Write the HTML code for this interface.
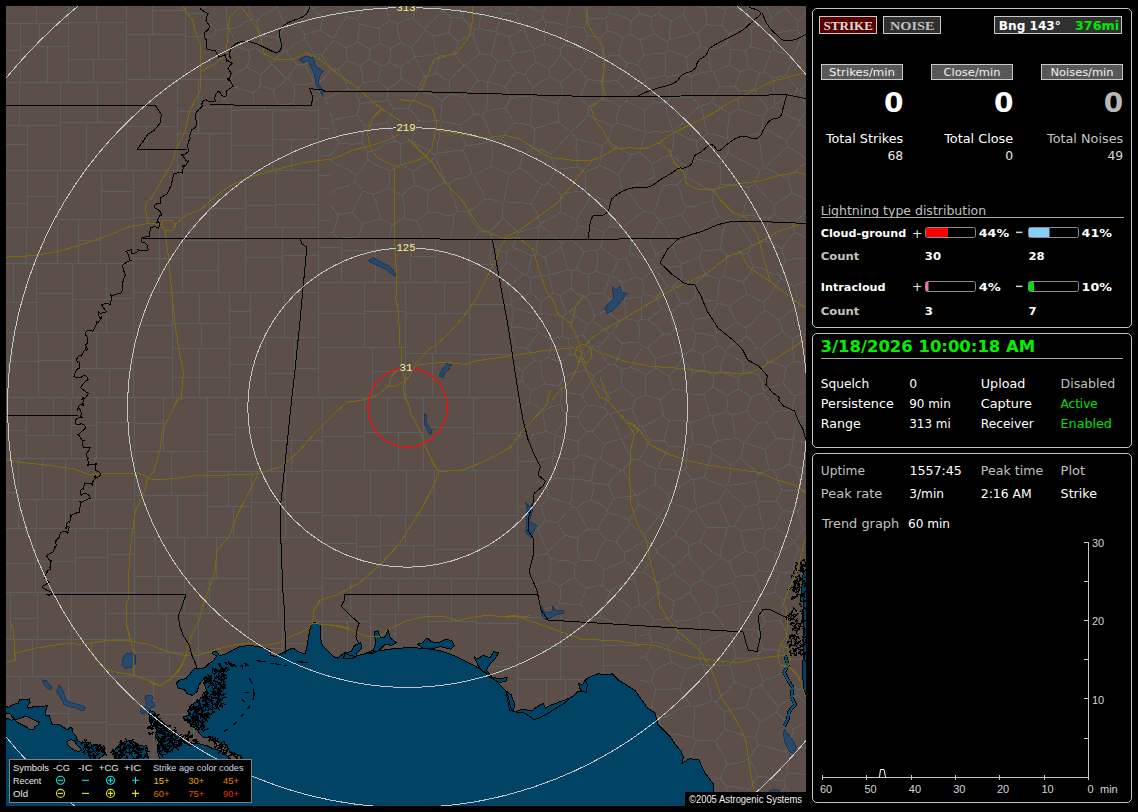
<!DOCTYPE html>
<html lang="en"><head><meta charset="utf-8"><title>Lightning Map</title>
<style>
html,body{margin:0;padding:0;background:#000;overflow:hidden}
svg{display:block;font-family:"DejaVu Sans","Liberation Sans",sans-serif}
</style></head><body>
<svg width="1138" height="812" viewBox="0 0 1138 812">
<rect width="1138" height="812" fill="#000"/>
<defs><clipPath id="mc"><rect x="6" y="6" width="800" height="800"/></clipPath></defs>
<g clip-path="url(#mc)" shape-rendering="crispEdges">
<rect x="6" y="6" width="800" height="800" fill="#5c4f4a"/>
<path d="M794.5 232.4 L805.2 237.0 L807.0 237.5 M794.5 232.4 L792.7 224.0 M792.7 224.0 L801.1 216.5 L807.0 208.9 M807.0 197.5 L805.8 199.2 M805.8 199.2 L807.0 203.8 M794.5 232.4 L787.6 240.4 L781.6 249.1 M807.0 257.8 L804.9 258.1 L795.0 258.4 L785.3 260.7 M785.3 260.7 L781.6 249.1 M706.7 527.3 L716.9 527.4 L727.0 527.8 M706.7 527.3 L703.7 535.1 L698.9 542.0 M698.9 542.0 L706.5 545.9 L712.7 552.0 L720.2 556.0 M727.0 527.8 L724.6 537.2 L721.5 546.4 L720.2 556.0 M626.0 318.5 L638.5 321.3 M626.0 318.5 L625.4 308.6 L623.9 298.7 M638.5 321.3 L641.1 319.7 M641.1 319.7 L641.6 308.2 L641.5 296.7 M641.5 296.7 L632.7 297.8 L623.9 298.7 M585.3 370.3 L581.9 359.5 M585.3 370.3 L593.2 375.5 M593.2 375.5 L601.4 370.4 L609.0 364.6 M581.9 359.5 L587.0 352.9 L591.7 345.9 M609.0 364.6 L602.6 356.2 L598.0 346.7 M598.0 346.7 L591.7 345.9 M607.2 393.9 L599.4 387.4 L593.3 379.1 M607.2 393.9 L604.8 408.3 M604.8 408.3 L595.8 405.7 L586.5 405.0 M593.3 379.1 L588.1 387.0 L582.1 394.3 M582.1 394.3 L586.5 405.0 M608.0 413.4 L604.8 408.3 M608.0 413.4 L610.4 414.3 M610.4 414.3 L620.9 410.8 L631.7 408.5 M631.7 408.5 L636.5 398.4 M622.3 386.6 L629.5 392.4 L636.5 398.4 M622.3 386.6 L615.2 391.2 L607.2 393.9 M562.3 391.4 L559.3 386.0 M562.3 391.4 L572.1 393.5 L582.1 394.3 M559.3 386.0 L563.8 377.0 M563.8 377.0 L574.2 372.7 L585.3 370.3 M593.2 375.5 L593.3 379.1 M562.3 391.4 L559.9 404.5 M577.8 417.0 L586.5 405.0 M577.8 417.0 L567.0 415.9 M559.9 404.5 L567.0 415.9 M523.5 406.4 L521.0 405.8 M523.5 406.4 L522.4 410.9 M804.9 803.3 L803.1 807.0 M804.9 803.3 L807.0 803.2 M706.7 527.3 L701.1 519.0 L696.0 510.3 M729.3 526.3 L727.0 527.8 M729.3 526.3 L725.7 518.1 L722.0 509.9 L718.7 501.5 M696.0 510.3 L697.1 508.5 M718.7 501.5 L707.7 504.4 L697.1 508.5 M729.3 526.3 L734.4 526.1 M734.4 526.1 L739.9 516.4 L745.5 506.7 M745.5 506.7 L739.2 500.5 L732.0 495.2 L726.4 488.3 M718.7 501.5 L726.4 488.3 M608.0 413.4 L602.2 419.2 L597.2 425.7 L591.8 431.9 M610.4 414.3 L614.8 422.2 L617.8 430.7 L621.1 439.1 M621.1 439.1 L612.6 440.9 L604.5 444.2 M604.5 444.2 L598.0 438.2 L591.8 431.9 M577.8 417.0 L581.3 425.0 L586.7 431.9 M591.8 431.9 L586.7 431.9 M689.6 422.7 L692.2 433.2 L693.1 443.9 M689.6 422.7 L700.0 420.0 L709.8 415.4 M709.8 415.4 L712.6 416.3 M712.6 416.3 L713.1 424.5 L716.8 432.0 L717.5 440.1 M693.1 443.9 L701.8 444.7 L710.2 447.6 M717.5 440.1 L710.2 447.6 M687.1 393.2 L687.8 402.5 L687.9 411.9 L687.4 421.2 M687.1 393.2 L695.3 394.5 L703.7 394.7 M687.4 421.2 L689.6 422.7 M703.7 394.7 L707.1 404.9 L709.8 415.4 M528.7 402.7 L531.5 390.8 M528.7 402.7 L536.3 405.9 L542.8 410.9 M559.3 386.0 L544.9 383.9 M559.9 404.5 L551.1 407.0 L542.8 410.9 M531.5 390.8 L544.9 383.9 M563.8 377.0 L560.3 362.8 M581.9 359.5 L570.7 354.0 M570.7 354.0 L560.3 362.8 M591.7 345.9 L582.8 335.0 M582.8 335.0 L568.2 339.0 M570.7 354.0 L568.2 339.0 M609.0 364.6 L614.6 364.7 M622.3 386.6 L621.0 378.2 L621.4 369.6 M614.6 364.7 L621.4 369.6 M612.7 333.5 L610.0 333.9 M612.7 333.5 L622.2 344.0 M610.0 333.9 L604.7 341.0 L598.0 346.7 M614.6 364.7 L619.3 354.7 L622.2 344.0 M619.2 321.4 L612.7 333.5 M619.2 321.4 L626.0 318.5 M638.5 321.3 L639.6 331.9 L638.3 342.5 M622.2 344.0 L630.2 342.0 L638.3 342.5 M528.7 402.7 L523.5 406.4 M542.8 410.9 L544.1 421.0 L546.0 431.1 M527.4 429.6 L532.7 434.9 M532.7 434.9 L546.0 431.1 M567.0 415.9 L561.0 425.2 L554.9 434.5 M546.0 431.1 L554.9 434.5 M573.7 459.5 L574.2 469.4 L573.3 479.4 M573.7 459.5 L563.5 458.6 L553.7 455.9 M573.3 479.4 L563.8 478.6 L554.3 478.6 M554.3 478.6 L553.3 468.0 L552.2 457.3 M553.7 455.9 L552.2 457.3 M573.7 459.5 L579.1 454.6 M579.1 454.6 L578.4 440.9 M578.4 440.9 L566.5 439.0 L555.2 435.0 M553.7 455.9 L554.7 445.5 L555.2 435.0 M578.4 440.9 L586.7 431.9 M532.7 434.9 L530.1 439.5 M552.2 457.3 L541.2 459.3 L535.9 459.0 M554.3 478.6 L547.1 484.9 M547.1 484.9 L539.5 482.4 L537.6 481.3 M807.0 774.4 L805.7 774.5 L796.8 773.6 L787.8 772.9 M785.5 751.8 L787.8 762.2 L787.8 772.9 M785.5 751.8 L789.7 747.8 M789.7 747.8 L800.1 747.4 L807.0 748.3 M734.4 526.1 L740.8 530.6 M745.5 506.7 L757.4 504.1 M757.4 504.1 L759.8 512.2 L761.1 520.6 L764.0 528.6 M740.8 530.6 L752.4 529.3 L764.0 528.6 M727.2 485.6 L730.1 475.5 L730.9 465.0 M726.4 486.5 L718.7 484.0 L711.0 481.5 L704.0 477.2 M730.9 465.0 L721.7 459.1 L712.2 453.5 M712.2 453.5 L709.1 461.3 L706.4 469.1 L704.0 477.2 M697.1 508.5 L694.7 499.1 L694.6 489.4 L693.3 479.9 M693.3 479.9 L704.0 477.2 M633.7 577.7 L625.8 582.7 L617.1 586.5 L609.4 591.9 M633.7 577.7 L636.7 586.8 L638.7 596.1 L639.4 605.6 M639.4 605.6 L631.6 608.5 M631.6 608.5 L624.7 602.5 L616.5 598.2 L609.5 592.3 M631.6 608.5 L626.5 617.6 L622.2 624.0 M609.5 592.3 L607.0 600.9 L602.1 608.6 L600.0 617.3 M615.6 623.7 L610.7 621.1 L600.0 617.3 M587.5 529.2 L577.7 537.8 M587.5 529.2 L597.8 529.6 M597.8 529.6 L606.0 539.4 M594.8 560.8 L597.9 553.4 L601.3 546.0 L606.0 539.4 M594.8 560.8 L579.1 559.9 M577.7 537.8 L577.6 548.9 L579.1 559.9 M691.5 511.6 L684.6 507.1 L676.5 505.3 L669.4 501.2 M691.5 511.6 L686.5 518.6 L682.2 526.1 L676.0 532.1 M669.4 501.2 L664.1 508.7 L659.0 516.3 M676.0 532.1 L667.0 524.7 L659.0 516.3 M698.9 542.0 L689.1 545.6 M696.0 510.3 L691.5 511.6 M689.1 545.6 L683.4 539.7 L676.3 535.4 M676.0 532.1 L676.3 535.4 M804.9 803.3 L798.6 797.5 L791.2 793.0 L784.6 787.6 M774.3 807.0 L772.8 802.5 M784.6 787.6 L779.3 795.5 L772.8 802.5 M787.8 772.9 L783.9 780.4 M784.6 787.6 L783.9 780.4 M694.0 706.9 L690.5 705.5 M694.0 706.9 L694.6 717.1 L693.1 727.4 L693.8 737.6 M690.5 705.5 L682.3 707.9 L674.7 711.8 L667.3 716.2 L659.0 718.6 M659.0 718.6 L661.0 727.6 M666.3 732.9 L669.9 733.6 L677.9 734.6 L685.8 736.4 L693.8 737.6 M805.8 199.2 L792.0 192.9 M806.9 162.5 L800.1 166.9 L793.9 172.1 L788.3 177.9 M792.0 192.9 L788.3 177.9 M806.9 162.5 L805.5 158.0 M805.5 158.0 L796.8 151.9 L787.6 146.8 M787.6 146.8 L780.1 153.7 L772.1 160.0 L765.5 167.8 M788.3 177.9 L780.3 175.4 L773.1 171.2 L765.5 167.8 M531.5 390.8 L522.3 380.9 M522.3 380.9 L516.6 381.4 M201.9 8.3 L205.9 5.0 M622.9 469.8 L628.4 477.9 L631.0 487.7 L636.6 495.7 M636.6 495.7 L625.3 496.6 L614.0 498.6 M614.0 498.6 L608.4 484.8 M608.4 484.8 L614.1 476.6 L621.6 470.0 M604.5 444.2 L600.0 458.9 M579.1 454.6 L588.3 456.5 L596.9 460.5 M600.0 458.9 L596.9 460.5 M573.5 479.6 L572.2 487.7 L571.7 495.9 L570.7 504.1 M573.5 479.6 L582.5 480.0 L591.5 480.9 M591.5 480.9 L593.2 482.9 M593.2 482.9 L593.0 491.6 L591.2 500.1 M591.2 500.1 L583.3 503.1 L576.6 508.2 M576.6 508.2 L572.3 506.5 M570.7 504.1 L572.3 506.5 M547.1 484.9 L548.1 496.7 M548.1 496.7 L559.3 500.7 L570.7 504.1 M596.9 460.5 L593.1 470.5 L591.5 480.9 M608.4 484.8 L593.2 482.9 M621.6 470.0 L614.1 466.9 L607.0 463.1 L600.0 458.9 M614.0 498.6 L607.6 509.2 M607.6 509.2 L599.8 504.0 L591.2 500.1 M587.5 529.2 L582.1 518.7 L576.6 508.2 M597.8 529.6 L602.2 520.7 L608.1 512.7 M608.1 512.7 L607.6 509.2 M622.9 469.8 L632.8 459.4 M632.8 459.4 L626.3 449.8 L621.6 439.3 M631.7 408.5 L635.5 417.2 L639.3 426.0 M621.6 439.3 L631.2 433.6 L639.3 426.0 M636.5 398.4 L645.0 395.1 M663.3 415.4 L662.1 407.4 L659.9 399.6 M663.3 415.4 L656.5 419.9 L649.3 423.7 L641.8 426.8 M645.0 395.1 L659.9 399.6 M641.8 426.8 L639.3 426.0 M712.8 387.0 L703.7 394.7 M712.8 387.0 L720.0 390.9 L726.8 395.6 M712.6 416.3 L726.2 411.6 M726.8 395.6 L727.7 403.7 L726.2 411.6 M713.4 375.2 L704.9 370.3 M713.4 375.2 L720.0 371.2 M703.0 354.5 L704.9 370.3 M703.0 354.5 L710.6 350.3 L717.7 345.4 M717.7 345.4 L725.3 350.8 M725.3 350.8 L725.9 353.1 M720.0 371.2 L722.0 361.8 L725.9 353.1 M681.5 359.1 L688.0 365.2 L692.8 372.7 M681.5 359.1 L676.0 368.3 L668.9 376.3 M692.8 372.7 L688.8 381.8 L684.0 390.5 M668.9 376.3 L673.1 389.1 M684.0 390.5 L673.1 389.1 M703.0 354.5 L692.2 350.1 M704.9 370.3 L692.8 372.7 M681.3 355.6 L692.2 350.1 M681.3 355.6 L681.5 359.1 M687.1 393.2 L684.0 390.5 M712.8 387.0 L713.4 375.2 M687.4 421.2 L678.3 420.6 L669.2 420.8 M663.3 415.4 L669.2 420.8 M659.9 399.6 L666.6 394.5 L673.1 389.1 M717.7 345.4 L715.0 336.4 M692.2 350.1 L694.9 341.9 L695.2 333.3 M715.0 336.4 L705.2 334.2 L695.2 333.3 M671.4 311.8 L671.5 320.9 L673.6 329.9 M671.4 311.8 L681.0 303.7 M673.6 329.9 L682.8 330.2 L691.9 328.9 M681.0 303.7 L687.6 304.0 M687.6 304.0 L691.5 311.6 L695.2 319.3 M695.2 319.3 L691.9 328.9 M681.3 355.6 L676.3 351.9 M673.6 329.9 L670.4 333.6 M695.2 333.3 L691.9 328.9 M676.3 351.9 L674.5 342.4 L670.4 333.6 M661.4 308.8 L655.0 314.5 L648.2 319.7 M661.4 308.8 L671.4 311.8 M648.2 319.7 L656.4 326.3 L663.4 334.1 M663.4 334.1 L670.4 333.6 M631.3 367.6 L636.3 356.7 L642.8 346.7 M631.3 367.6 L638.9 370.6 L645.8 375.0 M645.8 375.0 L655.7 367.9 M655.7 367.9 L655.9 358.8 M655.9 358.8 L647.5 347.7 M642.8 346.7 L647.5 347.7 M621.4 369.6 L631.3 367.6 M638.3 342.5 L642.8 346.7 M645.0 395.1 L645.8 385.1 L645.8 375.0 M668.9 376.3 L655.7 367.9 M676.3 351.9 L666.1 355.3 L655.9 358.8 M663.4 334.1 L655.6 341.1 L647.5 347.7 M641.1 319.7 L648.2 319.7 M748.0 252.9 L751.9 245.4 M748.0 252.9 L737.5 254.1 L727.0 255.6 M751.9 245.4 L747.2 236.9 L742.3 228.6 L736.7 220.7 M727.0 255.6 L720.3 249.4 M720.3 249.4 L721.5 239.7 L723.5 230.2 L726.7 221.0 M726.7 221.0 L736.7 220.7 M785.3 260.7 L780.3 275.5 M781.6 249.1 L774.4 244.0 L766.2 240.9 M753.2 267.1 L762.6 268.7 L771.0 273.3 L780.3 275.5 M753.2 267.1 L748.0 252.9 M766.2 240.9 L751.9 245.4 M753.2 267.1 L749.1 275.1 L743.0 281.6 M743.0 281.6 L733.3 279.3 L723.7 276.3 M723.7 276.3 L725.9 266.0 L727.0 255.6 M801.0 304.9 L796.6 295.9 L794.3 286.3 M801.0 304.9 L793.3 309.4 L786.0 314.4 L779.4 320.3 M779.4 320.3 L772.4 315.3 L765.3 310.3 M781.0 278.5 L775.6 286.6 L770.3 294.8 L763.7 302.1 M781.0 278.5 L794.3 286.3 M765.3 310.3 L763.7 302.1 M780.3 275.5 L781.0 278.5 M743.0 281.6 L747.1 293.9 M747.1 293.9 L755.1 298.6 L763.7 302.1 M807.0 280.7 L803.0 282.0 L794.3 286.3 M803.3 607.9 L800.6 614.2 M800.6 614.2 L802.6 617.4 M782.5 651.5 L787.5 658.6 M782.5 651.5 L785.9 644.0 L788.4 636.1 M787.5 658.6 L797.3 659.3 L803.1 659.0 M803.5 634.0 L797.5 635.6 L788.4 636.1 M651.5 710.7 L653.2 700.3 L656.0 689.7 M640.0 680.7 L641.1 680.7 L651.7 681.6 M656.0 689.7 L651.7 681.6 M659.0 718.6 L655.7 715.3 M679.7 687.9 L684.6 697.0 L690.5 705.5 M679.7 687.9 L668.0 689.8 L656.0 689.7 M580.3 604.4 L583.0 596.3 L586.1 588.4 M580.3 604.4 L570.0 604.3 L559.7 603.1 M559.8 586.2 L560.6 594.7 L559.7 603.1 M559.8 586.2 L566.8 581.6 L574.2 577.4 M574.2 577.4 L579.6 583.5 L586.1 588.4 M602.7 585.7 L594.3 586.2 L586.1 588.4 M602.7 585.7 L609.4 591.9 M590.1 620.5 L600.0 617.3 M590.1 620.5 L586.1 611.9 L580.3 604.4 M575.1 563.7 L567.2 560.4 L558.5 560.3 L550.5 557.3 M575.1 563.7 L574.2 577.4 M549.4 580.2 L551.2 568.8 L550.5 557.3 M549.4 580.2 L559.8 586.2 M603.6 569.9 L594.8 560.8 M603.6 569.9 L602.7 585.7 M575.1 563.7 L579.1 559.9 M639.4 605.6 L642.7 606.4 M642.7 606.4 L649.1 612.7 L653.8 620.4 M653.8 620.4 L648.7 634.7 M640.0 635.3 L640.1 635.3 L648.7 634.7 M556.4 606.6 L560.4 616.8 L562.3 620.8 M556.4 606.6 L559.7 603.1 M543.9 608.8 L556.4 606.6 M565.0 535.4 L556.6 543.6 L547.8 551.3 M565.0 535.4 L557.7 522.6 M547.8 551.3 L542.4 540.8 L538.1 529.7 M557.7 522.6 L545.6 520.6 M538.1 529.7 L545.6 520.6 M577.7 537.8 L565.0 535.4 M550.5 557.3 L547.4 553.8 M547.4 553.8 L547.8 551.3 M572.3 506.5 L564.9 514.4 L557.7 522.6 M541.2 505.8 L548.1 496.7 M541.2 505.8 L545.6 520.6 M693.8 737.6 L696.3 740.9 M696.3 740.9 L692.7 750.2 L689.8 758.8 M772.8 802.5 L764.3 802.3 L755.8 803.8 M753.8 807.0 L755.8 803.8 M725.1 729.7 L735.3 732.4 L745.3 736.2 L755.9 737.6 M725.1 729.7 L724.7 720.6 L723.9 711.6 M760.0 722.5 L755.9 737.6 M760.0 722.5 L754.0 714.3 L746.3 707.6 M746.3 707.6 L735.0 708.7 L723.9 711.6 M786.5 5.0 L786.3 8.6 M807.0 13.2 L804.2 14.8 L798.4 20.9 M786.3 8.6 L792.0 15.1 L798.4 20.9 M792.7 224.0 L783.3 219.0 L773.8 214.2 M792.0 192.9 L783.7 199.2 L774.9 204.7 M774.9 204.7 L773.8 214.2 M766.2 240.9 L766.6 229.2 L769.5 217.7 M773.8 214.2 L769.5 217.7 M736.7 220.7 L743.1 215.2 M769.5 217.7 L760.6 217.4 L752.0 215.4 L743.1 215.2 M763.6 168.0 L760.4 170.2 M774.9 204.7 L767.4 198.4 L761.0 191.2 L754.7 183.7 M760.4 170.2 L754.7 183.7 M743.1 215.2 L744.6 206.0 L747.5 197.1 L748.4 187.8 M748.4 187.8 L754.7 183.7 M787.6 146.8 L786.3 140.1 M786.3 140.1 L778.1 136.4 L770.5 131.4 L762.2 127.9 M763.6 168.0 L762.0 159.3 L760.7 150.6 L759.8 141.9 L758.2 133.2 M758.2 133.2 L762.2 127.9 M429.9 5.0 L432.7 5.9 L442.2 6.6 M442.2 6.6 L442.9 5.0 M607.3 201.6 L598.9 198.0 L589.9 196.8 M607.3 201.6 L609.1 209.6 L610.7 217.7 L610.6 226.0 M610.6 226.0 L603.6 232.1 M578.1 226.0 L586.8 227.2 L595.4 229.0 L603.6 232.1 M578.1 226.0 L576.3 220.4 M576.3 220.4 L580.6 212.4 L585.9 204.9 L589.9 196.8 M609.5 275.8 L595.8 271.3 M610.8 275.3 L615.1 267.9 L618.2 259.8 M618.2 259.8 L609.5 253.8 L601.2 247.1 M601.2 247.1 L597.8 250.0 M595.8 271.3 L598.0 260.8 L597.8 250.0 M576.3 220.4 L568.8 215.7 L560.5 212.4 M585.3 190.9 L589.9 196.8 M585.3 190.9 L577.0 191.5 L568.8 192.6 L560.7 194.2 M560.5 212.4 L560.8 203.3 L560.7 194.2 M232.9 86.5 L224.9 98.3 M232.9 86.5 L243.0 89.6 L253.0 92.6 M224.9 98.3 L228.7 105.0 M253.0 92.6 L254.2 105.0 M435.1 155.1 L427.5 149.6 L419.1 145.5 L411.5 139.9 M435.1 155.1 L434.7 157.3 M434.7 157.3 L428.1 162.8 L420.2 166.4 L413.1 171.2 M411.5 139.9 L401.0 143.7 M413.1 171.2 L400.8 164.4 M401.0 143.7 L400.5 154.0 L400.8 164.4 M436.1 73.3 L424.8 77.1 M436.1 73.3 L437.7 64.4 L439.9 55.7 M424.8 77.1 L420.0 67.1 L415.2 57.0 M415.2 57.0 L426.2 55.9 L436.9 53.3 M439.9 55.7 L436.9 53.3 M435.1 155.1 L437.1 153.3 M411.5 139.9 L415.5 130.5 L418.7 120.9 M418.7 120.9 L429.5 121.3 L440.4 120.1 M437.1 153.3 L437.3 145.2 L439.4 137.4 L440.2 129.4 L441.6 121.6 M387.5 88.9 L395.1 84.6 L401.2 78.4 M387.5 88.9 L387.9 100.5 M387.9 100.5 L394.2 108.6 M394.2 108.6 L408.4 108.2 M408.4 108.2 L413.7 99.3 L419.2 90.5 M401.2 78.4 L409.6 83.6 L418.7 87.6 M419.2 90.5 L418.7 87.6 M418.7 120.9 L414.4 113.9 L408.4 108.2 M442.5 100.7 L441.4 110.4 L440.4 120.1 M442.5 100.7 L435.2 96.1 L427.2 93.4 L419.2 90.5 M541.2 505.8 L532.7 504.6 M529.8 530.0 L528.3 528.6 M529.8 530.0 L538.1 529.7 M619.2 321.4 L612.8 316.3 L606.9 310.6 M622.1 297.4 L623.9 298.7 M622.1 297.4 L609.7 299.3 M606.9 310.6 L609.7 299.3 M609.5 275.8 L607.4 284.9 L603.5 293.4 M595.8 271.3 L588.9 274.4 M588.9 274.4 L588.1 284.2 L589.6 294.0 M589.6 294.0 L603.5 293.4 M622.1 297.4 L622.5 282.7 M610.8 275.3 L622.5 282.7 M609.7 299.3 L603.5 293.4 M717.5 440.1 L726.7 439.9 L735.7 437.9 M726.2 411.6 L732.5 415.0 M735.7 437.9 L733.8 426.5 L732.5 415.0 M710.2 447.6 L712.2 453.5 M730.9 465.0 L740.9 457.9 M735.7 437.9 L744.1 442.6 M740.9 457.9 L744.1 442.6 M693.3 479.9 L691.3 479.0 M693.1 443.9 L687.3 448.8 M687.3 448.8 L686.8 459.7 L685.7 470.6 M691.3 479.0 L685.7 470.6 M669.4 501.2 L668.3 494.6 M691.3 479.0 L683.5 483.9 L676.1 489.6 L668.3 494.6 M639.1 459.2 L645.5 450.2 L649.7 439.9 M639.1 459.2 L647.3 464.9 L656.2 469.3 M657.6 468.5 L661.1 461.1 L665.2 454.1 L668.7 446.7 M649.7 439.9 L664.4 440.5 M664.4 440.5 L668.7 446.7 M632.8 459.4 L639.1 459.2 M641.8 426.8 L649.7 439.9 M636.8 495.9 L646.0 489.7 L655.3 483.8 M655.3 483.8 L656.2 469.3 M685.7 470.6 L676.3 470.4 L666.9 469.6 L657.6 468.5 M668.3 494.6 L661.8 489.2 L655.3 483.8 M687.3 448.8 L678.1 446.7 L668.7 446.7 M669.2 420.8 L666.4 430.5 L664.4 440.5 M736.6 322.5 L727.0 328.6 L716.5 332.7 M736.6 322.5 L732.9 314.3 L728.8 306.3 M716.5 332.7 L714.4 323.8 L711.3 315.2 M711.3 315.2 L718.0 302.9 M728.8 306.3 L718.0 302.9 M725.3 350.8 L731.8 344.8 L739.9 341.3 L746.8 336.0 M745.8 327.8 L736.6 322.5 M745.8 327.8 L746.8 336.0 M715.0 336.4 L716.5 332.7 M747.1 293.9 L737.7 299.8 L728.8 306.3 M745.8 327.8 L752.9 322.6 L758.2 315.5 L765.3 310.3 M695.2 319.3 L703.6 318.5 L711.3 315.2 M717.0 301.3 L706.2 300.0 L695.8 297.1 M687.6 304.0 L695.8 297.1 M719.4 279.2 L723.7 276.3 M719.4 279.2 L718.6 290.3 L717.0 301.3 M585.3 172.4 L599.7 165.5 M585.3 172.4 L585.8 181.7 L585.3 190.9 M607.3 201.6 L615.3 196.5 L622.0 189.8 M622.0 189.8 L618.6 175.0 M618.6 175.0 L609.4 169.7 L599.7 165.5 M622.0 189.8 L625.9 190.8 M610.6 226.0 L622.1 228.9 M622.1 228.9 L629.0 222.3 L636.5 216.6 L644.6 211.6 M625.9 190.8 L632.9 197.1 L637.7 205.3 L644.6 211.6 M792.8 572.2 L802.6 579.9 M792.8 572.2 L794.7 560.3 L799.0 549.0 M799.0 549.0 L807.0 551.7 M799.9 593.1 L801.2 595.1 M799.9 593.1 L802.6 579.9 M803.3 529.2 L794.5 541.2 M803.3 529.2 L807.0 529.0 M794.5 541.8 L799.0 549.0 M654.3 671.4 L650.4 663.7 L645.0 657.0 M654.3 671.4 L662.4 665.8 L671.8 662.3 M645.0 657.0 L649.3 649.8 L652.4 642.2 M652.4 642.2 L660.5 643.2 L668.1 645.7 M668.1 645.7 L669.4 654.1 L671.8 662.3 M679.7 687.9 L683.3 678.6 L686.4 669.2 M654.3 671.4 L651.7 681.6 M671.8 662.3 L679.0 666.0 L686.4 669.2 M782.5 651.5 L772.9 649.5 L763.0 648.9 M787.5 658.6 L783.3 673.1 M783.3 673.1 L773.3 677.0 L763.3 681.3 M763.3 681.3 L760.6 673.6 L758.6 665.7 L755.1 658.3 M763.0 648.9 L755.1 658.3 M642.7 606.4 L651.1 599.1 L659.6 591.9 M653.8 620.4 L662.6 619.0 L671.5 617.6 M671.5 617.6 L673.0 609.5 L673.1 601.2 M673.1 601.2 L666.5 596.4 L659.6 591.9 M656.6 549.1 L646.3 540.5 M656.6 549.1 L656.8 552.5 M656.8 552.5 L650.3 562.4 L643.4 571.9 M646.3 540.5 L638.7 544.2 L631.8 549.0 L624.2 552.5 M635.9 573.1 L631.2 566.0 L624.6 560.6 M635.9 573.1 L643.4 571.9 M624.6 560.6 L624.2 552.5 M689.1 545.6 L688.2 553.0 M688.2 553.0 L681.7 560.3 L673.9 566.1 M676.3 535.4 L666.8 542.7 L656.6 549.1 M673.9 566.1 L665.7 558.9 L656.8 552.5 M673.9 566.1 L674.1 573.1 M674.1 573.1 L666.8 578.5 L658.8 583.1 M658.8 583.1 L651.2 577.3 L643.4 571.9 M603.6 569.9 L614.1 565.3 L624.6 560.6 M633.7 577.7 L635.9 573.1 M659.6 591.9 L658.8 583.1 M606.0 539.4 L615.9 542.0 M615.9 542.0 L624.2 552.5 M740.8 530.6 L742.7 541.0 L745.5 551.2 M745.5 551.2 L737.2 555.7 L729.5 561.4 M720.7 557.5 L729.5 561.4 M688.2 553.0 L692.3 560.4 L698.5 566.2 L703.2 573.1 M720.7 557.5 L712.3 565.7 L703.2 573.1 M799.9 593.1 L791.4 596.8 L782.3 598.5 M800.6 614.2 L791.7 615.7 L782.6 616.1 M782.3 598.5 L781.9 607.3 L782.6 616.1 M788.4 636.1 L784.6 627.8 L779.4 620.3 M763.0 648.9 L759.8 639.9 L758.1 630.4 M758.1 630.4 L765.7 621.8 M765.7 621.8 L779.4 620.3 M779.4 620.3 L782.6 616.1 M792.8 572.2 L779.7 572.9 M782.3 598.5 L774.7 592.2 M779.7 572.9 L776.4 582.3 L774.7 592.2 M740.7 601.4 L748.8 601.7 L756.8 600.0 M740.7 601.4 L737.8 591.7 L733.3 582.6 M733.3 582.6 L735.7 576.6 M735.7 576.6 L744.9 575.0 L754.3 575.3 M756.8 600.0 L760.5 595.3 M754.3 575.3 L758.3 585.0 L760.5 595.3 M765.7 621.8 L760.3 611.3 L756.8 600.0 M774.7 592.2 L760.5 595.3 M754.3 553.7 L757.3 561.8 L758.4 570.4 M754.3 553.7 L764.1 547.3 M764.1 547.3 L775.8 553.4 M775.8 553.4 L775.9 562.1 L777.1 570.7 M777.1 570.7 L767.7 571.8 L758.4 570.4 M745.5 551.2 L754.3 553.7 M729.5 561.4 L731.6 569.4 L735.7 576.6 M754.3 575.3 L758.4 570.4 M765.7 529.6 L763.9 538.4 L764.1 547.3 M794.5 541.8 L785.6 548.3 L775.8 553.4 M794.5 541.2 L784.6 534.6 L775.1 527.6 M775.1 527.6 L765.7 529.6 M779.7 572.9 L777.1 570.7 M645.0 657.0 L640.0 657.1 M652.4 642.2 L648.7 634.7 M658.5 516.4 L652.0 525.2 L644.8 533.6 M658.5 516.4 L648.7 510.0 L638.5 504.0 M644.8 533.6 L636.8 529.5 L629.9 523.9 M638.5 504.0 L633.9 512.3 L629.0 520.5 M629.0 520.5 L629.9 523.9 M646.3 540.5 L644.8 533.6 M636.8 495.9 L638.5 504.0 M615.9 542.0 L622.7 532.8 L629.9 523.9 M608.1 512.7 L619.0 515.6 L629.0 520.5 M757.6 776.5 L749.7 790.0 M757.6 776.5 L754.3 767.3 L749.4 758.9 M749.7 790.0 L738.2 787.2 L726.4 786.4 M749.4 758.9 L738.4 762.9 L726.8 764.5 M726.8 764.5 L720.0 778.3 M720.0 778.3 L726.4 786.4 M783.9 780.4 L775.0 780.2 L766.5 777.1 L757.6 776.5 M755.8 803.8 L749.7 790.0 M785.5 751.8 L776.4 749.6 L767.5 746.8 L758.4 744.7 M758.4 744.7 L753.7 751.6 L749.4 758.9 M727.0 807.0 L727.1 803.1 L727.5 794.7 L726.4 786.4 M725.1 729.7 L715.6 741.4 M755.9 737.6 L758.4 744.7 M715.6 741.4 L719.2 749.1 L724.0 756.3 L726.8 764.5 M715.6 741.4 L706.0 740.0 L696.3 740.9 M710.3 779.8 L720.0 778.3 M730.1 664.9 L721.0 665.5 L711.9 665.8 L702.8 664.8 M730.1 664.9 L732.8 673.3 L734.4 682.0 M734.4 682.0 L728.7 689.2 L722.0 695.6 L715.5 702.0 M702.8 664.8 L705.7 673.7 L707.9 682.7 L710.4 691.7 L711.6 700.9 M711.6 700.9 L715.5 702.0 M752.3 689.0 L743.3 685.6 L734.4 682.0 M752.3 689.0 L761.7 685.0 M761.7 685.0 L763.3 681.3 M735.7 658.5 L745.4 658.8 L755.1 658.3 M735.7 658.5 L730.1 664.9 M746.3 707.6 L749.1 698.3 L752.3 689.0 M723.9 711.6 L715.5 702.0 M694.0 706.9 L703.0 704.3 L711.6 700.9 M686.4 669.2 L700.9 663.5 M700.9 663.5 L702.8 664.8 M671.4 20.9 L683.4 14.7 M671.4 20.9 L669.8 30.0 L669.7 39.2 M683.4 14.7 L688.6 23.8 L694.4 32.4 M669.7 39.2 L678.2 37.7 L686.3 35.2 L694.4 32.4 M658.4 13.8 L662.0 5.0 M658.4 13.8 L671.4 20.9 M683.4 14.7 L685.8 5.2 M651.3 16.9 L639.6 13.1 M651.3 16.9 L658.4 13.8 M639.6 13.1 L637.1 5.0 M685.8 5.2 L695.8 5.7 L705.4 8.4 M709.5 5.0 L705.4 8.4 M760.4 170.2 L752.4 166.0 L744.6 161.4 L736.3 157.7 L728.7 152.8 M720.8 184.0 L721.0 174.1 L719.6 164.3 M720.8 184.0 L730.1 185.0 L739.3 185.9 L748.4 187.8 M719.6 164.3 L728.7 152.8 M758.2 133.2 L748.4 135.7 L738.6 138.1 L728.7 140.4 M728.7 152.8 L728.7 140.4 M711.3 102.5 L715.1 94.4 L719.5 86.5 M711.3 102.5 L720.6 108.0 L729.9 113.5 M719.5 86.5 L734.8 86.5 M729.9 113.5 L738.3 109.2 M738.3 109.2 L738.8 100.3 L739.7 91.4 M734.8 86.5 L739.7 91.4 M762.2 127.9 L762.9 116.1 M727.5 138.8 L727.4 130.3 L728.6 121.9 L729.9 113.5 M762.9 116.1 L754.4 114.8 L746.4 111.9 L738.3 109.2 M786.3 8.6 L778.2 12.5 L771.4 18.4 M798.4 20.9 L797.0 29.8 M797.0 29.8 L785.9 31.4 L774.8 33.0 M774.8 33.0 L769.4 26.3 M771.4 18.4 L769.4 26.3 M771.4 18.4 L766.9 7.6 L765.3 5.0 M694.4 32.4 L697.6 33.9 M705.4 8.4 L706.4 16.7 L706.3 24.9 M706.3 24.9 L697.6 33.9 M661.4 308.8 L656.0 297.2 M681.0 303.7 L677.0 295.3 L672.5 287.2 M672.5 287.2 L667.5 286.8 M667.5 286.8 L656.0 297.2 M641.5 296.7 L644.2 293.9 M656.0 297.2 L644.2 293.9 M695.8 297.1 L694.5 283.6 M672.5 287.2 L682.1 277.4 M682.1 277.4 L694.5 283.6 M719.4 279.2 L706.2 274.9 M706.2 274.9 L694.5 283.6 M454.7 54.6 L464.3 65.7 M454.7 54.6 L439.9 55.7 M436.1 73.3 L449.1 81.5 M464.3 65.7 L456.1 73.1 L449.1 81.5 M424.8 77.1 L418.7 87.6 M442.5 100.7 L450.1 94.0 M449.1 81.5 L450.1 94.0 M461.9 17.2 L451.6 17.9 M461.9 17.2 L468.3 23.8 L475.2 29.8 M451.6 17.9 L448.7 32.6 M448.7 32.6 L458.1 41.7 M458.1 41.7 L465.2 37.4 L472.9 34.0 M475.2 29.8 L472.9 34.0 M442.2 6.6 L443.3 10.9 M443.3 10.9 L451.6 17.9 M467.2 5.0 L461.9 17.2 M454.7 54.6 L458.1 41.7 M433.9 36.1 L434.3 44.9 L436.9 53.3 M433.9 36.1 L448.7 32.6 M631.7 155.1 L624.9 164.9 L618.6 175.0 M631.7 155.1 L623.5 151.1 L615.7 146.5 L608.3 141.2 M599.7 165.5 L600.8 155.3 L602.6 145.2 M608.3 141.2 L602.6 145.2 M639.6 13.1 L631.8 20.8 M631.8 20.8 L621.0 15.7 L609.4 13.0 M609.4 13.0 L609.2 5.0 M566.8 5.0 L570.5 5.6 M330.0 232.6 L333.1 232.9 M333.1 232.9 L336.5 223.9 L337.7 214.4 M337.7 214.4 L330.0 205.0 M570.3 239.3 L577.9 244.6 L583.8 251.7 M570.3 239.3 L562.1 242.8 M562.1 242.8 L560.8 247.0 M560.8 247.0 L564.7 258.1 L567.8 269.5 M583.8 251.7 L580.2 260.8 L575.8 269.6 M575.8 269.6 L570.9 270.7 M567.8 269.5 L570.9 270.7 M578.1 226.0 L570.3 239.3 M601.2 247.1 L603.6 232.1 M597.8 250.0 L583.8 251.7 M544.7 257.0 L547.7 265.8 L550.2 274.6 M544.7 257.0 L553.0 252.4 L560.8 247.0 M550.2 274.6 L559.1 272.3 L567.8 269.5 M588.9 274.4 L575.8 269.6 M536.4 253.7 L531.4 256.1 M536.4 253.7 L536.5 244.6 L538.7 235.6 L538.9 226.5 M531.4 256.1 L522.4 251.2 L512.8 247.6 M512.8 247.6 L518.2 232.6 M518.2 232.6 L528.5 229.5 L538.9 226.5 M560.5 212.4 L550.5 218.4 L540.2 223.7 M562.1 242.8 L554.5 237.3 L547.8 230.6 L539.7 225.8 M540.2 223.7 L539.7 225.8 M536.4 253.7 L544.7 257.0 M330.0 159.6 L334.2 163.1 L341.9 166.5 L349.2 170.4 L355.9 175.3 M355.9 175.3 L355.7 181.4 M355.7 181.4 L347.2 186.2 L337.6 188.7 L330.0 193.0 M249.3 5.0 L248.4 7.4 M243.8 5.0 L248.4 7.4 M224.9 98.3 L222.2 98.5 M338.8 143.1 L334.2 151.1 L330.0 155.4 M338.8 143.1 L335.2 132.1 L332.6 120.7 M332.6 120.7 L330.0 122.2 M378.3 80.6 L387.5 88.9 M378.3 80.6 L363.1 82.5 M360.2 103.5 L369.4 102.3 L378.7 101.6 L387.9 100.5 M360.2 103.5 L355.5 91.5 M363.1 82.5 L355.5 91.5 M295.8 105.0 L293.1 103.4 M293.1 103.4 L281.0 105.0 M387.5 121.9 L376.2 124.8 L364.6 125.5 M387.5 121.9 L390.3 131.8 L395.2 140.9 M395.2 140.9 L385.7 143.6 L377.4 149.5 L367.8 152.2 M364.6 125.5 L362.3 134.5 L362.5 143.8 M362.5 143.8 L367.8 152.2 M357.3 115.3 L360.2 103.5 M357.3 115.3 L364.6 125.5 M394.2 108.6 L387.5 121.9 M401.0 143.7 L395.2 140.9 M400.8 164.4 L389.9 170.5 M389.9 170.5 L382.0 167.8 L374.6 164.1 L367.7 159.5 M367.7 159.5 L367.8 152.2 M338.8 143.1 L350.7 144.1 L362.5 143.8 M357.3 115.3 L349.1 116.7 L340.9 118.1 L332.8 120.3 M355.9 175.3 L362.6 168.0 L367.7 159.5 M460.4 125.1 L467.5 119.4 L474.9 114.0 M460.4 125.1 L462.4 135.7 L465.6 146.1 M465.6 146.1 L474.3 144.5 L483.1 143.5 L491.6 140.9 M481.7 114.5 L474.9 114.0 M481.7 114.5 L485.5 122.8 L488.9 131.3 L492.5 139.7 M441.6 121.6 L451.1 123.0 L460.4 125.1 M463.6 97.2 L450.1 94.0 M463.6 97.2 L470.1 105.0 L474.9 114.0 M437.1 153.3 L445.8 152.1 L454.5 150.9 L463.3 150.0 M463.3 150.0 L465.6 146.1 M421.5 5.0 L413.9 12.4 M413.9 12.4 L408.9 5.0 M385.1 5.8 L375.6 5.7 L366.1 6.9 M366.1 6.9 L365.6 5.0 M549.4 580.2 L540.0 583.5 L534.8 585.1 M547.4 553.8 L538.0 555.1 L532.9 557.3 M529.8 530.0 L528.5 532.0 M594.4 315.6 L591.1 306.0 L586.2 297.2 M594.4 315.6 L592.0 321.4 M592.0 321.4 L587.2 324.3 M587.2 324.3 L578.5 317.7 L568.9 312.5 M568.9 312.5 L576.7 304.5 L585.2 297.3 M606.9 310.6 L594.4 315.6 M589.6 294.0 L586.2 297.2 M610.0 333.9 L601.7 326.8 L592.0 321.4 M582.8 335.0 L587.2 324.3 M571.0 288.7 L577.4 294.0 L585.2 297.3 M571.0 288.7 L571.3 279.7 L570.9 270.7 M732.5 415.0 L746.8 411.1 M744.4 442.5 L751.5 433.2 L757.7 423.3 M746.8 411.1 L751.7 417.7 L757.7 423.3 M757.4 504.1 L760.1 500.9 M727.2 485.6 L736.7 484.5 L746.3 483.5 L755.6 480.7 M755.6 480.7 L757.7 490.9 L760.1 500.9 M740.9 457.9 L746.5 463.8 L753.2 468.6 L759.2 474.1 M755.6 480.7 L759.2 474.1 M746.8 336.0 L757.3 347.2 M725.9 353.1 L734.8 356.9 L742.6 362.6 M757.3 347.2 L750.2 355.1 L742.6 362.6 M779.4 320.3 L782.7 332.0 M757.3 347.2 L760.5 348.3 M782.7 332.0 L774.8 336.8 L767.5 342.3 L760.5 348.3 M522.3 380.9 L522.1 370.9 M522.1 370.9 L514.1 364.3 L514.0 364.2 M551.3 339.5 L538.2 332.4 M551.3 339.5 L551.1 348.5 L548.3 357.0 M538.2 332.4 L532.9 340.5 L526.9 348.1 M526.9 348.1 L535.3 360.5 M548.3 357.0 L540.3 361.5 M540.3 361.5 L535.3 360.5 M560.3 362.8 L548.3 357.0 M568.2 339.0 L562.1 335.9 M562.1 335.9 L551.3 339.5 M522.1 370.9 L528.5 365.5 L535.3 360.5 M514.6 347.5 L511.9 350.7 M514.6 347.5 L526.9 348.1 M544.9 383.9 L541.6 372.9 L540.3 361.5 M571.0 288.7 L560.1 295.4 M567.0 312.7 L562.9 304.3 L560.1 295.4 M562.1 335.9 L562.8 326.4 L562.7 316.8 M567.0 312.7 L562.7 316.8 M514.6 347.5 L513.1 338.1 L509.9 329.2 M538.2 332.4 L536.5 328.5 M536.5 328.5 L528.0 329.2 L519.6 326.9 L511.1 327.9 M616.2 123.2 L617.0 114.7 L619.7 106.7 M616.2 123.2 L626.1 125.4 L635.6 128.9 L645.2 132.2 M619.7 106.7 L626.5 101.2 M626.5 101.2 L635.3 105.7 L644.3 109.9 M644.3 109.9 L644.7 121.0 L645.2 132.2 M616.2 123.2 L611.7 126.7 M639.6 152.6 L642.6 142.6 L645.5 132.6 M639.6 152.6 L631.7 155.1 M611.7 126.7 L608.3 141.2 M622.1 228.9 L631.4 241.5 M631.4 241.5 L640.4 239.2 L649.6 238.0 M659.4 220.3 L653.4 213.3 M644.6 211.6 L653.4 213.3 M649.6 238.0 L655.0 229.5 L659.4 220.4 M681.8 215.2 L687.6 224.8 L694.8 233.5 M681.8 215.2 L686.4 206.8 M686.4 206.8 L695.1 206.2 L703.4 203.0 L711.9 201.4 M694.8 233.5 L703.5 228.6 L710.4 221.3 L719.2 216.5 M719.2 216.5 L715.3 209.1 L711.9 201.4 M726.7 221.0 L719.2 216.5 M720.8 184.0 L713.8 191.5 M713.8 191.5 L711.9 201.4 M625.9 190.8 L634.8 185.0 L645.2 182.1 L654.3 176.7 M653.4 213.3 L657.2 204.1 L659.7 194.4 L663.5 185.2 M663.5 185.2 L654.3 176.7 M659.4 220.3 L670.6 217.6 L681.8 215.2 M686.4 206.8 L682.3 199.8 L680.7 191.8 L676.6 184.7 M663.5 185.2 L676.6 184.7 M713.8 191.5 L704.1 187.2 L695.1 181.7 L686.0 176.2 M676.6 184.7 L686.0 176.2 M639.6 152.6 L646.7 157.8 L652.4 164.5 M652.4 164.5 L654.3 176.7 M760.0 722.5 L768.4 717.4 L776.7 712.0 M789.7 747.8 L791.4 738.5 L793.0 729.1 M776.7 712.0 L784.9 720.4 L793.0 729.1 M761.7 685.0 L766.4 692.6 L772.1 699.5 L778.2 706.1 M776.7 712.0 L778.2 706.1 M793.0 729.1 L803.4 723.9 L807.0 721.8 M703.2 573.1 L701.7 579.2 M733.3 582.6 L724.2 584.7 L715.3 587.6 M715.3 587.6 L707.9 584.4 L701.7 579.2 M674.1 573.1 L682.3 580.2 L691.4 586.0 M701.7 579.2 L691.4 586.0 M673.1 601.2 L682.0 597.4 L689.8 591.6 M689.8 591.6 L691.4 586.0 M675.9 621.5 L677.7 629.5 L677.1 637.6 M675.9 621.5 L687.4 619.9 L698.7 617.2 M677.1 637.6 L684.4 641.7 L692.4 643.8 L700.2 646.4 M698.7 617.2 L699.7 626.3 L700.7 635.4 L701.4 644.5 M701.4 644.5 L700.2 646.4 M671.5 617.6 L675.9 621.5 M668.1 645.7 L677.1 637.6 M701.6 613.4 L698.6 605.6 L694.3 598.6 L689.8 591.6 M701.6 613.4 L698.7 617.2 M700.9 663.5 L699.3 655.0 L700.2 646.4 M739.3 627.8 L729.9 633.6 M739.3 627.8 L739.4 619.5 L739.2 611.2 L739.5 602.9 M739.5 602.9 L728.2 605.5 L716.7 606.7 M728.6 633.2 L723.8 625.8 L718.8 618.4 L712.6 612.0 M716.7 606.7 L712.6 612.0 M735.7 658.5 L734.8 649.9 L732.7 641.7 L729.9 633.6 M758.1 630.4 L748.7 629.4 L739.3 627.8 M715.3 587.6 L717.3 597.1 L716.7 606.7 M701.6 613.4 L712.6 612.0 M701.4 644.5 L710.1 639.8 L719.1 635.9 L728.6 633.2 M714.0 72.7 L719.5 86.5 M714.0 72.7 L721.7 68.6 L729.7 65.0 M734.8 86.5 L740.1 71.7 M740.1 71.7 L729.7 65.0 M713.9 5.0 L718.4 7.5 L726.3 9.3 M706.3 24.9 L722.1 25.3 M722.1 25.3 L723.7 17.2 L726.3 9.3 M754.2 5.0 L753.5 5.9 L744.8 12.3 M744.8 12.3 L732.9 6.4 M726.3 9.3 L732.9 6.4 M739.7 91.4 L754.1 89.3 M740.1 71.7 L749.1 68.5 M749.1 68.5 L760.0 72.9 M760.0 72.9 L756.9 81.0 L754.1 89.3 M762.9 116.1 L768.0 109.5 M754.1 89.3 L758.3 96.3 L763.8 102.5 L768.0 109.5 M797.0 29.8 L802.0 36.6 M802.0 36.6 L807.0 37.8 M807.0 110.4 L799.0 120.7 M807.0 128.5 L799.3 123.6 M799.3 123.6 L799.0 120.7 M805.5 158.0 L807.0 155.5 M786.3 140.1 L793.3 132.2 L799.3 123.6 M773.4 107.0 L768.0 109.5 M773.4 107.0 L782.3 111.0 L790.0 117.0 L799.0 120.7 M807.0 109.8 L803.3 100.2 L799.8 90.0 M799.8 90.0 L807.0 85.0 M472.9 34.0 L475.5 44.2 L479.8 53.8 M479.8 53.8 L472.4 59.5 L465.7 66.0 M463.6 97.2 L471.1 88.8 L478.1 80.0 M465.7 66.0 L472.5 72.5 L478.1 80.0 M413.9 12.4 L413.0 17.6 M385.1 5.8 L389.6 20.8 M389.6 20.8 L397.5 23.6 M397.5 23.6 L405.1 20.1 L413.0 17.6 M443.3 10.9 L437.1 16.7 L430.7 22.2 L425.2 28.7 M413.0 17.6 L418.4 23.9 L425.2 28.7 M433.9 36.1 L425.5 29.8 M547.4 5.0 L542.7 12.8 M570.5 5.6 L568.3 15.5 L565.9 25.4 M543.3 18.9 L542.7 12.8 M543.3 18.9 L545.9 21.7 M545.9 21.7 L556.0 23.2 L565.9 25.4 M475.2 29.8 L479.3 28.1 M479.3 28.1 L480.1 19.3 L481.8 10.6 L483.6 5.0 M582.6 5.0 L586.3 11.1 L588.9 19.3 M609.4 13.0 L605.8 18.5 M588.9 19.3 L597.3 18.0 L605.8 18.5 M603.8 56.2 L601.1 47.1 L600.8 37.6 M623.5 37.9 L620.3 46.4 L618.7 55.3 M623.5 37.9 L615.9 33.3 L607.4 30.7 M604.1 56.4 L618.7 55.3 M600.8 37.6 L607.4 30.7 M631.8 20.8 L629.9 34.1 M623.5 37.9 L629.9 34.1 M607.4 30.7 L605.8 18.5 M531.4 256.1 L529.8 265.7 L526.6 274.9 M512.8 247.6 L505.9 252.4 M523.3 274.8 L515.3 267.8 L507.0 261.2 M523.3 274.8 L526.6 274.9 M505.9 252.4 L507.0 261.2 M523.3 274.8 L515.8 280.7 L508.3 286.5 M508.3 286.5 L500.0 282.0 M507.0 261.2 L500.6 270.0 L498.5 273.8 M355.7 181.4 L362.5 190.9 M337.7 214.4 L352.5 212.3 M362.5 190.9 L357.7 201.7 L352.5 212.3 M503.0 218.2 L502.3 202.5 M503.0 218.2 L510.9 225.1 L518.2 232.6 M531.3 203.2 L536.9 213.0 L540.2 223.7 M531.3 203.2 L522.1 203.0 L512.8 202.6 L503.6 201.5 M585.3 172.4 L577.9 166.9 M602.6 145.2 L594.0 142.9 L585.2 141.4 L576.7 138.7 M576.7 138.7 L575.9 148.2 L577.6 157.5 L577.9 166.9 M333.1 232.9 L337.5 238.5 M332.8 120.3 L330.0 111.3 M327.6 105.0 L325.1 98.9 M355.5 91.5 L348.3 89.3 M348.3 89.3 L340.4 92.0 L332.6 95.1 L325.1 98.9 M305.6 105.0 L310.7 102.0 L320.8 96.2 M320.8 96.2 L325.1 98.9 M212.3 37.6 L216.4 30.5 M238.0 46.8 L231.0 52.3 L226.3 57.6 M238.0 46.8 L233.5 38.1 L229.8 29.0 M216.4 30.5 L227.4 28.0 M227.4 28.0 L229.8 29.0 M204.7 20.1 L208.0 22.4 L216.4 30.5 M231.2 77.1 L226.9 73.9 M231.2 77.1 L239.0 71.7 L247.4 67.4 M248.6 50.5 L249.2 59.0 L247.4 67.4 M248.6 50.5 L238.0 46.8 M232.9 86.5 L231.2 77.1 M226.4 5.0 L226.5 11.3 L226.9 19.7 L227.4 28.0 M252.9 19.6 L244.8 21.7 L237.9 27.0 L229.8 29.0 M252.9 19.6 L248.4 7.4 M751.5 397.1 L762.5 392.8 M751.5 397.1 L738.2 389.0 M758.2 374.4 L744.0 371.7 M758.2 374.4 L761.9 382.5 L763.4 391.2 M738.2 389.0 L738.0 377.9 M738.0 377.9 L744.0 371.7 M746.8 411.1 L751.5 397.1 M766.4 422.5 L757.7 423.3 M766.4 422.5 L773.9 411.6 M773.9 411.6 L768.7 401.9 L762.5 392.8 M726.8 395.6 L738.2 389.0 M742.6 362.6 L744.0 371.7 M760.5 348.3 L767.7 361.7 M767.7 361.7 L758.2 374.4 M720.0 371.2 L728.9 374.8 L738.0 377.9 M803.3 529.2 L800.6 520.4 L797.0 511.8 M775.1 527.6 L778.8 519.0 L783.3 510.8 M783.3 510.8 L797.0 511.8 M760.1 500.9 L768.2 501.9 L776.2 500.8 M783.3 510.8 L776.2 500.8 M797.0 511.8 L802.2 504.9 L807.0 499.7 M744.4 442.5 L754.9 446.0 L765.5 449.3 M759.2 474.1 L769.6 469.3 M765.5 449.3 L766.6 459.5 L769.6 469.3 M766.4 422.5 L771.5 430.5 L777.0 438.2 M765.5 449.3 L771.3 443.8 L777.0 438.2 M776.2 500.8 L781.9 490.4 M781.9 490.4 L777.4 480.6 L774.2 470.4 M769.6 469.3 L774.2 470.4 M801.0 304.9 L807.0 307.4 M782.7 332.0 L792.1 338.9 M792.1 338.9 L800.8 335.2 L807.0 333.2 M794.4 395.8 L788.6 390.0 L783.5 383.6 M794.4 395.8 L802.5 393.2 L807.0 390.4 M783.5 383.6 L784.8 375.3 L785.7 366.9 M807.0 364.8 L803.8 363.9 L794.4 360.7 M794.4 360.7 L785.7 366.9 M792.4 409.6 L794.4 395.8 M792.4 409.6 L783.2 410.7 L773.9 411.6 M763.4 391.2 L773.1 386.6 L783.5 383.6 M767.7 361.7 L777.0 363.3 L785.7 366.9 M792.1 338.9 L792.9 349.8 L794.4 360.7 M560.1 295.4 L552.7 293.0 M552.7 293.0 L551.2 284.4 L549.1 276.0 M526.6 274.9 L530.4 278.0 M549.1 276.0 L539.6 275.8 L530.4 278.0 M727.5 138.8 L718.0 135.2 L707.9 133.9 M711.3 102.5 L700.8 105.9 M700.8 105.9 L703.6 115.2 L704.9 124.7 L707.9 133.9 M654.5 269.6 L642.2 279.5 M654.5 269.6 L655.1 267.5 M655.1 267.5 L653.7 260.9 M653.7 260.9 L645.8 258.4 L637.5 257.1 L629.8 253.8 M629.8 253.8 L626.2 257.9 M626.2 257.9 L630.4 267.9 L635.8 277.3 M635.8 277.3 L642.2 279.5 M667.5 286.8 L661.7 277.7 L654.5 269.6 M644.2 293.9 L642.2 279.5 M682.1 277.4 L680.6 266.1 M680.6 266.1 L672.2 267.1 L663.6 266.7 L655.1 267.5 M631.4 241.5 L629.8 253.8 M649.6 238.0 L652.2 246.2 L656.2 253.9 M656.2 253.9 L653.7 260.9 M618.2 259.8 L626.2 257.9 M622.5 282.7 L635.8 277.3 M681.7 264.1 L676.5 256.0 L673.2 246.9 M681.7 264.1 L690.2 260.3 L699.0 257.4 M694.4 236.0 L684.7 240.5 L674.4 243.5 M694.4 236.0 L699.4 242.7 L702.3 250.6 M674.4 243.5 L673.2 246.9 M702.3 250.6 L699.0 257.4 M680.6 266.1 L681.7 264.1 M656.2 253.9 L664.5 249.8 L673.2 246.9 M706.2 274.9 L701.8 266.5 L699.0 257.4 M659.4 220.4 L665.3 227.5 L668.8 236.2 L674.4 243.5 M694.8 233.5 L694.4 236.0 M720.3 249.4 L711.4 250.3 L702.3 250.6 M807.0 704.9 L803.0 701.1 L797.4 694.9 M803.5 685.4 L798.4 690.2 M798.4 690.2 L797.4 694.9 M778.2 706.1 L787.8 700.6 L797.4 694.9 M783.3 673.1 L790.6 681.8 L798.4 690.2 M640.4 40.1 L643.8 55.4 M640.4 40.1 L653.9 33.5 M643.8 55.4 L654.3 53.4 L665.0 53.3 M653.9 33.5 L660.5 37.9 L667.6 41.7 M667.6 41.7 L667.7 50.0 M667.7 50.0 L665.0 53.3 M651.3 16.9 L651.5 25.3 L653.9 33.5 M629.9 34.1 L640.4 40.1 M669.7 39.2 L667.6 41.7 M697.6 33.9 L701.3 45.5 M701.3 45.5 L694.4 51.7 L686.7 56.9 M686.7 56.9 L677.3 53.1 L667.7 50.0 M711.5 71.1 L701.2 72.7 L691.5 76.5 M711.5 71.1 L709.2 60.4 L708.2 49.5 M708.2 49.5 L701.3 45.5 M686.7 56.9 L687.3 65.6 L688.6 74.2 M691.5 76.5 L688.6 74.2 M750.9 46.6 L745.9 50.9 M750.9 46.6 L751.9 36.9 L750.7 27.3 M745.9 50.9 L731.0 49.2 M750.7 27.3 L748.1 25.5 M748.1 25.5 L738.1 29.2 L728.6 33.9 M728.6 33.9 L726.4 44.4 M726.4 44.4 L731.0 49.2 M749.1 68.5 L746.3 59.9 L745.9 50.9 M729.7 65.0 L731.0 49.2 M769.4 26.3 L760.0 25.9 L750.7 27.3 M744.8 12.3 L748.1 25.5 M722.1 25.3 L728.6 33.9 M708.2 49.5 L717.6 48.0 L726.4 44.4 M711.5 71.1 L714.0 72.7 M773.4 107.0 L774.6 105.0 M774.6 105.0 L782.6 100.1 L790.6 95.4 L798.1 89.7 M479.3 28.1 L487.5 30.7 L495.9 31.5 M479.8 53.8 L491.5 54.9 M491.5 54.9 L494.4 43.8 L496.7 32.6 M397.5 23.6 L398.1 33.3 L400.7 42.7 M425.5 29.8 L418.5 38.7 L411.6 47.7 M400.7 42.7 L411.6 47.7 M401.2 78.4 L400.0 68.0 M400.0 68.0 L407.2 62.2 L414.8 56.8 M414.8 56.8 L411.6 47.7 M389.6 20.8 L379.0 28.3 M379.0 28.3 L379.4 43.1 M400.7 42.7 L390.3 48.7 M379.4 43.1 L390.3 48.7 M400.0 68.0 L389.9 62.4 M390.3 48.7 L389.9 62.4 M378.3 80.6 L381.3 66.1 M381.3 66.1 L389.9 62.4 M618.7 55.3 L627.2 63.5 M643.8 55.4 L637.0 64.2 M637.0 64.2 L627.2 63.5 M603.8 81.2 L617.7 80.8 M603.3 80.8 L603.7 72.6 L603.0 64.5 L604.1 56.4 M627.2 63.5 L622.9 72.4 L617.7 80.8 M602.8 98.7 L611.6 102.1 L619.7 106.7 M602.8 98.7 L602.1 89.9 L603.8 81.2 M626.5 101.2 L627.5 93.2 M627.5 93.2 L617.7 80.8 M603.8 56.2 L595.7 58.0 L587.5 57.5 M603.3 80.8 L587.4 79.6 M587.4 79.6 L579.7 69.9 M587.5 57.5 L579.7 69.9 M535.9 62.0 L548.8 68.9 M535.9 62.0 L533.1 49.7 M533.5 49.0 L545.1 43.8 M545.1 43.8 L560.1 49.1 M548.8 68.9 L555.1 62.2 L560.4 54.8 M560.4 54.8 L560.1 49.1 M523.9 28.8 L528.1 39.2 L533.5 49.0 M522.8 28.6 L516.4 33.6 L508.8 36.7 M514.1 53.4 L511.7 45.0 L508.8 36.7 M514.1 53.4 L523.6 51.8 L533.1 49.7 M543.3 18.9 L533.5 23.6 L523.9 28.8 M545.9 21.7 L544.2 32.7 L545.1 43.8 M550.5 76.7 L548.8 68.9 M550.5 76.7 L560.6 83.0 M560.6 83.0 L568.0 76.7 L575.2 70.0 M575.2 70.0 L567.9 62.3 L560.4 54.8 M611.7 126.7 L604.2 122.1 L595.9 119.1 L588.3 114.9 M576.7 138.7 L571.5 132.7 M571.3 131.8 L580.0 123.5 L588.3 114.9 M560.6 83.0 L562.9 95.4 M587.4 79.6 L583.3 88.1 L580.5 97.2 M579.7 69.9 L575.2 70.0 M580.5 97.2 L571.7 96.8 L562.9 95.4 M602.8 98.7 L595.6 102.6 L588.8 107.2 M580.5 97.2 L588.8 107.2 M588.8 107.2 L588.3 114.9 M521.3 5.0 L515.0 13.2 M515.0 13.2 L503.2 13.7 M503.2 13.7 L496.5 5.0 M542.7 12.8 L532.4 8.5 L525.8 5.0 M522.8 28.6 L518.3 21.2 L515.0 13.2 M495.9 31.5 L499.2 22.5 L503.2 13.7 M496.7 32.6 L508.8 36.7 M497.9 249.9 L494.5 251.1 M497.9 249.9 L493.5 240.9 L489.3 231.8 M479.7 231.0 L489.3 231.8 M479.7 231.0 L474.8 237.9 L473.7 239.1 M503.0 218.2 L496.4 225.3 L489.3 231.8 M505.9 252.4 L497.9 249.9 M434.7 157.3 L438.8 165.3 L442.0 173.7 L445.8 181.9 M413.1 171.2 L414.6 185.3 M414.6 185.3 L429.2 191.0 M429.2 191.0 L437.3 186.1 L445.8 181.9 M449.8 239.0 L451.1 233.6 L453.3 224.5 L453.5 215.1 M424.1 238.9 L423.8 238.4 L420.9 229.3 L416.0 221.2 M453.5 215.1 L444.9 215.1 L436.8 212.1 L428.2 212.2 M416.0 221.2 L428.2 212.2 M414.6 185.3 L407.7 189.5 L402.2 195.5 M389.9 170.5 L389.6 179.2 L388.5 187.7 M388.5 187.7 L402.2 195.5 M362.5 190.9 L372.6 194.3 M388.5 187.7 L380.7 191.5 L372.6 194.3 M429.2 191.0 L427.5 201.5 L428.2 212.2 M416.0 221.2 L404.5 218.3 M402.2 195.5 L404.6 206.8 L404.5 218.3 M550.7 154.1 L552.2 162.2 L556.1 169.4 M550.7 154.1 L542.3 149.9 L533.3 147.6 M533.3 147.6 L522.3 156.2 M556.1 169.4 L552.2 176.5 L548.2 183.6 M519.4 168.0 L522.3 156.2 M519.4 168.0 L527.6 172.9 L534.4 179.6 L542.2 185.0 M548.2 183.6 L542.2 185.0 M571.5 132.7 L564.3 139.6 L558.0 147.3 L550.7 154.1 M577.9 166.9 L567.0 168.2 L556.1 169.4 M560.7 194.2 L555.2 188.0 L548.2 183.6 M492.5 139.7 L501.3 138.7 M491.6 140.9 L492.0 149.2 L492.2 157.6 L490.9 165.9 M509.8 173.5 L500.0 170.5 L490.9 165.9 M509.8 173.5 L519.4 168.0 M501.3 138.7 L507.9 145.1 L515.7 149.9 L522.3 156.2 M531.3 203.2 L536.5 193.9 L542.2 185.0 M503.6 201.5 L505.6 192.2 L507.5 182.8 L509.8 173.5 M491.5 54.9 L497.4 61.1 M514.1 53.4 L508.9 60.8 M508.9 60.8 L497.4 61.1 M478.1 80.0 L487.5 81.7 M497.4 61.1 L493.1 71.7 L487.5 81.7 M286.5 78.8 L280.4 85.0 L273.2 89.7 M286.5 78.8 L278.9 71.5 L271.7 63.8 M271.7 63.8 L260.7 75.0 M273.2 89.7 L261.0 85.7 M261.0 85.7 L260.7 75.0 M253.0 92.6 L261.0 85.7 M279.1 105.0 L275.3 97.8 L273.2 89.7 M247.4 67.4 L260.7 75.0 M276.2 37.4 L262.5 35.9 M276.2 37.4 L280.4 44.3 L284.8 51.1 M284.8 51.1 L277.7 56.6 L271.7 63.2 M271.7 63.2 L264.3 54.9 L255.7 47.8 M255.7 47.8 L262.5 35.9 M248.6 50.5 L255.7 47.8 M252.9 19.6 L256.3 20.9 M256.3 20.9 L258.4 28.8 L262.5 35.9 M363.1 82.5 L362.6 73.9 L360.2 65.7 M381.3 66.1 L369.5 59.0 M360.2 65.7 L369.5 59.0 M379.4 43.1 L369.8 49.5 M369.5 59.0 L369.8 49.5 M278.1 5.0 L277.4 7.3 M277.4 7.3 L280.8 16.6 L286.2 24.8 M303.7 5.0 L306.8 6.8 M306.8 6.8 L303.2 17.1 L300.1 27.5 M286.2 24.8 L300.1 27.5 M256.3 20.9 L262.8 15.6 L270.0 11.3 L277.4 7.3 M276.2 37.4 L281.9 31.6 L286.2 24.8 M310.8 6.0 L306.8 6.8 M781.9 490.4 L791.6 490.7 L801.2 488.6 M801.2 488.6 L806.7 492.7 M792.4 409.6 L798.2 417.2 M798.2 417.2 L794.9 428.1 L793.3 439.4 M777.0 438.2 L792.5 439.9 M774.2 470.4 L782.3 468.3 L789.5 464.0 M792.5 439.9 L792.5 448.1 L790.6 456.0 L789.5 464.0 M801.2 488.6 L799.0 478.3 L796.2 468.1 M789.5 464.0 L796.2 468.1 M798.2 417.2 L807.0 416.2 M541.3 302.2 L530.3 292.3 M541.3 302.2 L540.4 312.9 M540.4 312.9 L538.9 314.5 M538.9 314.5 L530.4 312.9 L522.2 309.8 L513.5 308.7 M530.3 292.3 L521.7 297.8 L512.2 301.6 M513.5 308.7 L511.3 304.4 M512.2 301.6 L511.3 304.4 M552.7 293.0 L541.3 302.2 M530.4 278.0 L530.3 292.3 M562.7 316.8 L551.6 314.5 L540.4 312.9 M536.5 328.5 L538.9 314.5 M511.1 327.9 L512.6 318.3 L513.5 308.7 M508.3 286.5 L512.2 301.6 M671.3 154.4 L678.9 161.4 L687.5 167.0 M671.3 154.4 L673.3 142.9 L673.3 131.2 M673.3 131.2 L680.9 134.7 L688.2 138.6 L696.2 141.1 M696.2 141.1 L697.5 150.2 L696.6 159.3 M696.6 159.3 L687.5 167.0 M652.4 164.5 L661.3 158.4 L671.3 154.4 M686.0 176.2 L687.5 167.0 M719.6 164.3 L708.3 160.9 L696.6 159.3 M707.9 133.9 L696.2 141.1 M645.5 132.6 L654.5 131.8 L663.7 132.1 L672.7 130.5 M673.0 130.7 L680.4 125.2 L686.6 118.3 L693.1 111.9 L699.9 105.7 M691.5 76.5 L691.2 87.3 L692.4 98.0 M699.9 105.7 L692.4 98.0 M653.7 102.2 L665.8 102.8 M653.7 102.2 L649.8 91.6 L645.4 81.3 M665.8 102.8 L670.4 97.9 M670.4 97.9 L669.0 87.4 L667.0 76.9 M645.4 81.3 L646.2 79.1 M646.2 79.1 L655.6 77.7 L664.8 75.3 M664.8 75.3 L667.0 76.9 M644.3 109.9 L653.7 102.2 M672.7 130.5 L669.8 121.4 L666.8 112.3 L665.8 102.8 M627.5 93.2 L636.2 86.8 L645.4 81.3 M692.4 98.0 L681.4 97.3 L670.4 97.9 M688.6 74.2 L677.7 75.0 L667.0 76.9 M637.0 64.2 L642.3 71.2 L646.2 79.1 M665.0 53.3 L666.1 64.3 L664.8 75.3 M785.9 75.7 L773.9 77.8 M785.9 75.7 L788.9 67.7 L793.2 60.3 M763.9 71.7 L773.9 77.8 M763.9 71.7 L767.4 61.7 L770.9 51.8 M773.0 50.3 L770.9 51.8 M773.0 50.3 L782.5 52.8 L791.4 56.9 M791.4 56.9 L793.2 60.3 M774.6 105.0 L774.3 95.9 L773.7 86.8 L773.9 77.8 M798.1 89.7 L792.3 82.5 L785.9 75.7 M807.0 64.4 L803.9 63.2 L793.2 60.3 M760.0 72.9 L763.9 71.7 M750.9 46.6 L760.9 49.4 L770.9 51.8 M774.8 33.0 L773.6 41.6 L773.0 50.3 M802.0 36.6 L797.4 47.1 L791.4 56.9 M567.3 27.3 L565.6 35.9 L564.9 44.7 M567.3 27.3 L575.6 26.7 L583.8 27.7 M564.9 44.7 L573.4 47.1 L582.2 47.8 M582.2 47.8 L588.1 35.8 M588.1 35.8 L583.8 27.7 M565.9 25.4 L567.3 27.3 M560.1 49.1 L564.9 44.7 M588.9 19.3 L583.8 27.7 M587.5 57.5 L582.2 47.8 M600.8 37.6 L588.1 35.8 M556.7 103.5 L558.2 112.9 L559.1 122.3 M556.7 103.5 L548.8 101.5 L541.1 99.1 L532.9 98.2 M559.1 122.3 L550.5 123.3 L542.5 126.5 L534.1 128.5 M532.9 98.2 L530.9 106.8 L531.1 115.7 L529.9 124.4 M534.1 128.5 L529.9 124.4 M571.3 131.8 L559.1 122.3 M562.9 95.4 L556.7 103.5 M533.3 147.6 L534.6 138.0 L534.1 128.5 M501.3 138.7 L507.4 130.6 L514.4 123.3 M514.4 123.3 L529.9 124.4 M511.3 304.4 L504.0 304.2 M337.5 238.5 L347.6 237.4 L357.7 237.4 M358.6 238.6 L357.7 237.4 M352.5 212.3 L362.8 224.4 M357.7 237.4 L362.8 224.4 M372.6 194.3 L376.4 202.4 L378.1 211.2 L381.6 219.4 M362.8 224.4 L371.9 220.8 L381.6 219.4 M404.5 218.3 L392.4 224.6 M392.4 224.6 L381.6 219.4 M484.7 199.2 L482.2 190.5 L477.2 182.9 L473.8 174.5 M484.7 199.2 L476.7 206.0 L468.2 212.0 M468.2 212.0 L457.3 211.8 M457.3 211.8 L455.0 202.2 L451.0 193.1 L449.3 183.3 M449.3 183.3 L456.5 179.0 L464.7 177.5 L472.2 174.0 M502.3 202.5 L493.7 200.0 L484.7 199.2 M490.9 165.9 L482.8 171.0 L473.8 174.5 M479.7 231.0 L473.1 222.0 L468.2 212.0 M453.5 215.1 L457.3 211.8 M445.8 181.9 L449.3 183.3 M463.3 150.0 L466.4 158.0 L470.2 165.7 L472.2 174.0 M550.5 76.7 L541.2 81.6 L532.7 87.9 M535.9 62.0 L529.8 67.6 L525.2 74.6 M525.2 74.6 L532.7 87.9 M508.9 60.8 L515.7 72.0 M525.2 74.6 L515.7 72.0 M532.9 98.2 L531.4 96.1 M532.7 87.9 L531.4 96.1 M293.1 103.4 L294.6 94.1 L293.9 84.6 M320.8 96.2 L317.0 84.0 M317.0 84.0 L315.0 82.9 M315.0 82.9 L304.5 84.4 L293.9 84.6 M293.9 84.6 L287.9 78.8 M348.3 89.3 L344.2 78.8 L338.3 69.3 M317.0 84.0 L324.8 77.4 L330.8 69.0 M338.3 69.3 L330.8 69.0 M360.2 65.7 L347.2 61.1 M338.3 69.3 L347.2 61.1 M793.3 439.4 L804.7 443.0 L807.0 443.6 M796.2 468.1 L804.7 467.2 L807.0 466.4 M392.4 224.6 L390.1 235.0 L389.6 238.8 M487.5 81.8 L496.7 83.8 L505.4 87.4 M487.5 81.8 L487.5 91.4 L487.5 101.1 L486.2 110.7 M505.4 87.4 L511.0 98.0 M486.2 110.7 L495.8 109.3 L505.4 108.1 M505.4 108.1 L511.0 98.0 M515.7 72.0 L509.8 79.3 L505.4 87.4 M481.7 114.5 L486.2 110.7 M531.4 96.1 L521.1 96.2 L511.0 98.0 M514.4 123.3 L509.9 115.7 L505.4 108.1 M304.4 39.1 L310.0 46.0 L313.5 54.1 M304.4 39.1 L294.6 44.3 L286.1 51.3 M313.5 54.1 L305.3 64.3 M286.1 51.3 L291.4 58.1 L297.1 64.6 M297.1 64.6 L305.3 64.3 M300.1 27.5 L305.1 34.5 M305.1 34.5 L304.4 39.1 M315.0 82.9 L309.3 74.0 L305.3 64.3 M330.8 69.0 L326.2 62.0 L321.8 54.9 M321.8 54.9 L313.5 54.1 M287.9 78.8 L292.1 71.5 L297.1 64.6 M347.2 61.1 L346.4 48.1 M321.8 54.9 L327.0 46.9 L334.2 40.5 M334.2 40.5 L346.4 48.1 M369.8 49.5 L357.6 41.9 M357.6 41.9 L346.4 48.1 M379.0 28.3 L369.6 26.5 L360.3 24.0 M357.6 41.9 L358.6 32.9 L360.3 24.0 M366.1 6.9 L356.9 19.2 M356.9 19.2 L360.3 24.0 M320.2 30.0 L333.7 38.6 M320.2 30.0 L322.8 17.1 M333.7 38.6 L337.3 30.9 L341.9 23.8 L346.8 16.8 M322.8 17.1 L332.5 15.0 L341.7 11.2 M341.7 11.2 L346.8 16.8 M305.1 34.5 L320.2 30.0 M310.8 6.0 L316.2 12.2 L322.8 17.1 M356.9 19.2 L346.8 16.8 M340.6 5.0 L341.7 11.2 M5.0 397.8 L8.2 397.8 M8.2 397.8 L26.9 397.8 M26.9 397.8 L38.7 397.8 M38.7 397.8 L53.1 397.8 M53.1 397.8 L71.2 397.8 M72.2 397.8 L96.1 397.8 M96.1 397.8 L109.7 397.8 M109.7 397.8 L133.1 397.8 M134.5 397.8 L163.4 397.8 M163.4 397.8 L172.3 397.8 M172.3 397.8 L199.9 397.8 M199.9 397.8 L207.1 397.8 M207.1 397.8 L229.2 397.8 M229.2 397.8 L235.8 397.8 M235.8 397.8 L265.4 397.8 M265.4 397.8 L271.8 397.8 M271.8 397.8 L294.9 397.8 M294.9 397.8 L318.2 397.8 M318.2 397.8 L322.1 397.8 M322.1 397.8 L364.3 397.8 M364.3 397.8 L372.3 397.8 M372.3 397.8 L387.1 397.8 M387.1 397.8 L405.6 397.8 M405.6 397.8 L423.9 397.8 M423.9 397.8 L432.8 397.8 M432.8 397.8 L469.9 397.8 M469.9 397.8 L473.8 397.8 M473.8 397.8 L517.0 397.8 M517.0 397.8 L518.6 397.8 M318.2 105.0 L318.2 110.6 M318.2 110.6 L318.2 128.4 M318.2 128.4 L318.2 139.5 M318.2 139.5 L318.2 155.1 M318.2 155.1 L318.2 170.4 M318.2 170.4 L318.2 175.9 M318.2 175.9 L318.2 204.5 M318.2 204.5 L318.2 220.5 M318.2 220.5 L318.2 227.8 M318.2 227.8 L318.2 247.6 M318.2 247.6 L318.2 255.2 M318.2 255.2 L318.2 282.2 M318.2 282.2 L318.2 292.2 M318.2 292.2 L318.2 313.9 M318.2 313.9 L318.2 337.6 M318.2 337.6 L318.2 347.5 M318.2 347.5 L318.2 368.2 M318.2 368.2 L318.2 397.8 M5.0 170.4 L27.0 170.4 M27.3 170.4 L57.0 170.4 M57.0 170.4 L60.3 170.4 M60.3 170.4 L86.1 170.4 M86.1 170.4 L101.5 170.4 M101.5 170.4 L126.0 170.4 M126.0 170.4 L133.1 170.4 M133.1 170.4 L146.7 170.4 M146.7 170.4 L177.9 170.4 M177.9 170.4 L182.8 170.4 M182.8 170.4 L209.1 170.4 M209.4 170.4 L231.1 170.4 M231.1 170.4 L245.0 170.4 M245.0 170.4 L272.4 170.4 M272.4 170.4 L275.4 170.4 M275.4 170.4 L291.5 170.4 M291.5 170.4 L318.2 170.4 M126.0 5.0 L126.0 22.1 M126.0 22.1 L126.0 34.1 M126.0 34.1 L126.0 59.4 M126.0 59.4 L126.0 79.1 M126.0 79.1 L126.0 82.4 M126.0 82.4 L126.0 122.1 M126.0 122.1 L126.0 126.4 M126.0 126.4 L126.0 170.4 M5.0 82.4 L19.2 82.4 M20.7 82.4 L47.6 82.4 M47.6 82.4 L60.3 82.4 M60.3 82.4 L68.9 82.4 M68.9 82.4 L93.7 82.4 M93.7 82.4 L97.0 82.4 M97.0 82.4 L126.0 82.4 M68.9 5.0 L68.9 22.1 M68.9 23.3 L68.9 46.1 M68.9 46.1 L68.9 59.4 M68.9 59.4 L68.9 82.4 M5.0 23.3 L20.7 23.3 M20.7 23.3 L36.1 23.3 M36.1 23.3 L39.9 23.3 M39.9 23.3 L68.9 23.3 M36.1 5.0 L36.1 23.3 M20.7 23.3 L20.7 46.1 M20.7 46.1 L20.7 50.5 M20.7 50.5 L20.7 82.4 M5.0 50.5 L20.7 50.5 M20.7 46.1 L39.9 46.1 M39.9 46.1 L47.6 46.1 M47.6 46.1 L68.9 46.1 M39.9 23.3 L39.9 46.1 M47.6 46.1 L47.6 82.4 M68.9 22.1 L96.9 22.1 M98.3 22.1 L126.0 22.1 M96.9 5.0 L96.9 22.1 M68.9 59.4 L93.7 59.4 M93.7 59.4 L98.3 59.4 M98.3 59.4 L126.0 59.4 M98.3 22.1 L98.3 59.4 M93.7 59.4 L93.7 82.4 M60.3 82.4 L60.3 122.1 M60.3 122.1 L60.3 125.7 M60.3 125.7 L60.3 170.4 M5.0 125.7 L19.2 125.7 M19.2 125.7 L27.3 125.7 M27.3 125.7 L60.3 125.7 M19.2 82.4 L19.2 125.7 M27.3 125.7 L27.3 144.5 M27.3 144.5 L27.3 170.4 M5.0 144.5 L27.3 144.5 M60.3 122.1 L86.1 122.1 M86.1 122.1 L97.0 122.1 M97.0 122.1 L126.0 122.1 M97.0 82.4 L97.0 122.1 M86.1 122.1 L86.1 170.4 M231.1 105.0 L231.1 107.0 M231.1 107.0 L231.1 110.6 M231.1 110.6 L231.1 133.2 M231.1 133.2 L231.1 145.1 M231.1 145.1 L231.1 170.4 M126.0 79.1 L149.2 79.1 M149.2 79.1 L177.9 79.1 M177.9 79.1 L185.8 79.1 M185.8 79.1 L198.3 79.1 M198.3 79.1 L226.5 79.1 M185.8 5.0 L185.8 10.7 M185.8 10.7 L185.8 13.6 M185.8 13.6 L185.8 34.1 M185.8 34.1 L185.8 36.0 M185.8 36.0 L185.8 79.1 M126.0 34.1 L149.2 34.1 M149.2 34.1 L152.6 34.1 M152.6 34.1 L185.8 34.1 M152.6 5.0 L152.6 10.7 M152.6 10.7 L152.6 34.1 M152.6 10.7 L185.8 10.7 M149.2 34.1 L149.2 79.1 M185.8 36.0 L211.2 36.0 M185.8 13.6 L203.2 13.6 M177.9 79.1 L177.9 111.6 M177.9 111.6 L177.9 126.4 M177.9 126.4 L177.9 133.2 M177.9 133.2 L177.9 170.4 M126.0 126.4 L146.7 126.4 M146.7 126.4 L177.9 126.4 M146.7 126.4 L146.7 170.4 M177.9 133.2 L198.3 133.2 M198.3 133.2 L209.4 133.2 M209.4 133.2 L231.1 133.2 M198.3 79.1 L198.3 107.0 M198.3 107.0 L198.3 111.6 M198.3 111.6 L198.3 133.2 M177.9 111.6 L198.3 111.6 M198.3 107.0 L231.1 107.0 M209.4 133.2 L209.4 170.4 M231.1 110.6 L264.5 110.6 M264.5 110.6 L272.4 110.6 M272.4 110.6 L318.2 110.6 M264.5 105.0 L264.5 110.6 M272.4 110.6 L272.4 139.5 M272.4 139.5 L272.4 145.1 M272.4 145.1 L272.4 170.4 M231.1 145.1 L272.4 145.1 M272.4 139.5 L291.5 139.5 M291.5 139.5 L318.2 139.5 M291.5 139.5 L291.5 170.4 M133.1 170.4 L133.1 191.9 M133.1 191.9 L133.1 217.0 M133.1 217.0 L133.1 219.5 M133.1 219.5 L133.1 258.9 M133.1 258.9 L133.1 263.0 M133.1 263.0 L133.1 292.2 M133.1 292.2 L133.1 298.4 M133.1 298.4 L133.1 325.3 M133.1 325.3 L133.1 332.5 M133.1 332.5 L133.1 357.1 M133.1 357.1 L133.1 368.0 M133.1 368.0 L133.1 397.8 M5.0 263.0 L13.8 263.0 M13.8 263.0 L26.4 263.0 M26.4 263.0 L36.4 263.0 M36.4 263.0 L57.0 263.0 M57.0 263.0 L72.3 263.0 M72.3 263.0 L78.0 263.0 M78.0 263.0 L100.8 263.0 M100.8 263.0 L106.2 263.0 M106.2 263.0 L133.1 263.0 M57.0 170.4 L57.0 196.8 M57.0 196.8 L57.0 219.5 M57.0 219.5 L57.0 227.6 M57.0 227.6 L57.0 263.0 M5.0 227.6 L26.4 227.6 M27.0 227.6 L57.0 227.6 M27.0 170.4 L27.0 196.8 M27.0 196.8 L27.0 203.8 M27.0 203.8 L27.0 227.6 M5.0 203.8 L27.0 203.8 M27.0 196.8 L57.0 196.8 M26.4 227.6 L26.4 263.0 M57.0 219.5 L78.0 219.5 M78.0 219.5 L100.8 219.5 M101.5 219.5 L133.1 219.5 M101.5 170.4 L101.5 191.9 M101.5 191.9 L101.5 219.5 M101.5 191.9 L133.1 191.9 M100.8 219.5 L100.8 240.5 M100.8 240.5 L100.8 263.0 M78.0 219.5 L78.0 240.5 M78.0 240.5 L78.0 263.0 M78.0 240.5 L100.8 240.5 M5.0 332.5 L12.4 332.5 M12.4 332.5 L36.4 332.5 M36.4 332.5 L38.7 332.5 M38.7 332.5 L72.2 332.5 M72.3 332.5 L96.1 332.5 M96.1 332.5 L106.2 332.5 M106.2 332.5 L133.1 332.5 M72.3 263.0 L72.3 293.8 M72.3 293.8 L72.3 299.4 M72.3 299.4 L72.3 332.5 M36.4 263.0 L36.4 293.8 M36.4 293.8 L36.4 302.1 M36.4 302.1 L36.4 332.5 M5.0 302.1 L13.8 302.1 M13.8 302.1 L36.4 302.1 M13.8 263.0 L13.8 302.1 M36.4 293.8 L72.3 293.8 M106.2 263.0 L106.2 298.4 M106.2 299.4 L106.2 332.5 M72.3 299.4 L106.2 299.4 M106.2 298.4 L133.1 298.4 M72.2 332.5 L72.2 360.5 M72.2 360.5 L72.2 368.0 M72.2 368.0 L72.2 397.8 M38.7 332.5 L38.7 360.5 M38.7 361.4 L38.7 397.8 M5.0 361.4 L8.2 361.4 M8.2 361.4 L12.4 361.4 M12.4 361.4 L38.7 361.4 M12.4 332.5 L12.4 361.4 M8.2 361.4 L8.2 397.8 M38.7 360.5 L72.2 360.5 M72.2 368.0 L96.1 368.0 M96.1 368.0 L109.7 368.0 M109.7 368.0 L133.1 368.0 M96.1 332.5 L96.1 368.0 M109.7 368.0 L109.7 397.8 M133.1 292.2 L159.4 292.2 M159.4 292.2 L172.3 292.2 M172.3 292.2 L182.8 292.2 M182.8 292.2 L199.2 292.2 M199.2 292.2 L218.9 292.2 M218.9 292.2 L229.2 292.2 M229.2 292.2 L245.0 292.2 M245.0 292.2 L250.1 292.2 M250.1 292.2 L282.6 292.2 M284.0 292.2 L318.2 292.2 M245.0 170.4 L245.0 205.2 M245.0 205.2 L245.0 208.4 M245.0 208.4 L245.0 227.8 M245.0 227.8 L245.0 240.8 M245.0 240.8 L245.0 257.0 M245.0 257.0 L245.0 292.2 M182.8 170.4 L182.8 197.6 M182.8 197.6 L182.8 217.0 M182.8 217.0 L182.8 240.8 M182.8 240.8 L182.8 258.9 M182.8 258.9 L182.8 270.7 M182.8 270.7 L182.8 292.2 M133.1 217.0 L159.8 217.0 M159.8 217.0 L182.8 217.0 M133.1 258.9 L159.4 258.9 M159.8 258.9 L182.8 258.9 M159.8 217.0 L159.8 258.9 M159.4 258.9 L159.4 292.2 M182.8 240.8 L209.1 240.8 M209.1 240.8 L218.9 240.8 M218.9 240.8 L245.0 240.8 M209.1 170.4 L209.1 197.6 M209.1 197.6 L209.1 208.4 M209.1 208.4 L209.1 240.8 M182.8 197.6 L209.1 197.6 M209.1 208.4 L245.0 208.4 M218.9 240.8 L218.9 270.7 M218.9 270.7 L218.9 292.2 M182.8 270.7 L218.9 270.7 M245.0 227.8 L275.4 227.8 M275.4 227.8 L282.6 227.8 M282.6 227.8 L318.2 227.8 M275.4 170.4 L275.4 204.5 M275.4 205.2 L275.4 227.8 M245.0 205.2 L275.4 205.2 M275.4 204.5 L318.2 204.5 M282.6 227.8 L282.6 255.2 M282.6 255.2 L282.6 257.0 M282.6 257.0 L282.6 292.2 M245.0 257.0 L282.6 257.0 M282.6 255.2 L318.2 255.2 M229.2 292.2 L229.2 311.1 M229.2 311.1 L229.2 323.0 M229.2 323.0 L229.2 337.6 M229.2 337.6 L229.2 348.0 M229.2 348.0 L229.2 364.3 M229.2 364.3 L229.2 377.8 M229.2 377.8 L229.2 397.8 M172.3 292.2 L172.3 323.0 M172.3 323.0 L172.3 325.3 M172.3 325.3 L172.3 348.0 M172.3 348.0 L172.3 357.1 M172.3 357.1 L172.3 377.0 M172.3 377.0 L172.3 397.8 M133.1 357.1 L172.3 357.1 M133.1 325.3 L172.3 325.3 M172.3 348.0 L199.9 348.0 M201.3 348.0 L229.2 348.0 M172.3 323.0 L199.2 323.0 M199.2 323.0 L201.3 323.0 M201.3 323.0 L229.2 323.0 M199.2 292.2 L199.2 323.0 M201.3 323.0 L201.3 348.0 M199.9 348.0 L199.9 377.0 M199.9 377.8 L199.9 397.8 M172.3 377.0 L199.9 377.0 M199.9 377.8 L229.2 377.8 M229.2 337.6 L250.1 337.6 M250.1 337.6 L265.4 337.6 M265.4 337.6 L284.0 337.6 M284.0 337.6 L294.9 337.6 M294.9 337.6 L318.2 337.6 M284.0 292.2 L284.0 337.6 M250.1 292.2 L250.1 311.1 M250.1 311.1 L250.1 337.6 M229.2 311.1 L250.1 311.1 M265.4 337.6 L265.4 364.3 M265.4 364.3 L265.4 373.4 M265.4 373.4 L265.4 397.8 M229.2 364.3 L265.4 364.3 M294.9 337.6 L294.9 368.2 M294.9 368.2 L294.9 373.4 M294.9 373.4 L294.9 397.8 M265.4 373.4 L294.9 373.4 M294.9 368.2 L318.2 368.2 M318.2 175.9 L330.0 175.9 M318.2 128.4 L330.0 128.4 M318.2 155.1 L330.0 155.1 M469.9 239.1 L469.9 264.1 M469.9 264.1 L469.9 282.2 M469.9 282.2 L469.9 304.0 M469.9 304.0 L469.9 313.4 M469.9 313.4 L469.9 353.8 M469.9 354.0 L469.9 397.8 M318.2 282.2 L341.4 282.2 M341.4 282.2 L364.3 282.2 M364.3 282.2 L375.0 282.2 M375.0 282.2 L405.6 282.2 M405.6 282.2 L410.3 282.2 M410.3 282.2 L435.0 282.2 M435.0 282.2 L444.6 282.2 M444.6 282.2 L469.9 282.2 M410.3 238.8 L410.3 249.0 M410.3 249.0 L410.3 256.4 M410.3 256.4 L410.3 282.2 M318.2 220.5 L330.0 220.5 M375.0 238.7 L375.0 249.0 M375.0 250.4 L375.0 282.2 M341.4 238.5 L341.4 247.6 M341.4 247.6 L341.4 250.4 M341.4 250.4 L341.4 282.2 M318.2 247.6 L341.4 247.6 M341.4 250.4 L375.0 250.4 M375.0 249.0 L410.3 249.0 M435.0 239.0 L435.0 256.4 M435.0 256.4 L435.0 282.2 M410.3 256.4 L435.0 256.4 M405.6 282.2 L405.6 311.8 M405.6 311.8 L405.6 313.4 M405.6 313.4 L405.6 347.5 M405.6 347.5 L405.6 353.8 M405.6 353.8 L405.6 371.9 M405.6 371.9 L405.6 397.8 M318.2 347.5 L364.3 347.5 M364.3 347.5 L372.3 347.5 M372.3 347.5 L405.6 347.5 M364.3 282.2 L364.3 311.8 M364.3 311.8 L364.3 313.9 M364.3 313.9 L364.3 347.5 M318.2 313.9 L364.3 313.9 M364.3 311.8 L405.6 311.8 M372.3 347.5 L372.3 371.9 M372.3 371.9 L372.3 397.8 M372.3 371.9 L405.6 371.9 M405.6 353.8 L432.8 353.8 M432.8 353.8 L435.5 353.8 M435.5 353.8 L469.9 353.8 M405.6 313.4 L435.5 313.4 M435.5 313.4 L444.6 313.4 M444.6 313.4 L469.9 313.4 M444.6 282.2 L444.6 313.4 M435.5 313.4 L435.5 353.8 M432.8 353.8 L432.8 397.8 M469.9 304.0 L504.0 304.0 M469.9 264.1 L490.2 264.1 M490.2 264.1 L496.8 264.1 M490.2 239.2 L490.2 264.1 M518.6 394.3 L518.6 397.8 M469.9 354.0 L512.4 354.0 M322.1 397.8 L322.1 436.2 M322.1 436.2 L322.1 440.0 M322.1 440.0 L322.1 470.6 M322.1 471.6 L322.1 512.5 M322.1 512.5 L322.1 515.6 M322.1 515.6 L322.1 537.5 M322.1 537.5 L322.1 543.2 M322.1 543.2 L322.1 578.4 M322.1 578.4 L322.1 588.8 M322.1 588.8 L322.1 621.0 M322.1 621.5 L322.1 643.7 M5.0 676.9 L20.9 676.9 M20.9 676.9 L32.7 676.9 M32.7 676.9 L68.8 676.9 M68.8 676.9 L71.1 676.9 M71.1 676.9 L104.1 676.9 M104.1 676.9 L106.1 676.9 M106.1 676.9 L134.5 676.9 M134.5 676.9 L153.5 676.9 M153.5 676.9 L169.9 676.9 M169.9 676.9 L187.4 676.9 M134.5 397.8 L134.5 422.0 M134.5 422.0 L134.5 423.7 M134.5 423.7 L134.5 451.3 M134.5 451.3 L134.5 458.1 M134.5 458.1 L134.5 495.9 M134.5 495.9 L134.5 499.6 M134.5 499.6 L134.5 528.1 M134.5 528.1 L134.5 537.5 M134.5 537.5 L134.5 554.9 M134.5 554.9 L134.5 576.8 M134.5 576.8 L134.5 592.6 M134.5 592.6 L134.5 613.7 M134.5 613.8 L134.5 639.2 M134.5 639.2 L134.5 652.8 M134.5 652.8 L134.5 676.9 M5.0 528.1 L18.1 528.1 M18.1 528.1 L35.0 528.1 M36.1 528.1 L65.3 528.1 M65.3 528.1 L75.7 528.1 M75.7 528.1 L94.2 528.1 M94.2 528.1 L107.2 528.1 M107.2 528.1 L134.5 528.1 M5.0 458.1 L18.1 458.1 M18.1 458.1 L26.9 458.1 M26.9 458.1 L42.6 458.1 M42.6 458.1 L65.3 458.1 M65.3 458.1 L71.2 458.1 M71.2 458.1 L95.3 458.1 M96.1 458.1 L134.5 458.1 M71.2 397.8 L71.2 425.0 M71.2 425.0 L71.2 435.0 M71.2 435.0 L71.2 458.1 M26.9 397.8 L26.9 430.0 M26.9 430.0 L26.9 435.0 M26.9 435.0 L26.9 458.1 M5.0 430.0 L26.9 430.0 M26.9 435.0 L53.1 435.0 M53.1 435.0 L71.2 435.0 M53.1 397.8 L53.1 435.0 M96.1 397.8 L96.1 422.0 M96.1 422.0 L96.1 425.0 M96.1 425.0 L96.1 458.1 M71.2 425.0 L96.1 425.0 M96.1 422.0 L134.5 422.0 M65.3 458.1 L65.3 499.6 M65.3 499.8 L65.3 528.1 M18.1 458.1 L18.1 492.0 M18.1 492.0 L18.1 499.8 M18.1 499.8 L18.1 528.1 M5.0 492.0 L18.1 492.0 M18.1 499.8 L36.1 499.8 M36.1 499.8 L42.6 499.8 M42.6 499.8 L65.3 499.8 M42.6 458.1 L42.6 499.8 M36.1 499.8 L36.1 528.1 M65.3 499.6 L94.2 499.6 M95.3 499.6 L134.5 499.6 M95.3 458.1 L95.3 499.6 M94.2 499.6 L94.2 528.1 M5.0 592.6 L10.4 592.6 M10.4 592.6 L35.0 592.6 M35.0 592.6 L37.2 592.6 M37.2 592.6 L71.1 592.6 M71.1 592.6 L75.7 592.6 M75.7 592.6 L105.8 592.6 M107.2 592.6 L134.5 592.6 M75.7 528.1 L75.7 557.6 M75.7 557.6 L75.7 561.6 M75.7 561.6 L75.7 592.6 M35.0 528.1 L35.0 561.6 M35.0 561.6 L35.0 563.3 M35.0 563.3 L35.0 592.6 M5.0 563.3 L35.0 563.3 M35.0 561.6 L75.7 561.6 M107.2 528.1 L107.2 554.9 M107.2 554.9 L107.2 557.6 M107.2 557.6 L107.2 592.6 M75.7 557.6 L107.2 557.6 M107.2 554.9 L134.5 554.9 M71.1 592.6 L71.1 639.2 M71.1 639.7 L71.1 676.9 M5.0 639.7 L10.4 639.7 M10.4 639.7 L32.7 639.7 M32.7 639.7 L37.2 639.7 M37.2 639.7 L71.1 639.7 M37.2 592.6 L37.2 618.6 M37.2 618.6 L37.2 639.7 M10.4 592.6 L10.4 618.6 M10.4 618.6 L10.4 639.7 M10.4 618.6 L37.2 618.6 M32.7 639.7 L32.7 676.9 M71.1 639.2 L104.1 639.2 M104.1 639.2 L105.8 639.2 M105.8 639.2 L134.5 639.2 M105.8 592.6 L105.8 613.8 M105.8 613.8 L105.8 639.2 M105.8 613.8 L134.5 613.8 M104.1 639.2 L104.1 676.9 M134.5 537.5 L155.2 537.5 M155.2 537.5 L177.9 537.5 M177.9 537.5 L184.2 537.5 M184.2 537.5 L207.1 537.5 M207.1 537.5 L216.9 537.5 M216.9 537.5 L233.6 537.5 M233.6 537.5 L248.4 537.5 M248.4 537.5 L251.4 537.5 M251.4 537.5 L278.6 537.5 M278.6 537.5 L285.6 537.5 M285.6 537.5 L322.1 537.5 M207.1 397.8 L207.1 434.3 M207.1 434.3 L207.1 451.3 M207.1 451.3 L207.1 471.6 M207.1 471.6 L207.1 495.9 M207.1 495.9 L207.1 506.7 M207.1 506.7 L207.1 537.5 M134.5 451.3 L163.4 451.3 M163.4 451.3 L171.2 451.3 M171.2 451.3 L207.1 451.3 M163.4 397.8 L163.4 423.7 M163.4 423.7 L163.4 451.3 M134.5 423.7 L163.4 423.7 M134.5 495.9 L171.2 495.9 M171.2 495.9 L177.9 495.9 M177.9 495.9 L207.1 495.9 M171.2 451.3 L171.2 495.9 M177.9 495.9 L177.9 537.5 M207.1 471.6 L228.0 471.6 M228.0 471.6 L235.8 471.6 M235.8 471.6 L251.4 471.6 M251.4 471.6 L271.8 471.6 M271.8 471.6 L285.6 471.6 M285.6 471.6 L291.0 471.6 M291.0 471.6 L322.1 471.6 M271.8 397.8 L271.8 427.9 M271.8 427.9 L271.8 440.0 M271.8 440.0 L271.8 471.6 M235.8 397.8 L235.8 427.9 M235.8 427.9 L235.8 434.3 M235.8 434.3 L235.8 471.6 M207.1 434.3 L235.8 434.3 M235.8 427.9 L271.8 427.9 M271.8 440.0 L291.0 440.0 M291.0 440.0 L322.1 440.0 M291.0 440.0 L291.0 471.6 M251.4 471.6 L251.4 502.9 M251.4 502.9 L251.4 506.7 M251.4 506.7 L251.4 537.5 M207.1 506.7 L228.0 506.7 M228.0 506.7 L233.6 506.7 M233.6 506.7 L251.4 506.7 M228.0 471.6 L228.0 506.7 M233.6 506.7 L233.6 537.5 M285.6 471.6 L285.6 502.9 M285.6 502.9 L285.6 512.5 M285.6 512.5 L285.6 537.5 M251.4 502.9 L285.6 502.9 M285.6 512.5 L322.1 512.5 M248.4 537.5 L248.4 578.1 M248.4 578.1 L248.4 589.0 M248.4 589.0 L248.4 613.7 M248.4 613.7 L248.4 621.0 M248.4 621.0 L248.4 645.8 M134.5 613.7 L158.8 613.7 M158.8 613.7 L166.8 613.7 M166.8 613.7 L184.2 613.7 M184.2 613.7 L198.5 613.7 M198.5 613.7 L209.5 613.7 M209.5 613.7 L248.4 613.7 M184.2 537.5 L184.2 576.8 M184.2 578.1 L184.2 613.7 M134.5 576.8 L155.2 576.8 M155.2 576.8 L158.8 576.8 M158.8 576.8 L184.2 576.8 M155.2 537.5 L155.2 576.8 M158.8 576.8 L158.8 613.7 M184.2 578.1 L209.5 578.1 M209.5 578.1 L216.9 578.1 M216.9 578.1 L248.4 578.1 M216.9 537.5 L216.9 578.1 M209.5 578.1 L209.5 613.7 M198.5 613.7 L198.5 652.7 M198.5 652.8 L198.5 668.8 M134.5 652.8 L166.8 652.8 M166.8 652.8 L169.9 652.8 M169.9 652.8 L198.5 652.8 M166.8 613.7 L166.8 652.8 M169.9 652.8 L169.9 676.9 M198.5 652.7 L212.8 652.7 M217.7 652.7 L221.3 652.7 M221.3 652.7 L228.0 652.7 M221.3 652.7 L221.3 655.4 M248.4 621.0 L278.6 621.0 M278.6 621.0 L282.4 621.0 M282.4 621.0 L322.1 621.0 M278.6 537.5 L278.6 588.8 M278.6 589.0 L278.6 621.0 M248.4 589.0 L278.6 589.0 M278.6 588.8 L322.1 588.8 M282.4 621.0 L282.4 643.7 M282.4 643.7 L282.4 648.9 M282.4 648.9 L282.4 653.1 M267.3 648.9 L282.4 648.9 M282.4 643.7 L307.5 643.7 M153.5 676.9 L153.5 711.9 M153.5 724.0 L153.5 747.2 M153.5 747.2 L153.5 758.6 M153.5 758.6 L153.5 773.5 M153.5 773.5 L153.5 790.0 M98.6 758.6 L106.1 758.6 M106.1 758.6 L111.1 758.6 M111.1 758.6 L114.1 758.6 M148.3 758.6 L153.5 758.6 M68.8 676.9 L68.8 713.1 M68.8 713.1 L68.8 722.2 M68.8 722.2 L68.8 728.6 M20.9 676.9 L20.9 699.1 M45.4 713.1 L68.8 713.1 M106.1 676.9 L106.1 722.2 M106.1 722.2 L106.1 724.0 M106.1 724.0 L106.1 758.6 M68.8 722.2 L106.1 722.2 M106.1 724.0 L153.5 724.0 M111.1 758.6 L111.1 770.7 M153.5 773.5 L185.9 773.5 M185.9 773.5 L193.4 773.5 M193.4 773.5 L221.8 773.5 M221.8 773.5 L223.4 773.5 M223.4 773.5 L236.1 773.5 M193.4 694.5 L193.4 704.6 M193.4 726.5 L193.4 743.9 M193.4 761.7 L193.4 773.5 M155.0 714.0 L188.8 714.0 M153.5 747.2 L157.9 747.2 M223.4 744.1 L223.4 749.1 M223.4 749.1 L223.4 753.3 M223.4 761.7 L223.4 773.5 M214.2 749.1 L223.4 749.1 M221.8 773.5 L221.8 790.0 M185.9 773.5 L185.9 790.0 M322.1 578.4 L350.4 578.4 M350.4 578.4 L356.3 578.4 M356.3 578.4 L370.9 578.4 M370.9 578.4 L380.3 578.4 M380.3 578.4 L398.9 578.4 M398.9 578.4 L413.1 578.4 M413.1 578.4 L428.4 578.4 M428.4 578.4 L434.2 578.4 M434.2 578.4 L451.4 578.4 M451.4 578.4 L476.5 578.4 M476.5 578.4 L478.3 578.4 M478.3 578.4 L517.0 578.4 M517.4 578.4 L531.8 578.4 M517.0 397.8 L517.0 433.6 M517.0 433.6 L517.0 435.4 M517.0 435.4 L517.0 461.9 M517.0 461.9 L517.0 470.6 M517.0 470.6 L517.0 506.8 M517.0 506.8 L517.0 515.4 M517.0 515.4 L517.0 545.7 M517.0 545.8 L517.0 578.4 M322.1 470.6 L364.3 470.6 M364.3 470.6 L370.8 470.6 M370.8 470.6 L398.7 470.6 M398.7 470.6 L406.4 470.6 M406.4 470.6 L423.9 470.6 M423.9 470.6 L434.2 470.6 M434.2 470.6 L473.8 470.6 M473.8 470.6 L475.6 470.6 M475.6 470.6 L517.0 470.6 M423.9 397.8 L423.9 427.9 M423.9 427.9 L423.9 432.1 M423.9 432.1 L423.9 470.6 M364.3 397.8 L364.3 432.1 M364.3 432.1 L364.3 436.2 M364.3 436.2 L364.3 470.6 M322.1 436.2 L364.3 436.2 M364.3 432.1 L387.1 432.1 M387.1 432.1 L398.7 432.1 M398.7 432.1 L423.9 432.1 M387.1 397.8 L387.1 432.1 M398.7 432.1 L398.7 470.6 M473.8 397.8 L473.8 427.9 M473.8 427.9 L473.8 433.6 M473.8 433.6 L473.8 470.6 M423.9 427.9 L473.8 427.9 M473.8 433.6 L517.0 433.6 M434.2 470.6 L434.2 515.4 M434.2 515.6 L434.2 545.1 M434.2 545.1 L434.2 549.5 M434.2 549.5 L434.2 578.4 M322.1 515.6 L356.3 515.6 M356.3 515.6 L370.8 515.6 M370.8 515.6 L380.3 515.6 M380.3 515.6 L405.1 515.6 M406.4 515.6 L434.2 515.6 M370.8 470.6 L370.8 515.6 M406.4 470.6 L406.4 515.6 M380.3 515.6 L380.3 545.1 M380.3 546.2 L380.3 578.4 M356.3 515.6 L356.3 543.2 M356.3 543.2 L356.3 546.2 M356.3 546.2 L356.3 578.4 M322.1 543.2 L356.3 543.2 M356.3 546.2 L380.3 546.2 M380.3 545.1 L405.1 545.1 M405.1 545.1 L413.1 545.1 M413.1 545.1 L434.2 545.1 M405.1 515.6 L405.1 545.1 M413.1 545.1 L413.1 578.4 M434.2 515.4 L475.6 515.4 M475.6 515.4 L478.3 515.4 M478.3 515.4 L517.0 515.4 M475.6 470.6 L475.6 515.4 M478.3 515.4 L478.3 545.7 M478.3 545.7 L478.3 549.5 M478.3 549.5 L478.3 578.4 M434.2 549.5 L478.3 549.5 M478.3 545.7 L517.0 545.7 M517.0 506.8 L532.3 506.8 M517.0 461.9 L537.0 461.9 M517.0 435.4 L529.0 435.4 M517.0 545.8 L532.1 545.8 M517.4 578.4 L517.4 617.9 M517.4 617.9 L517.4 623.9 M517.4 623.9 L517.4 646.6 M517.4 646.6 L517.4 666.3 M517.4 666.3 L517.4 679.1 M517.4 679.1 L517.4 711.0 M428.4 578.4 L428.4 614.7 M428.4 614.7 L428.4 621.5 M428.4 621.5 L428.4 639.2 M335.5 657.4 L338.2 657.4 M370.9 578.4 L370.9 614.7 M370.9 614.7 L370.9 621.5 M370.9 621.5 L370.9 651.2 M322.1 621.5 L347.1 621.5 M347.1 621.5 L350.4 621.5 M350.4 621.5 L370.9 621.5 M350.4 578.4 L350.4 621.5 M347.1 621.5 L347.1 652.3 M370.9 614.7 L395.0 614.7 M395.0 614.7 L398.9 614.7 M398.9 614.7 L428.4 614.7 M398.9 578.4 L398.9 614.7 M395.0 614.7 L395.0 641.8 M395.0 643.7 L395.0 648.6 M476.5 666.3 L478.8 666.3 M488.6 666.3 L517.4 666.3 M476.5 578.4 L476.5 621.5 M476.5 621.5 L476.5 623.9 M476.5 623.9 L476.5 658.1 M476.5 662.1 L476.5 666.3 M428.4 621.5 L451.4 621.5 M451.4 621.5 L476.5 621.5 M451.4 578.4 L451.4 621.5 M476.5 623.9 L517.4 623.9 M603.2 623.0 L603.2 645.5 M603.2 646.6 L603.2 665.5 M603.2 665.5 L603.2 674.5 M517.4 646.6 L560.6 646.6 M560.8 646.6 L603.2 646.6 M560.6 620.7 L560.6 646.6 M517.4 617.9 L547.2 617.9 M517.4 679.1 L546.3 679.1 M546.3 679.1 L560.8 679.1 M560.8 679.1 L565.6 679.1 M565.6 679.1 L586.3 679.1 M560.8 646.6 L560.8 679.1 M565.6 679.1 L565.6 699.6 M546.3 679.1 L546.3 707.7 M603.2 645.5 L635.7 645.5 M635.7 645.5 L640.0 645.5 M635.7 624.8 L635.7 645.5 M603.2 665.5 L640.0 665.5" fill="none" stroke="#5b6061" stroke-width="1" shape-rendering="crispEdges"/>
<path d="M4.2 705.3 L8.4 707.4 L12.7 704.6 L18.3 703.2 L19.7 699.0 L25.3 699.7 L29.5 699.0 L30.2 702.5 L27.4 706.0 L28.1 708.1 L33.7 706.7 L40.8 706.7 L45.0 706.0 L47.8 705.3 L46.4 708.1 L45.0 715.1 L49.2 715.9 L51.3 722.2 L52.7 725.0 L59.1 724.3 L63.3 727.1 L67.5 729.9 L70.3 727.1 L72.4 728.5 L73.1 733.4 L75.9 735.5 L77.3 740.5 L82.2 743.3 L85.8 741.9 L90.0 742.6 L92.8 746.1 L97.0 744.0 L98.4 748.2 L104.0 749.6 L105.4 753.1 L102.6 755.9 L98.4 758.7 L98.4 764.4 L150.0 790.0 L230.0 790.0 L240.5 761.7 L240.5 755.3 L234.1 754.5 L229.3 750.5 L226.1 744.1 L221.3 744.1 L216.5 740.1 L210.1 736.9 L203.7 737.7 L198.9 732.9 L195.7 726.5 L190.9 726.5 L189.3 721.7 L184.5 720.1 L182.9 716.9 L189.3 715.3 L187.7 710.5 L192.5 707.3 L194.1 702.5 L198.9 702.5 L200.5 697.7 L205.3 696.1 L208.5 692.9 L205.3 688.1 L204.5 681.6 L205.3 676.8 L202.9 680.0 L198.9 684.9 L197.3 691.3 L192.5 695.3 L186.9 693.7 L184.5 689.7 L178.1 688.1 L176.5 683.2 L179.7 680.0 L186.1 678.4 L190.1 673.6 L194.1 668.8 L200.5 668.8 L205.3 667.2 L208.5 664.0 L213.3 660.8 L216.5 656.0 L212.5 653.6 L213.3 651.2 L217.3 652.0 L219.7 656.0 L226.1 653.6 L232.5 650.4 L240.5 646.4 L250.1 645.6 L258.1 646.4 L270.0 649.6 L270.7 655.3 L275.6 656.5 L283.0 652.8 L287.9 650.3 L292.9 647.9 L297.8 651.6 L305.2 654.0 L307.6 642.9 L310.1 628.2 L313.1 622.0 L320.0 624.5 L320.0 635.6 L322.4 645.4 L327.3 650.3 L333.5 656.5 L337.2 658.2 L344.6 652.8 L350.0 655.3 L354.6 656.5 L366.9 653.3 L379.3 650.8 L391.6 648.9 L403.9 647.9 L416.2 647.9 L428.5 648.9 L440.8 650.8 L453.2 655.3 L465.5 661.4 L477.8 667.6 L487.6 673.7 L497.5 682.4 L504.9 689.7 L508.6 697.1 L509.8 704.5 L512.3 711.9 L514.8 711.9 L524.6 713.1 L534.5 719.8 L544.3 715.6 L554.2 709.4 L564.0 703.3 L571.4 697.1 L578.8 691.0 L586.2 692.2 L587.4 684.8 L585.0 679.9 L591.1 676.2 L598.5 673.7 L605.9 675.0 L612.1 673.7 L618.2 679.9 L628.1 686.0 L635.5 691.0 L641.6 699.6 L647.8 708.2 L655.2 713.1 L657.6 724.2 L663.8 730.4 L670.0 736.5 L674.9 743.9 L681.0 751.3 L683.5 757.5 L681.9 763.6 L689.3 758.7 L699.1 759.9 L701.6 766.1 L705.3 773.5 L710.2 779.6 L713.9 784.6 L713.9 793.2 L714.0 810.0 L0.0 810.0 L0.0 704.5Z M149.2 710.5 L154.0 712.1 L156.4 716.9 L160.4 720.1 L165.2 724.9 L170.0 729.7 L174.9 731.3 L179.7 736.1 L184.5 742.5 L190.9 745.7 L194.1 743.3 L200.5 744.1 L206.9 745.7 L213.3 748.9 L219.7 750.5 L226.1 755.3 L234.1 761.7 L160.4 761.7 L157.2 750.5 L158.8 742.5 L155.6 736.1 L157.2 729.7 L154.0 723.3 L149.2 721.7Z M113.9 761.5 L114.6 750.3 L118.1 746.1 L120.9 743.3 L126.5 741.2 L132.2 740.5 L137.8 744.7 L143.4 746.1 L147.6 748.9 L146.9 753.1 L149.0 761.5Z M343.5 659.0 L344.8 652.8 L350.9 651.6 L354.6 645.4 L360.8 642.9 L362.0 647.9 L357.1 652.8 L355.9 657.7Z M366.9 652.8 L373.1 650.3 L375.6 642.9 L374.3 631.9 L378.0 630.6 L380.5 638.0 L385.4 636.8 L387.9 629.4 L390.3 638.0 L396.5 642.9 L391.6 645.4 L385.4 644.2 L379.3 650.3 L371.9 654.0Z M417.4 644.2 L422.4 642.9 L427.3 638.0 L431.0 641.7 L438.4 642.9 L445.8 639.3 L451.9 640.5 L454.4 645.4 L450.7 649.1 L440.8 646.6 L431.0 649.1 L422.4 647.9Z M474.1 656.5 L477.8 659.0 L482.7 655.3 L490.1 657.7 L493.8 651.6 L498.7 652.8 L495.0 659.0 L490.1 663.9 L486.4 670.0 L492.6 677.4 L500.0 678.7 L507.3 677.4 L506.1 681.1 L500.0 682.4 L490.1 677.4 L482.7 671.3 L477.8 665.1Z M506.2 691.0 L511.1 694.7 L514.8 704.5 L513.5 710.7 L509.9 710.7 L507.4 699.6Z M514.8 711.9 L522.2 709.4 L532.0 710.7 L536.9 707.0 L543.1 703.3 L545.6 708.2 L549.3 705.8 L559.1 702.1 L569.0 698.4 L571.4 697.1 L564.0 703.3 L554.2 709.4 L544.3 715.6 L534.5 719.8 L524.6 713.1Z M578.8 683.6 L582.5 684.8 L585.0 679.9 L587.4 684.8 L586.2 692.2 L581.3 691.0 L579.3 687.3Z M804.5 591.2 L810.0 591.2 L810.0 665.1 L805.0 661.4 L803.1 642.9 L804.5 630.6 L802.6 618.3Z M803.3 572.3 L806.8 569.9 L806.8 601.9 L800.6 601.9 L801.9 587.1Z M803.5 600.0 L808.0 600.0 L808.0 700.0 L804.0 690.0 L802.0 670.0 L803.5 655.0Z" fill="#014364" stroke="#000" stroke-width="1" stroke-linejoin="round"/>
<path d="M14.8 719.4 L19.7 718.7 L26.0 715.9 L30.2 718.0 L35.1 720.8 L39.4 721.5 L38.0 725.0 L34.4 727.1 L33.7 729.9 L30.2 729.9 L26.7 727.1 L21.1 724.3 L16.9 722.2Z M4.2 713.0 L9.8 713.7 L12.7 717.3 L14.8 719.4 L11.2 720.1 L8.4 718.7 L4.2 719.4Z M66.1 741.9 L70.3 739.8 L74.5 740.5 L76.6 744.7 L80.1 747.5 L81.5 750.3 L78.7 751.7 L73.1 749.6 L68.9 746.1Z" fill="#5c4f4a" stroke="#000" stroke-width="1" stroke-linejoin="round"/>
<path d="M189.0 722.4 L187.9 722.4 L187.7 723.1 M218.9 670.5 L220.6 670.0 L221.1 671.2 M214.6 682.4 L215.0 680.6 L214.2 678.4 M206.9 716.6 L207.2 715.9 L208.0 717.1 L210.0 719.0 M201.9 727.1 L200.1 727.7 L201.1 726.8 L202.2 728.6 L204.3 728.6 M224.4 677.1 L224.8 678.8 L226.4 678.8 L226.8 676.8 M193.9 718.9 L194.7 718.4 L196.4 719.6 L197.5 717.7 M190.3 721.9 L190.3 719.8 L188.2 720.7 L190.4 721.1 M218.0 701.2 L216.8 701.3 L218.9 701.6 L218.7 700.6 L218.9 702.6 M206.5 702.7 L208.6 702.6 L207.9 702.9 L209.9 702.5 M220.0 692.6 L220.2 693.1 L220.7 692.9 M194.5 722.0 L192.6 723.7 L192.4 724.8 L191.4 723.8 L192.7 722.3 M212.8 708.7 L212.6 707.9 L212.5 705.7 L212.0 705.4 M192.4 705.7 L191.2 705.3 L189.1 707.3 M203.2 698.9 L203.4 697.6 L205.5 699.0 L205.6 697.7 M212.5 691.2 L213.8 691.9 L213.5 693.0 L211.8 691.7 L209.8 689.8 M209.8 679.0 L209.6 680.5 L211.3 681.7 L211.9 679.7 L210.5 677.9 M209.9 697.9 L209.4 698.0 L207.2 698.5 L206.8 697.5 L205.2 699.1 M219.9 702.8 L219.2 701.5 L219.9 703.1 M225.4 687.7 L225.6 688.9 L225.7 687.0 L223.7 685.3 L222.2 685.5 M206.0 681.6 L205.2 680.7 L206.9 681.1 L208.9 682.9 M198.4 706.4 L196.5 706.6 L196.8 708.7 L196.2 707.7 M223.8 671.4 L225.3 669.3 L226.0 667.4 M193.9 715.3 L193.6 717.4 L195.0 717.5 M220.2 701.9 L220.1 700.1 L220.8 698.1 L218.6 700.2 L217.7 700.7 M207.6 711.4 L207.0 710.0 L205.7 708.7 L205.1 710.1 L203.2 711.2 M227.0 666.9 L226.2 668.4 L227.9 667.5 M198.1 701.5 L199.5 699.7 L198.2 701.1 L197.8 700.0 L199.5 701.1 M217.1 688.8 L218.8 687.2 L218.8 688.5 L216.9 690.6 M190.8 717.5 L192.2 716.7 L190.4 716.7 M224.8 684.2 L223.2 686.1 L221.1 685.3 M190.1 713.3 L188.9 714.5 L189.8 714.3 L189.4 713.1 L189.2 713.3 M227.4 665.3 L226.8 663.7 L225.1 662.6 L226.6 662.2 L226.1 662.7 M207.0 698.5 L208.9 700.5 L209.5 699.2 L208.7 700.1 L210.7 701.0 M198.2 706.1 L200.1 705.1 L200.8 703.1 L198.8 703.2 L200.5 701.6 M197.1 711.7 L196.5 712.6 L197.6 713.1 L199.2 714.8 L201.2 715.1 M198.7 699.5 L198.9 701.7 L199.1 699.9 M216.5 669.8 L218.6 670.3 L220.7 671.2 M193.9 722.6 L193.4 724.5 L193.1 725.0 L193.1 723.7 M202.5 700.8 L203.3 699.8 L202.7 700.1 M197.1 716.2 L196.8 717.8 L198.4 716.3 L197.8 716.0 L196.1 714.7 M223.0 678.1 L224.8 676.0 L225.1 673.8 M196.4 710.4 L198.5 708.8 L198.5 709.1 L197.7 709.2 L197.0 709.3 M201.1 718.0 L201.4 716.2 L203.3 715.7 L203.5 717.9 L204.1 718.9 M210.3 699.6 L211.2 701.8 L212.1 701.6 L212.9 700.2 L213.0 701.0 M198.2 706.8 L199.1 708.9 L197.2 711.1 L196.0 713.2 L195.1 711.1 M215.8 674.8 L217.1 676.3 L218.3 677.7 L218.7 677.1 M194.9 712.8 L195.1 711.2 L196.6 711.2 L196.5 709.1 L196.5 710.2 M214.4 691.7 L213.4 690.8 L213.5 689.7 L212.8 687.7 L213.6 689.6 M212.9 696.3 L214.0 694.8 L214.7 695.7 L216.1 694.7 L216.6 693.5 M208.5 675.9 L210.1 675.1 L208.9 677.2 L209.8 678.8 M211.3 685.8 L213.2 684.7 L212.2 682.8 L213.2 684.4 M209.3 704.1 L207.7 706.1 L207.5 704.6 L208.8 706.3 L208.5 705.5 M192.3 711.0 L190.5 710.5 L190.5 708.7 M198.5 721.7 L199.0 720.3 L197.8 719.1 M203.4 715.7 L202.2 714.8 L202.4 714.3 M221.6 683.8 L221.1 685.5 L222.3 684.0 M189.5 709.8 L189.8 708.7 L187.9 709.4 M207.4 700.2 L205.3 699.2 L203.6 697.3 M200.6 707.5 L201.3 706.3 L199.3 708.3 L199.7 707.6 M210.5 702.6 L212.6 704.4 L212.8 704.6 L213.8 704.8 L215.6 702.8 M195.1 706.1 L193.9 708.2 L192.4 710.1 M220.0 696.3 L218.2 695.5 L216.5 693.4 L217.2 695.2 M203.2 714.8 L201.4 716.1 L199.5 714.0 L199.0 715.1 M221.9 684.9 L223.5 685.0 L222.1 686.9 L222.2 686.4 M223.7 697.2 L224.4 696.9 L226.6 697.9 M220.8 684.1 L219.5 683.6 L218.7 683.2 M196.6 719.1 L195.7 718.2 L195.1 717.4 L196.2 717.4 L196.3 715.8 M224.6 686.5 L224.9 686.2 L223.9 686.0 L223.3 687.1 M200.2 725.3 L202.1 726.6 L200.5 726.8 M216.9 688.9 L216.4 688.1 L216.8 687.4 L216.8 685.2 L215.7 684.0 M215.5 678.1 L216.1 678.2 L214.2 676.3 M190.8 723.4 L191.2 725.2 L191.1 726.6 M199.6 726.9 L201.0 727.9 L202.4 730.1 M206.3 697.6 L206.9 697.6 L207.2 697.3 L206.5 699.5 M214.6 708.3 L212.9 707.4 L214.7 708.5 L216.8 708.7 L217.1 708.9 M206.9 701.4 L206.4 701.9 L205.6 701.1 L205.6 701.4 L205.8 703.6 M190.3 707.9 L191.4 708.2 L190.8 707.7 L192.7 709.5 M219.2 689.7 L220.8 690.9 L220.3 692.3 L220.2 690.7 L218.6 692.9 M220.0 689.4 L220.4 688.4 L222.7 687.3 M206.3 715.0 L205.3 714.2 L207.2 713.0 L208.6 715.0 L208.2 714.6 M189.7 714.3 L188.6 714.2 L190.6 713.8 M207.3 687.9 L209.4 686.1 L209.6 685.8 L210.4 684.1 L209.3 683.1 M204.8 718.7 L206.0 719.5 L204.2 719.0 M213.4 684.3 L213.4 683.8 L213.9 683.7 L212.3 684.2 L213.2 682.7 M194.6 715.2 L193.7 715.2 L195.4 715.4 L194.2 716.5 L193.4 716.5 M207.5 694.4 L206.3 693.3 L207.2 692.9 M208.5 705.2 L208.6 705.7 L207.0 705.4 M195.6 711.9 L195.6 711.9 L196.0 710.8 L194.6 711.9 M216.6 704.0 L216.8 702.0 L216.0 702.9 L216.6 704.3 M223.6 685.7 L223.5 684.0 L225.2 684.9 L224.0 685.5 M220.7 667.5 L221.5 666.2 L220.2 666.5 M223.2 693.1 L224.5 694.6 L225.9 693.3 M216.8 683.3 L219.0 682.6 L219.4 682.7 L217.3 681.9 L215.7 680.8 M216.0 671.1 L214.8 671.3 L214.2 669.4 L216.1 668.8 M226.6 671.8 L227.6 670.1 L229.6 669.1 L227.7 669.4 L228.7 669.3 M202.0 728.4 L203.8 728.9 L204.0 726.9 L204.0 725.5 M207.8 681.3 L209.8 680.2 L208.1 681.1 L209.2 679.2 M206.0 704.0 L205.2 704.8 L203.6 706.7 L202.0 708.4 L200.7 709.9 M221.6 687.1 L220.1 688.7 L219.5 688.4 L217.8 688.9 M195.2 710.0 L195.6 707.8 L197.7 709.6 L198.3 709.1 L198.6 710.8 M203.8 717.7 L204.6 716.7 L204.1 716.3 L203.9 714.5 L205.1 715.1 M220.8 704.5 L220.9 703.8 L219.8 706.0 L221.7 706.7 L223.0 708.1 M194.1 719.7 L192.3 721.7 L194.0 720.0 M202.1 714.1 L202.8 716.3 L204.1 714.4 L203.8 713.8 M196.3 720.2 L197.6 719.1 L198.1 717.5 L197.4 715.7 M206.3 701.4 L206.2 700.7 L207.2 702.8 L205.0 704.6 L204.5 706.1 M190.8 713.4 L189.7 715.5 L188.9 714.4 M199.7 708.9 L200.7 707.5 L200.5 707.7 L200.8 709.6 L202.3 708.1 M191.2 716.8 L191.2 718.2 L193.1 716.7 L193.2 714.9 L192.1 714.7 M219.1 679.8 L218.6 677.5 L219.9 679.7 L221.8 680.4 L221.0 679.3 M226.7 676.1 L224.6 674.9 L223.4 672.8 L223.4 671.4 L223.5 671.9 M220.1 667.1 L218.9 664.9 L220.9 664.1 L219.9 663.7 L220.4 665.9 M215.2 686.0 L215.8 688.2 L217.1 688.4 L218.0 689.3 L219.4 689.3 M195.6 728.0 L195.9 729.5 L197.1 730.0 L198.2 729.3 M191.8 719.2 L192.4 719.4 L193.3 718.3 L191.7 718.1 L192.7 716.2 M225.5 674.6 L223.5 675.7 L223.0 676.5 L223.4 674.8 L223.6 672.9 M195.9 709.6 L195.3 711.1 L194.0 712.1 L193.3 712.2 M186.9 721.0 L187.8 718.9 L189.2 719.4 M203.1 706.6 L204.6 705.8 L206.0 707.8 M220.3 690.5 L218.6 691.4 L217.5 689.2 L215.8 687.9 L217.0 687.3 M204.9 706.3 L202.8 704.8 L203.6 705.0 L202.4 704.6 M195.4 709.6 L194.3 707.8 L195.8 706.1 L196.1 705.9 M220.4 701.1 L222.3 699.3 L223.1 697.3 L222.7 697.0 M206.7 677.6 L207.4 678.0 L208.5 680.2 L207.8 678.1 M222.4 703.0 L224.6 704.3 L226.1 705.0 M200.9 726.4 L202.9 724.4 L204.9 726.1 L202.8 725.2 M210.1 702.3 L208.1 702.8 L209.4 702.2 L208.9 702.3 M198.1 727.3 L195.9 725.8 L195.1 724.5 L196.9 723.0 L195.1 722.1 M206.1 720.6 L207.7 721.1 L205.6 719.1 L206.2 720.6 M208.0 703.5 L206.1 704.5 L207.9 706.5 L207.5 704.8 L207.8 705.5 M206.2 718.3 L207.7 716.4 L206.9 718.3 M222.1 673.2 L223.5 674.5 L221.4 676.7 L221.1 675.2 M208.3 712.7 L209.0 714.4 L208.7 716.5 L207.3 714.8 L205.7 715.2 M217.8 669.9 L215.7 670.0 L214.4 669.0 M200.8 709.0 L201.2 707.6 L201.7 709.7 M209.4 706.3 L207.3 704.1 L205.5 704.7 L206.2 706.7 M202.6 712.8 L201.9 713.4 L200.5 713.5 L200.5 715.0 M210.6 709.5 L212.2 710.0 L213.3 711.8 L214.5 712.2 L213.0 711.2 M220.3 684.8 L220.7 683.7 L219.9 684.2 L217.9 684.0 M223.6 680.0 L222.3 679.9 L221.5 682.1 L219.9 683.7 M197.9 710.3 L195.9 711.5 L195.0 711.1 L194.3 709.0 L194.9 709.9 M217.1 708.2 L216.2 707.8 L216.3 707.6 L217.9 705.7 M210.6 706.6 L209.4 707.5 L208.8 708.1 L209.8 707.2 L210.8 706.5 M219.4 697.8 L217.7 698.4 L219.1 699.1 L218.8 700.7 L219.9 701.3 M210.5 708.3 L210.2 709.6 L208.2 710.0 L208.3 708.5 M223.2 679.1 L221.3 680.1 L222.8 678.2 L220.6 678.3 L219.9 676.2 M208.0 681.3 L206.6 680.9 L204.6 683.0 M208.5 698.9 L209.7 697.6 L208.3 699.4 M187.3 718.8 L185.7 720.3 L184.2 718.2 L183.2 717.5 L183.6 717.3 M216.9 672.0 L215.7 671.1 L214.6 670.7 L213.4 668.6 L212.3 667.2 M194.0 721.2 L195.9 721.7 L194.1 719.8 L195.5 721.5 M215.3 674.3 L216.0 672.8 L214.5 674.2 L213.4 673.5 M214.1 697.1 L216.3 698.1 L214.9 697.4 M218.5 707.2 L218.0 707.9 L216.6 707.3 L218.7 709.1 L219.7 710.4 M196.8 702.8 L196.1 700.8 L198.1 701.7 M223.5 673.7 L221.6 674.1 L221.6 675.8 M202.9 699.3 L203.0 698.6 L202.7 696.7 M192.2 716.6 L193.4 714.4 L193.4 713.0 M218.6 669.7 L219.4 671.4 L217.6 672.0 M216.7 703.1 L217.2 704.8 L217.5 704.8 L217.1 702.8 M197.2 721.5 L198.8 723.5 L198.4 721.3 L196.9 720.4 M210.8 683.2 L211.8 683.2 L210.8 682.1 L209.4 680.5 L207.6 679.8 M204.4 697.4 L206.3 698.7 L206.5 698.7 L204.4 698.9 M208.5 715.1 L208.9 714.6 L210.5 714.0 M212.3 701.7 L212.0 703.3 L210.7 701.7 M225.3 667.1 L225.6 669.2 L224.2 669.2 L222.0 668.0 M222.9 668.1 L221.4 666.8 L220.9 666.7 L220.1 665.0 L218.6 663.4 M207.1 680.2 L206.7 680.0 L207.0 678.5 L207.5 680.5 L207.9 681.8 M211.1 694.3 L210.8 695.8 L208.8 696.8 L207.0 696.3 L206.8 694.9 M203.4 722.8 L203.7 724.8 L204.1 724.7 M195.3 724.5 L195.6 725.8 L193.6 727.7 M193.4 722.6 L192.6 723.7 L192.1 724.8 L191.1 724.4 M201.2 723.7 L202.3 723.6 L200.7 722.0 L202.8 722.5 L201.6 723.9 M222.9 671.1 L222.6 670.9 L224.8 671.2 M200.6 713.4 L201.6 712.5 L202.0 711.7 L203.1 710.2 M205.2 694.7 L203.4 693.0 L202.6 695.3 L202.6 696.1 M225.5 687.5 L224.7 687.9 L224.6 687.9 L224.1 688.0 L222.8 686.9 M194.1 717.8 L195.2 717.0 L197.2 716.3 L196.6 716.8 L197.3 716.3 M201.0 712.1 L202.2 709.9 L202.9 712.0 L202.2 713.3 L202.8 715.1 M193.5 720.7 L193.0 721.6 L192.1 721.4 L193.5 719.5 M207.2 714.5 L208.4 712.9 L208.1 713.1 M212.0 712.3 L214.0 711.0 L212.4 713.1 L210.9 715.2 M198.1 718.7 L198.9 719.1 L196.8 720.4 L195.5 721.2 L196.0 719.2 M212.6 673.2 L212.9 671.6 L212.3 670.0 L214.0 669.3 M215.7 678.2 L216.7 677.3 L215.6 677.4 M222.4 686.9 L223.4 689.1 L223.5 689.8 L224.3 688.2 M217.1 692.4 L219.2 694.3 L217.8 692.7 L216.7 691.5 M200.8 718.1 L201.1 716.1 L202.5 717.5 L200.3 717.2 M218.7 692.6 L219.6 693.4 L221.4 694.6 M203.6 711.5 L203.0 709.5 L201.3 711.1 L201.9 709.4 L203.9 710.8 M204.9 715.7 L204.6 715.6 L205.1 713.8 L205.2 714.5 L207.2 715.2 M207.7 692.3 L207.2 693.8 L206.4 692.0 L205.1 692.5 L206.0 690.8 M199.1 724.8 L197.3 725.5 L195.5 725.6 M224.5 680.2 L224.4 678.2 L224.1 677.3 L224.7 678.1 M206.3 715.4 L206.1 715.7 L204.7 715.8 L205.4 716.9 M213.3 692.5 L213.6 692.1 L214.7 690.8 L212.5 693.0 L212.5 694.5 M221.5 685.3 L223.2 683.7 L223.2 682.1 L223.0 680.0 L222.8 680.3 M195.8 708.6 L197.9 709.4 L198.2 707.7 L199.0 708.2 L199.6 709.0 M210.8 700.5 L212.4 698.5 L210.9 699.0 L212.3 697.3 L212.5 698.4 M221.2 694.0 L219.6 694.4 L218.5 696.0 L217.4 697.9 L215.3 698.4 M202.8 719.8 L201.5 720.6 L203.4 722.7 M201.8 728.8 L203.6 731.0 L204.9 729.8 L206.9 729.2 L208.5 728.4 M197.1 717.5 L196.2 719.7 L194.9 718.0 L195.5 718.7 L196.8 718.2 M211.4 677.9 L209.6 676.7 L209.9 675.3 L209.3 675.9 M202.6 702.2 L204.1 700.0 L203.7 701.7 L203.4 699.7 M206.1 716.9 L207.3 715.3 L208.3 716.6 L210.3 718.4 M203.6 715.7 L202.0 713.8 L202.9 713.3 L202.8 714.3 M218.2 702.6 L218.2 704.1 L217.0 702.0 L218.4 701.6 M224.0 669.8 L221.9 671.0 L220.0 672.5 L220.4 671.8 L218.5 671.7 M199.1 700.3 L199.5 702.5 L200.1 703.4 L199.3 705.6 M220.8 686.3 L221.2 687.0 L220.1 687.7 L218.9 689.8 M222.2 669.8 L220.8 668.3 L221.1 670.2 L222.7 670.7 M197.3 726.6 L195.8 726.3 L195.3 724.6 M215.8 684.0 L215.5 682.1 L213.6 680.9 L213.7 681.9 L214.0 679.7 M207.5 677.3 L206.7 677.4 L205.7 676.5 M224.9 682.3 L222.8 680.1 L224.0 682.3 M194.1 723.9 L192.0 724.5 L190.4 725.0 M203.0 714.2 L201.7 714.1 L203.2 716.1 L201.0 714.5 L198.9 712.9 M224.6 669.9 L223.5 669.4 L223.7 668.7 L225.9 668.2 L225.4 668.4 M217.5 702.8 L219.3 701.5 L217.2 699.5 M201.0 724.7 L202.5 724.5 L202.5 725.8 L203.8 723.7 L204.1 723.9 M207.7 704.8 L206.3 705.7 L208.4 707.6 M220.2 703.0 L222.2 705.1 L222.9 706.8 L221.0 706.1 L220.8 706.1 M199.6 720.3 L198.5 722.3 L197.4 721.9 L196.9 723.2 L195.7 725.0 M222.4 676.5 L222.9 675.8 L220.8 677.5 L220.8 679.6 L220.6 677.9 M206.8 706.4 L205.1 704.9 L206.0 705.9 L207.0 705.8 M200.4 730.2 L198.7 729.1 L199.0 728.3 L199.0 726.9 M204.7 713.4 L202.5 715.1 L201.3 717.2 L200.6 718.8 M211.2 675.2 L209.9 677.2 L210.7 679.3 L210.4 680.8 M210.5 713.3 L210.0 712.9 L209.8 713.2 L207.6 713.1 M216.3 692.9 L214.7 693.1 L216.0 694.1 L216.5 693.1 M201.7 697.2 L203.7 697.0 L203.2 696.4 L202.0 696.6 M207.1 682.3 L205.2 683.2 L204.7 682.1 L205.9 682.5 L205.9 681.0 M216.2 696.3 L214.2 694.3 L214.1 695.4 M192.3 705.0 L191.6 704.2 L191.1 704.9 M216.0 702.7 L215.7 704.5 L216.8 704.9 L215.4 706.5 M200.0 707.5 L200.4 709.6 L198.8 710.6 L200.3 708.9 M193.5 706.5 L194.4 707.7 L193.5 709.3 L191.9 708.8 L191.9 709.7 M224.4 694.6 L223.4 695.0 L222.6 694.9 L221.9 695.4 L219.9 693.7 M226.1 670.3 L224.0 669.3 L225.0 668.9 M207.6 682.7 L206.5 682.2 L204.8 681.7 L203.6 682.7 L202.8 683.6 M212.0 684.0 L213.6 685.8 L214.5 685.6 L214.8 686.7 L214.0 688.5 M220.0 694.8 L220.8 693.0 L220.4 691.3 L220.7 693.0 L218.5 695.0 M208.3 692.2 L206.8 693.2 L205.2 695.2 L204.3 696.1 M201.6 708.5 L201.5 707.6 L202.9 708.0 L204.0 705.9 L205.7 706.1 M211.0 682.0 L212.0 683.3 L213.1 681.8 L213.7 680.8 M204.1 717.9 L202.9 716.2 L204.8 717.2 M219.3 690.9 L219.8 689.6 L220.0 689.6 L222.2 691.6 L221.5 692.0 M208.7 675.8 L210.3 677.8 L211.6 675.7 L209.5 676.1 L207.7 674.2 M222.6 667.3 L222.8 667.7 L223.4 668.9 L222.3 668.3 M196.8 709.9 L196.9 711.6 L198.8 711.0 M202.5 710.3 L200.8 709.2 L202.2 708.4 L202.8 708.7 M215.2 697.3 L213.5 698.0 L213.2 698.6 L211.4 696.6 L210.5 696.6 M221.0 680.7 L219.9 678.5 L219.9 678.5 L219.6 678.4 M206.4 721.4 L205.2 721.0 L203.6 721.8 M219.3 675.1 L218.7 676.0 L218.0 674.9 L219.1 672.8 M218.5 700.9 L216.3 702.9 L217.7 703.8 L216.6 705.6 M214.3 689.5 L212.5 687.3 L212.0 687.6 M214.1 692.3 L215.4 691.2 L215.0 691.7 L216.2 692.2 L218.1 694.1 M228.2 661.4 L229.2 662.1 L228.4 662.6 M232.6 664.5 L234.8 665.2 L236.2 666.8 M231.8 663.2 L231.8 665.0 L233.5 664.4 L235.4 666.2 M231.1 666.5 L231.4 665.3 L229.2 664.5 M228.8 664.1 L229.6 662.7 L231.3 664.0 L232.4 665.8 L233.6 667.1 M233.7 665.4 L234.4 664.3 L233.5 664.3 L233.5 665.6 M244.0 663.9 L245.9 663.8 L246.3 664.2 L248.1 664.1 M247.9 663.9 L247.8 664.5 L246.2 665.1 L247.8 665.2 L248.9 666.0 M242.6 665.1 L240.6 666.3 L242.0 665.3 L242.5 667.2 L242.0 668.5 M245.5 664.9 L245.3 666.9 L247.0 665.1 L245.4 663.8 L247.4 663.5 M160.1 740.6 L162.2 742.2 L161.6 743.7 L160.9 743.2 L159.8 742.1 M159.5 744.4 L161.1 744.4 L160.7 744.8 L160.4 743.3 M160.0 749.5 L158.1 749.4 L160.3 749.4 M172.1 744.2 L174.3 742.8 L173.9 741.5 M161.8 746.4 L162.4 745.0 L161.6 746.5 L162.5 745.5 M160.6 725.9 L161.8 725.5 L163.8 726.1 M149.6 712.6 L148.9 714.0 L151.2 714.3 M170.6 736.7 L169.5 739.0 L167.8 739.1 L169.0 738.7 L171.2 738.6 M157.7 730.2 L156.5 730.0 L157.1 729.6 M156.8 719.5 L155.7 718.3 L154.4 717.1 M163.4 753.8 L165.1 754.7 L163.0 754.2 L162.7 756.2 L163.0 758.2 M155.1 724.7 L156.4 725.4 L157.8 725.5 L158.5 726.3 M183.4 742.5 L185.0 743.4 L184.9 743.3 M163.4 729.2 L162.2 727.7 L162.6 726.6 M163.2 747.5 L164.9 747.7 L166.6 746.4 L167.3 745.6 M165.8 735.8 L164.0 736.7 L162.2 736.9 M158.3 747.7 L157.7 748.9 L157.8 746.7 M162.7 748.3 L162.2 749.5 L163.7 749.0 L161.9 750.9 M174.3 731.8 L176.0 730.5 L175.1 732.0 L174.8 733.3 L173.3 735.0 M155.4 717.7 L157.0 716.6 L159.2 714.4 L157.7 715.0 M153.5 715.8 L153.9 715.9 L154.0 715.5 L153.1 714.3 L151.7 715.9 M149.3 713.0 L149.5 714.9 L150.7 715.2 L152.7 715.2 M164.8 740.2 L163.1 741.4 L162.5 742.1 L160.9 740.2 M162.3 738.2 L163.1 739.9 L161.2 740.5 L163.0 739.8 M180.3 739.5 L182.4 741.0 L183.7 742.3 L185.7 740.8 L186.1 740.8 M173.0 746.3 L174.3 747.0 L175.9 747.8 L177.6 746.7 L177.5 745.4 M162.2 746.3 L162.7 748.5 L164.5 748.1 L164.1 749.5 L163.1 749.1 M149.7 719.3 L149.5 719.6 L151.0 719.2 L150.5 717.0 L150.5 716.9 M161.5 748.7 L162.6 748.7 L163.2 748.6 M163.2 738.4 L163.5 740.5 L162.4 740.6 L160.9 738.8 L158.8 738.0 M180.6 744.2 L179.0 743.8 L177.4 744.8 L175.5 744.2 L173.3 745.9 M156.8 724.8 L154.9 723.3 L156.5 722.2 L156.1 723.0 L157.7 722.3 M162.9 730.8 L161.9 731.6 L161.0 732.9 M152.2 716.1 L153.7 714.9 L153.9 714.7 L154.9 713.3 L156.4 715.6 M160.0 741.6 L160.4 739.5 L161.0 738.4 L162.6 739.1 M160.1 753.5 L161.5 754.9 L159.7 753.7 L158.9 751.9 L161.0 749.9 M160.6 733.4 L162.5 731.9 L160.5 732.0 L161.9 732.9 M161.1 739.4 L162.0 737.7 L164.1 739.1 M179.0 740.4 L181.0 742.2 L183.1 740.0 L184.0 738.7 L182.9 739.8 M179.5 740.9 L177.4 740.5 L179.5 741.6 L181.1 740.7 M173.6 748.4 L174.5 747.6 L173.2 747.5 L172.9 749.6 L172.2 751.4 M163.7 746.5 L162.6 746.6 L160.5 745.5 M161.2 732.4 L159.7 731.2 L161.3 729.5 M169.2 742.2 L167.3 743.8 L165.9 744.8 L163.8 746.0 L162.3 744.6 M182.7 743.4 L183.5 742.3 L185.4 743.1 M166.6 751.2 L166.1 751.6 L166.1 750.8 M164.4 730.0 L165.5 727.9 L164.0 726.7 M157.6 738.1 L159.6 738.8 L159.1 739.0 M153.2 721.3 L151.8 721.4 L149.6 719.7 L148.7 720.6 M160.6 736.5 L162.6 737.8 L163.9 736.3 M173.8 732.0 L175.1 733.0 L174.7 731.3 L173.8 731.6 L175.6 731.5 M170.4 739.3 L171.1 738.7 L169.9 739.1 L170.4 737.5 L170.9 736.3 M175.3 736.5 L173.8 735.8 L174.6 736.0 L176.7 737.9 M158.3 726.6 L156.2 725.0 L156.5 726.6 L156.5 728.1 L154.6 728.6 M156.1 718.1 L157.1 718.6 L155.1 720.0 L156.7 718.1 L158.7 719.4 M170.5 736.6 L171.1 735.7 L172.8 734.7 L173.4 735.9 M167.9 746.7 L169.6 745.7 L169.2 743.5 M167.9 751.5 L166.0 751.2 L164.1 750.9 L165.9 749.9 M167.5 730.9 L167.6 730.1 L166.1 728.8 M151.4 717.2 L153.2 719.3 L153.2 719.3 M169.8 738.4 L167.9 740.4 L166.4 741.6 L166.6 741.3 L165.7 740.6 M176.0 735.7 L175.8 737.9 L175.6 740.0 L177.8 740.4 L175.7 740.6 M169.9 738.0 L171.9 737.8 L171.2 737.0 L170.4 736.1 L169.6 734.8 M162.2 742.4 L160.4 741.2 L162.2 741.8 L160.8 741.5 M164.5 734.9 L165.8 733.1 L163.8 730.9 L166.0 730.6 M175.2 737.3 L174.5 736.6 L175.3 734.4 L174.7 735.5 M169.4 734.0 L169.1 735.1 L168.6 733.2 L168.1 731.9 L166.0 730.9 M175.2 746.9 L174.4 747.7 L176.1 747.2 L178.0 745.4 M174.3 731.4 L173.7 730.2 L175.3 728.7 L174.9 727.0 L175.1 727.1 M173.3 740.0 L172.1 740.1 L174.0 739.8 L174.2 740.5 M161.8 752.9 L160.8 751.3 L160.2 750.2 L161.2 750.5 L161.9 752.6 M176.5 748.5 L178.4 749.6 L177.7 749.6 L178.9 750.9 M151.2 713.5 L149.5 714.6 L148.3 714.5 L148.5 714.7 M155.0 719.9 L155.0 718.5 L157.1 718.5 M160.7 723.2 L161.1 724.2 L163.0 723.4 L163.6 721.7 M158.0 734.0 L157.4 736.0 L158.5 737.0 L156.7 735.4 M175.0 735.1 L176.9 733.4 L175.3 731.9 L175.1 733.5 M167.8 751.6 L169.8 751.3 L171.4 750.2 L171.7 749.1 M173.9 748.2 L175.3 746.7 L176.6 748.6 L178.6 749.5 L178.1 749.7 M172.2 739.9 L172.4 738.0 L173.5 739.4 M173.0 741.6 L172.0 743.0 L173.2 741.6 M177.8 738.4 L177.9 737.4 L176.2 736.8 L177.5 737.9 M170.4 745.2 L171.5 746.8 L171.5 745.7 L173.5 744.2 L174.5 746.1 M155.9 736.4 L155.1 736.8 L156.5 737.2 L156.2 738.3 L155.6 740.5 M170.2 741.9 L172.2 740.1 L171.7 740.3 L172.1 740.8 L170.6 740.8 M155.5 725.8 L154.4 726.0 L153.0 727.0 L152.8 726.5 L152.1 725.1 M172.0 745.9 L170.0 747.6 L168.6 749.1 L166.5 749.0 L165.5 750.3 M164.0 728.4 L163.7 727.9 L161.6 729.0 L160.0 728.6 M158.1 718.6 L160.0 718.4 L159.4 719.7 L157.6 720.9 L156.0 721.4 M167.3 747.6 L167.3 748.5 L167.6 750.3 M174.3 740.5 L176.5 738.3 L176.0 738.3 M150.2 717.0 L152.3 718.5 L151.3 718.3 L153.3 719.5 M158.1 723.0 L156.2 723.5 L155.8 722.5 L154.1 722.8 M176.7 735.5 L177.0 737.5 L177.8 737.4 L176.3 739.0 M180.1 743.1 L179.8 743.1 L180.5 744.8 M172.7 743.7 L171.6 743.6 L171.7 741.6 L173.0 741.5 M168.5 751.2 L167.3 751.6 L167.7 753.8 M165.0 741.8 L163.6 742.8 L162.3 742.3 L161.3 741.4 L159.7 742.9 M166.1 741.5 L164.6 740.4 L165.0 738.8 L164.6 738.2 L166.6 736.4 M167.2 733.0 L168.2 734.1 L166.3 734.1 M172.8 734.5 L172.8 732.8 L173.5 732.4 L175.0 730.8 L175.2 729.9 M171.5 749.8 L173.0 748.3 L171.5 749.3 L173.4 747.9 L173.0 748.1 M160.1 754.9 L160.6 754.1 L160.6 752.9 M160.3 731.1 L161.8 732.7 L159.7 732.7 L158.8 732.4 L159.8 733.5 M156.4 718.7 L156.6 719.5 L155.7 717.4 M182.2 740.1 L180.7 739.1 L182.5 737.0 M158.9 733.2 L160.6 733.2 L162.8 733.6 L164.8 734.3 L162.9 732.1 M184.2 742.5 L185.7 741.9 L186.6 742.5 M163.9 734.8 L165.5 735.9 L164.7 733.9 L163.4 734.6 L161.9 734.9 M168.2 751.6 L169.9 752.6 L168.8 751.5 M174.6 742.2 L172.7 742.2 L171.1 742.5 L169.9 741.3 L170.2 739.8 M158.6 746.8 L157.3 744.9 L159.0 745.8 L160.4 747.6 M162.8 732.4 L162.8 734.2 L161.9 733.5 L160.5 732.1 L160.4 733.1 M166.6 749.4 L168.6 749.2 L168.8 749.7 M165.7 747.7 L166.1 748.7 L165.3 749.9 L166.7 752.0 L164.8 751.7 M155.0 718.6 L156.3 717.6 L154.2 719.2 L152.6 720.8 M167.2 727.0 L167.5 726.0 L168.8 725.2 L170.4 726.9 L169.9 725.3 M157.6 723.0 L158.7 722.0 L157.3 723.0 L158.9 723.3 M165.3 735.1 L166.3 734.6 L168.4 733.7 M173.4 733.8 L173.2 734.9 L174.6 735.5 M177.1 742.5 L175.0 742.4 L174.3 744.0 M170.6 730.7 L170.0 730.9 L168.7 729.7 L166.8 729.1 M170.6 746.1 L168.8 746.8 L167.0 746.8 M159.4 730.2 L158.0 732.4 L158.8 733.0 L158.7 730.8 M158.8 739.5 L159.1 737.8 L160.3 739.5 L159.6 740.7 M160.6 734.0 L162.6 732.4 L161.2 730.6 L159.9 731.7 L158.9 733.2 M164.7 741.2 L162.7 740.4 L162.6 742.2 M169.3 731.0 L170.3 732.8 L171.7 735.0 L172.5 736.2 L172.5 737.0 M181.0 742.9 L181.0 744.1 L181.6 745.2 L181.2 743.7 M155.3 720.3 L154.6 722.4 L155.4 721.8 M167.8 744.4 L167.9 745.5 L169.6 746.7 L170.1 748.6 M162.6 725.1 L164.8 726.4 L166.4 726.5 M159.5 749.3 L157.5 748.4 L157.7 748.1 L159.6 747.8 L158.3 748.8 M166.2 749.0 L165.3 748.0 L164.0 746.0 M169.7 737.5 L170.0 736.2 L167.9 734.2 M160.5 737.9 L161.4 739.1 L160.7 739.5 M162.6 743.2 L162.5 743.0 L163.4 742.9 M176.7 745.1 L178.7 746.1 L179.3 746.3 L181.2 744.7 M172.5 740.7 L171.4 742.7 L169.4 741.0 L170.8 742.5 M179.2 740.0 L181.2 739.0 L181.2 736.8 L180.6 736.9 M167.4 752.8 L168.3 751.2 L168.4 749.9 L166.5 750.6 M167.5 735.3 L166.9 737.0 L169.0 736.1 M159.6 742.1 L158.5 741.1 L158.8 739.3 L158.9 739.6 M164.4 746.1 L162.8 745.0 L163.7 744.7 L161.8 743.0 L162.2 741.4 M152.2 720.6 L151.4 719.5 L151.6 719.8 L153.4 718.8 M169.1 740.1 L170.0 742.0 L170.1 742.9 M174.7 733.5 L173.3 732.4 L173.6 732.2 L173.1 730.5 M178.0 736.8 L180.3 735.3 L182.0 733.9 L180.5 735.2 M179.0 744.9 L179.0 744.0 L179.0 742.4 M165.7 737.7 L166.2 738.1 L164.2 738.1 L164.5 738.8 M192.4 740.4 L194.4 741.5 L196.3 739.4 L196.2 741.3 L196.8 743.1 M185.9 736.5 L185.4 734.7 L184.3 735.7 M192.4 736.1 L190.1 737.8 L188.8 736.5 M197.1 742.3 L196.2 740.9 L197.9 741.5 L196.5 743.6 M187.8 734.5 L188.2 734.9 L189.2 733.0 L188.5 732.1 L189.4 730.7 M189.6 737.6 L189.0 738.0 L186.8 735.9 L185.4 738.0 M188.9 734.8 L187.8 734.6 L188.2 735.9 L187.6 735.0 L187.3 737.1 M187.1 737.1 L189.0 736.4 L190.9 736.6 L190.1 735.8 M191.3 735.6 L192.4 734.9 L191.3 735.5 M192.6 741.3 L194.2 739.6 L195.2 741.6 L195.8 742.9 M185.8 736.0 L183.9 735.6 L182.2 737.5 M191.2 743.5 L192.2 743.4 L191.2 743.0 L189.7 742.5 L191.8 744.5 M192.5 736.9 L191.1 736.9 L191.1 737.1 L191.1 735.1 M188.4 737.8 L187.4 737.7 L188.6 738.6 L187.7 740.6 L188.4 740.9 M187.7 739.4 L186.7 739.4 L187.5 738.7 L186.5 738.1 M233.6 755.2 L234.7 753.1 L233.2 753.5 L235.2 754.6 M236.2 757.3 L237.1 755.9 L237.3 757.2 L236.2 758.6 L237.1 760.1 M233.8 754.8 L234.7 755.9 L235.6 757.3 L233.8 755.2 M237.3 755.3 L237.2 756.8 L235.8 757.2 L237.9 758.9 M221.3 744.4 L219.5 746.1 L219.6 744.4 M217.2 744.9 L216.2 745.7 L216.2 744.3 L216.6 746.5 M221.2 743.2 L223.2 741.8 L224.0 741.6 L225.0 743.6 M221.1 747.4 L221.0 747.3 L219.4 746.7 L218.5 748.1 L217.7 748.8 M239.5 757.5 L240.4 756.5 L241.1 758.6 L242.1 757.1 M226.1 752.0 L225.4 753.9 L227.0 752.0 L225.6 754.0 M233.2 755.0 L231.3 753.8 L230.7 755.9 L231.5 754.7 M229.4 752.7 L230.0 752.5 L231.8 753.1 M237.4 756.9 L237.4 754.7 L238.0 756.1 L236.6 758.1 M223.0 746.3 L222.0 747.3 L220.0 748.6 L222.2 747.7 L224.2 745.8 M225.3 746.9 L225.9 745.2 L225.2 747.4 L223.8 748.3 M230.3 752.7 L229.9 751.2 L229.1 750.0 M217.8 745.0 L215.6 746.5 L215.8 748.1 L214.1 746.9 M216.0 740.4 L214.5 741.0 L214.0 739.0 M210.9 738.7 L208.9 740.6 L210.0 741.4 M233.1 754.4 L232.1 752.2 L232.2 753.3 M224.3 749.7 L222.2 749.1 L220.5 751.1 L218.4 753.0 L220.4 752.7 M225.8 750.7 L227.8 749.6 L226.9 747.5 L228.0 745.7 M212.8 738.6 L212.9 736.9 L213.3 736.8 M230.2 755.0 L229.0 755.6 L228.5 756.8 L228.3 758.7 M217.6 742.7 L219.2 742.1 L217.0 741.3 L215.1 741.8 L216.3 743.7 M211.3 738.6 L211.8 740.8 L213.2 740.9 L214.5 742.1 L216.6 740.2 M234.9 753.6 L234.2 752.1 L235.3 754.0 M212.8 740.4 L211.1 740.3 L213.0 740.8 L214.0 739.2 L216.1 737.8 M218.1 742.2 L217.0 740.0 L218.8 737.9 M229.1 750.6 L229.3 752.0 L229.5 750.9 M216.1 743.1 L214.8 744.2 L215.2 742.3 L216.9 741.7 M213.1 740.4 L211.9 739.8 L212.1 739.2 L212.8 737.4 L212.5 737.7 M227.7 750.3 L226.4 752.4 L224.5 753.1 L224.5 753.3 M224.4 751.0 L223.5 750.7 L222.9 752.9 L223.1 754.6 M209.5 738.7 L209.2 736.9 L210.0 736.2 L208.1 737.2 M218.5 745.5 L220.1 746.5 L221.2 745.5 L221.2 746.5 L222.9 745.3 M216.2 740.2 L214.6 741.8 L215.9 742.2 M236.9 757.0 L237.4 756.9 L236.6 757.4 L235.2 756.0 M220.6 745.3 L221.7 747.2 L219.6 746.4 L221.0 747.0 L223.2 746.7 M226.7 749.7 L226.3 750.1 L225.4 750.5 M125.3 743.2 L123.2 744.7 L121.4 745.0 L123.3 743.7 L121.4 743.4 M122.3 750.5 L123.8 748.8 L122.6 749.4 M147.2 751.0 L145.2 749.8 L145.4 748.1 L145.1 748.3 M134.0 750.7 L132.5 751.1 L133.1 750.5 L133.4 748.5 L131.4 747.2 M137.8 748.3 L137.6 750.2 L137.0 749.0 L135.6 750.3 M131.3 746.7 L130.3 748.9 L128.6 748.5 L129.8 747.0 M131.1 741.2 L129.2 741.4 L130.5 742.9 L129.8 742.2 L129.7 743.5 M123.4 753.2 L121.4 754.1 L122.1 756.3 M127.4 752.7 L129.4 752.0 L129.9 752.0 M121.6 745.7 L120.4 745.2 L122.1 743.3 L121.9 743.6 L123.6 745.0 M128.5 747.0 L130.5 745.5 L129.1 744.2 L127.9 744.2 M134.6 745.3 L133.0 745.4 L133.5 744.6 M118.3 756.2 L119.0 757.2 L118.8 758.9 L120.8 759.7 L121.1 759.2 M127.7 749.3 L125.8 747.3 L124.5 745.8 L123.8 743.8 M114.8 756.4 L114.2 757.0 L116.3 757.5 L116.2 755.8 L116.1 757.9 M130.8 746.2 L129.0 745.5 L127.9 746.9 M147.3 750.1 L148.2 752.0 L149.3 751.1 M143.6 749.9 L143.0 748.7 L143.1 748.7 M136.3 751.7 L137.6 753.1 L138.7 751.9 M132.1 747.0 L134.3 748.3 L134.1 746.9 M135.2 746.7 L137.3 748.8 L136.7 747.5 L135.5 746.2 L134.2 746.7 M145.5 755.8 L147.4 755.1 L148.0 756.6 L146.3 756.1 M138.9 744.1 L138.6 744.7 L136.7 746.7 M139.3 748.9 L141.3 749.9 L139.8 748.3 L138.2 750.1 L139.6 748.5 M142.9 758.4 L144.9 756.8 L145.1 754.7 L146.5 755.7 L144.7 756.8 M118.8 758.5 L120.2 757.2 L119.1 756.3 M122.3 751.2 L122.5 752.7 L120.6 753.7 L122.4 754.5 M142.5 749.9 L140.9 748.3 L140.9 750.0 L142.2 750.5 L143.4 748.9 M118.9 751.8 L119.1 751.0 L119.2 751.2 M133.6 745.0 L131.5 743.2 L131.3 741.1 L133.1 739.1 M125.3 758.2 L125.4 759.1 L125.2 759.3 L125.1 761.2 L126.0 762.9 M133.6 757.7 L131.9 756.0 L131.7 754.1 L130.5 752.2 M137.4 754.8 L139.4 755.4 L138.8 754.3 M118.7 749.0 L120.7 748.6 L120.7 750.7 L122.2 749.2 L121.9 749.3 M125.8 744.0 L124.0 743.4 L123.3 743.2 L124.2 742.7 M132.1 745.9 L130.3 747.7 L129.1 749.4 M140.4 755.4 L141.9 754.4 L140.3 756.2 L140.6 757.1 L138.8 755.2 M138.1 748.2 L137.0 746.1 L135.2 745.0 M135.3 744.5 L136.9 744.3 L136.2 744.6 L138.1 743.5 M118.4 750.1 L120.4 752.2 L119.3 750.8 M146.7 751.9 L147.8 751.0 L147.8 749.6 L147.1 747.4 L146.0 745.2 M139.7 750.5 L139.7 749.4 L139.5 750.1 M136.7 752.5 L138.2 752.0 L138.3 752.8 L140.4 752.1 L141.9 753.0 M136.2 747.9 L138.4 749.4 L136.2 749.9 L137.9 749.6 M115.8 752.6 L117.5 753.4 L116.5 752.2 L115.6 752.0 M119.4 748.6 L118.8 747.8 L121.0 747.0 L118.9 748.8 M121.5 743.8 L121.0 743.7 L121.0 742.3 L121.0 740.1 M122.1 751.2 L123.6 749.6 L125.4 750.9 L125.8 752.1 L126.8 752.0 M123.9 751.8 L121.8 753.3 L123.6 753.8 M139.7 755.3 L141.5 756.4 L141.8 757.8 M114.4 753.0 L115.3 753.9 L114.1 751.8 L112.4 751.1 L110.6 752.7 M133.5 751.9 L133.7 750.8 L132.6 750.6 L130.7 752.5 L132.5 750.7 M132.4 754.1 L131.3 752.2 L130.2 753.2 L128.9 754.3 M127.3 749.2 L126.4 747.2 L127.0 745.8 L127.4 745.1 L128.1 745.9 M135.7 742.9 L133.7 741.9 L134.5 742.7 L135.3 741.8 M132.0 748.9 L133.2 751.2 L133.5 750.3 L131.6 750.2 M131.7 758.6 L131.2 760.5 L133.1 758.6 L131.3 759.7 M123.1 747.0 L124.5 747.1 L126.3 748.0 L125.1 749.8 L125.0 747.6 M129.7 746.0 L129.4 745.4 L127.7 744.7 M125.3 746.6 L123.6 748.6 L124.5 750.3 L123.6 749.8 M127.7 758.7 L125.8 760.6 L126.9 762.2 L126.0 760.2 L126.7 760.8 M119.1 758.2 L119.2 756.8 L118.6 758.9 L120.3 760.3 M136.1 757.2 L136.3 758.1 L134.3 759.2 L134.0 760.3 L134.7 759.4 M115.6 757.4 L114.1 757.0 L113.2 755.9 M139.9 752.4 L140.5 751.5 L140.8 751.0 L139.3 749.5 M121.2 757.0 L121.4 756.8 L120.7 758.0 L120.3 758.2 M122.5 743.6 L120.6 742.5 L119.5 742.8 L121.3 743.9 L120.9 743.5 M132.3 747.3 L133.4 747.3 L133.8 746.7 L134.6 746.8 M141.7 756.0 L140.6 754.8 L140.2 754.6 M147.4 756.0 L145.7 755.6 L146.9 757.0 M116.5 757.5 L118.0 759.6 L116.9 757.8 L115.4 757.9 L116.2 759.9 M139.3 752.3 L137.4 753.5 L135.2 751.9 L135.5 749.8 M139.0 758.0 L137.9 758.7 L138.8 756.9 L136.9 757.0 L137.2 756.5 M121.7 751.4 L121.9 753.7 L120.9 752.8 M132.4 750.5 L134.4 751.4 L133.6 749.2 M131.4 752.8 L129.5 751.6 L129.2 751.0 L129.2 751.9 M139.1 747.1 L137.8 748.4 L138.9 748.4 L137.5 750.5 M124.8 755.4 L124.7 754.4 L126.4 752.6 M135.8 751.6 L135.7 753.4 L133.7 753.9 M114.7 751.4 L112.7 749.4 L112.2 751.2 L113.9 752.2 M125.5 743.8 L126.6 741.8 L127.3 741.2 L126.7 740.5 L125.3 738.2 M123.7 746.9 L124.0 748.0 L123.5 749.2 M124.7 755.2 L122.7 755.0 L122.1 756.9 M120.7 747.1 L118.6 746.7 L120.0 747.9 L117.9 745.8 M116.1 757.3 L114.7 755.3 L115.2 754.7 L114.5 756.7 M115.4 754.1 L114.6 753.1 L112.4 754.2 L114.2 754.8 L116.2 752.7 M122.1 749.1 L124.1 748.6 L123.0 748.3 L123.0 750.2 M120.3 755.1 L119.4 756.0 L117.9 754.8 L119.5 754.6 L120.8 755.1 M131.9 747.6 L130.7 745.7 L128.7 745.9 M125.3 758.4 L127.5 757.3 L125.7 755.5 M85.8 753.3 L84.2 754.7 L84.2 754.2 M83.6 749.7 L83.6 748.4 L85.1 746.5 L83.9 744.4 M89.0 748.5 L90.0 749.2 L88.2 750.6 L87.7 752.1 M85.4 742.8 L86.2 742.8 L86.9 744.6 M93.9 745.0 L93.7 745.4 L93.5 745.6 L95.1 745.3 L93.6 745.8 M94.9 746.9 L96.9 748.5 L96.9 747.1 L95.4 747.2 M103.3 750.1 L103.5 749.4 L105.3 748.5 L104.0 746.4 L102.9 745.5 M98.8 748.6 L98.4 747.1 L99.1 749.2 L97.8 750.4 L96.9 748.2 M100.1 747.4 L100.5 749.2 L98.8 749.5 M100.1 750.4 L101.5 750.4 L102.5 752.6 M84.4 742.1 L83.7 742.8 L82.0 741.9 M90.3 747.8 L91.8 746.5 L93.5 744.4 L95.5 745.6 L97.7 745.9 M96.6 749.9 L97.9 749.4 L96.1 750.4 L96.8 751.3 M103.8 751.0 L103.6 749.0 L101.6 747.2 L100.3 745.0 M96.5 756.5 L95.9 756.2 L94.0 758.3 L95.2 758.3 L96.1 757.0 M88.1 750.4 L88.2 749.0 L87.3 748.1 L85.4 747.3 L87.2 746.9 M92.4 753.9 L94.0 754.0 L94.5 756.0 L95.8 755.1 L97.3 753.7 M89.5 751.8 L89.6 752.6 L88.9 753.4 L89.3 754.2 L88.0 755.6 M86.6 749.9 L88.8 751.2 L89.4 752.6 L91.6 751.6 M88.5 745.8 L89.8 746.9 L88.6 748.3 M96.4 755.3 L96.4 753.5 L94.6 751.6 L93.1 751.9 M87.3 746.1 L87.1 747.8 L88.9 749.7 M85.0 751.7 L83.1 753.0 L84.6 751.1 L83.0 752.5 L85.2 750.6 M103.6 751.7 L102.0 750.6 L101.5 750.3 L102.8 748.5 M88.0 746.6 L87.2 745.3 L89.2 743.3 M86.8 752.2 L88.5 753.3 L88.4 753.5 L90.4 755.8 M90.3 748.5 L88.7 748.2 L89.5 748.0 M98.0 746.5 L98.3 748.3 L100.2 749.1 L102.4 749.1 M91.2 755.5 L89.8 754.5 L91.8 756.0 L93.3 755.0 L93.9 755.0 M100.7 750.1 L101.0 749.6 L99.4 749.6 M93.7 746.6 L91.6 746.0 L93.6 745.3 M98.7 751.9 L100.2 749.7 L101.6 749.5 M104.3 754.3 L104.6 754.6 L106.3 754.1 L106.3 756.2 M99.1 747.8 L97.3 747.0 L95.5 748.6 L96.2 748.5 M95.9 756.9 L95.4 757.5 L93.3 755.9 L94.2 757.7 M88.2 747.7 L88.1 746.2 L86.5 745.2 L84.3 744.9 M89.4 752.9 L91.0 752.0 L92.6 751.8 L93.1 751.7 M97.7 747.4 L99.8 745.6 L100.7 746.4 L100.1 746.7 L98.8 746.8 M96.2 754.5 L97.7 752.7 L99.0 753.8 L97.7 754.4 L96.6 756.1 M87.4 743.7 L87.1 745.2 L86.3 743.1 M83.1 742.1 L83.4 742.8 L81.2 744.2 M90.4 755.7 L89.2 757.2 L90.8 758.0 L90.9 756.7 M103.6 754.1 L105.4 753.8 L103.8 752.2 L104.7 754.2 M97.9 747.5 L97.6 745.4 L97.2 746.2 L99.4 745.2 L100.6 744.4 M86.6 742.8 L85.7 741.9 L84.7 739.8 L86.0 740.7 L86.9 739.4 M103.3 748.9 L104.8 749.1 L104.8 749.0 L105.3 748.3 L103.7 746.8 M85.1 750.3 L85.6 748.7 L84.5 747.5 L85.5 747.9 M87.5 753.0 L88.7 751.1 L87.9 751.4 L88.6 752.4 L88.2 750.2 M90.0 747.6 L88.3 747.1 L89.9 747.8 L89.7 748.3 M93.9 750.7 L91.8 748.6 L92.7 749.4 M154.1 725.5 L152.7 726.3 L152.0 726.1 M155.7 725.0 L156.6 726.0 L155.1 728.0 L157.1 727.7 L155.6 725.7 M150.5 731.8 L148.5 732.6 L149.8 734.4 L151.7 733.1 L150.5 734.4 M158.8 730.5 L158.3 729.8 L156.3 730.8 M158.9 731.5 L156.7 731.1 L158.5 729.4 M155.6 722.3 L154.2 723.9 L153.5 725.6 L151.8 727.5 L151.8 727.8 M154.9 723.3 L154.5 723.9 L152.7 724.3 M150.9 728.5 L148.9 728.7 L149.4 727.2 M160.0 722.3 L159.5 724.1 L158.0 724.2 L159.1 725.7 L159.2 726.0 M156.6 731.7 L158.2 732.1 L158.0 731.7 M159.8 728.0 L159.3 728.5 L157.1 726.8 M151.5 724.2 L150.6 723.2 L150.7 721.2 M153.2 727.9 L153.2 728.8 L152.1 729.9 L151.7 728.7 M159.6 725.8 L161.6 726.1 L160.0 725.2 L160.9 726.9 M157.9 724.1 L160.1 724.6 L157.9 722.6 M151.3 725.7 L149.1 727.0 L148.2 726.9 L147.2 729.0 L148.3 728.1 M150.3 726.1 L151.2 727.3 L150.7 729.0 M150.9 729.8 L152.6 729.8 L150.8 727.8 L150.9 726.3 L151.5 724.5 M157.6 723.6 L156.3 723.5 L156.7 723.7 M149.9 727.7 L151.9 727.9 L153.9 725.8 L156.1 727.5 L156.3 727.6 M154.9 732.3 L156.6 732.6 L158.7 730.7 M151.5 722.5 L152.4 722.3 L152.3 722.9 M153.1 731.9 L152.5 734.0 L152.9 733.9 M151.7 728.6 L152.2 729.4 L151.8 727.5 M151.1 728.5 L149.2 726.4 L149.8 726.6 M797.4 628.2 L794.6 628.0 L794.6 626.7 L796.3 624.1 L796.3 621.7 M803.7 644.6 L801.2 646.6 L801.8 645.9 L800.6 646.9 M795.4 641.5 L794.7 641.2 L796.7 639.8 L796.3 639.1 L796.8 637.6 M791.0 653.0 L790.3 655.3 L789.3 655.6 L788.9 653.1 L789.4 655.0 M790.4 617.6 L788.9 615.0 L787.8 615.6 L785.4 618.0 M803.6 653.2 L801.5 654.8 L799.2 652.9 M801.3 655.0 L803.9 654.7 L805.0 652.7 L805.1 654.8 M792.3 621.7 L793.1 623.4 L794.6 623.3 L793.8 623.0 L791.0 624.2 M793.3 622.5 L792.0 622.0 L790.1 624.3 M796.1 652.2 L796.2 654.5 L796.3 655.1 L793.9 655.0 L793.7 654.5 M794.8 636.3 L794.2 637.4 L794.5 635.1 L797.2 637.0 L799.3 636.6 M801.7 647.4 L801.5 647.0 L801.5 646.7 M799.9 652.4 L799.7 651.5 L799.8 651.6 L801.2 650.6 L798.5 648.9 M802.9 635.8 L802.8 637.5 L805.4 637.1 L807.4 638.3 L809.6 635.8 M803.1 645.7 L805.8 644.5 L806.7 642.5 M797.8 653.6 L800.5 651.8 L801.0 651.4 M802.2 644.9 L803.5 644.6 L804.8 642.9 L805.4 640.8 L807.0 638.0 M794.9 627.1 L797.0 628.0 L794.6 627.6 L792.3 625.1 M792.0 629.6 L792.8 628.4 L793.9 628.4 M796.3 619.6 L797.1 618.8 L795.8 621.1 L797.8 621.6 M793.9 643.3 L796.5 646.1 L797.8 643.7 M802.0 649.3 L802.5 650.1 L800.1 649.5 M794.0 637.3 L792.2 635.1 L793.8 637.5 M791.5 644.5 L789.7 644.9 L789.4 647.6 L791.5 644.9 M791.2 649.9 L789.4 652.3 L789.8 653.8 L791.7 655.9 L792.5 656.3 M803.4 622.8 L801.6 620.9 L802.2 622.9 L805.0 620.3 L807.4 620.3 M793.6 626.6 L795.8 624.1 L798.1 623.8 L798.0 623.5 L797.7 624.1 M793.7 627.9 L796.3 628.0 L795.6 625.7 L796.4 623.2 M802.2 639.1 L802.6 641.8 L804.2 641.0 M794.1 608.6 L792.2 611.1 L790.7 611.6 M801.8 621.7 L801.2 623.1 L798.8 624.6 M796.0 614.7 L798.5 613.7 L795.9 615.6 L794.1 616.8 M790.3 639.2 L789.7 636.9 L792.3 634.8 L790.1 636.0 L789.1 634.9 M798.7 652.1 L800.5 652.2 L800.4 650.8 L799.2 651.7 M803.9 626.0 L801.7 626.8 L801.5 627.2 M794.5 617.3 L792.1 619.4 L792.7 619.7 L790.1 619.2 M795.0 649.1 L796.3 648.3 L797.0 651.1 M790.6 616.6 L793.2 615.0 L795.5 614.3 L795.7 614.9 M802.4 645.4 L799.6 642.7 L797.2 644.2 M804.2 612.4 L801.8 613.4 L803.1 611.6 L802.7 609.0 M790.6 642.3 L790.4 641.4 L787.8 642.1 L787.7 643.3 L787.0 640.9 M792.2 615.1 L789.5 613.9 L791.8 612.8 L793.3 613.0 M792.6 638.0 L794.3 638.4 L795.1 639.8 L794.7 639.9 M799.7 638.8 L797.3 637.2 L794.5 635.2 L796.6 637.1 L794.6 634.5 M796.4 642.7 L795.3 644.7 L793.5 645.4 L790.8 646.0 M795.3 652.5 L794.4 653.5 L792.5 653.4 M794.3 630.3 L797.0 630.3 L796.2 632.8 L797.7 634.8 M794.1 652.1 L795.5 651.1 L793.0 648.6 L792.1 648.7 M803.2 610.2 L804.4 608.1 L807.2 610.5 L806.8 611.4 L808.7 613.8 M799.9 610.7 L802.5 612.4 L802.1 610.6 M789.9 638.6 L791.0 636.9 L793.5 635.4 L791.6 634.8 L793.6 635.3 M799.3 648.3 L800.9 646.6 L798.5 647.9 L796.5 648.5 M796.8 609.7 L796.5 611.7 L794.9 608.9 L793.1 607.1 M794.2 616.7 L793.1 615.4 L790.6 614.9 L789.7 614.0 M792.7 652.4 L794.8 649.9 L796.0 649.7 L798.1 647.5 L800.0 647.1 M802.5 609.8 L802.6 612.3 L802.8 613.6 L801.4 613.5 M802.3 627.8 L803.7 629.8 L805.5 629.2 M798.4 642.8 L797.9 643.2 L796.0 641.3 L795.8 641.7 L795.3 644.3 M797.0 629.2 L797.0 628.4 L798.2 628.2 M790.9 617.5 L789.0 619.1 L786.3 619.5 L788.2 616.8 L786.3 619.6 M792.9 645.7 L791.1 644.7 L791.1 642.1 M800.7 607.1 L801.7 605.8 L799.8 603.2 L800.6 604.2 L799.2 604.2 M800.6 624.1 L800.2 626.2 L799.2 628.0 L798.9 625.8 L799.8 627.0 M795.9 628.6 L793.5 629.1 L793.8 628.1 L792.1 630.8 M797.6 643.5 L799.1 641.6 L800.7 640.8 M789.8 618.8 L792.1 619.2 L789.7 621.0 M788.7 649.4 L788.6 652.0 L790.0 652.9 L792.7 654.0 M791.9 639.5 L791.6 641.7 L791.9 642.7 M799.5 628.5 L798.0 629.6 L799.9 629.5 M799.7 645.0 L801.4 645.9 L802.7 647.2 M796.8 581.3 L796.5 583.2 L794.8 585.0 L794.7 585.6 M803.8 584.4 L806.5 587.0 L807.4 587.7 L805.5 585.0 L805.6 582.5 M796.6 593.2 L795.1 592.1 L792.3 589.8 L793.2 589.2 L793.5 591.6 M801.7 579.3 L799.3 580.8 L798.7 582.7 M795.7 598.1 L792.9 596.5 L795.2 596.3 L797.9 595.8 L795.5 596.5 M802.0 569.0 L801.0 566.3 L800.5 568.6 M791.7 587.5 L789.3 589.2 L787.4 589.5 M801.3 563.1 L800.6 562.5 L803.4 559.7 L805.4 562.4 L805.9 565.2 M805.5 583.0 L803.3 585.8 L801.7 584.4 L803.2 583.5 L802.0 581.1 M793.5 583.0 L794.1 580.9 L794.6 582.8 L792.6 582.2 M799.6 570.7 L801.4 569.3 L799.6 570.7 M804.6 565.9 L806.8 566.5 L806.3 564.2 L803.7 566.8 M793.4 587.4 L792.9 589.7 L792.9 589.8 L795.3 592.4 M800.0 583.6 L798.8 586.0 L797.1 583.3 M793.9 576.4 L791.3 575.2 L791.5 577.9 M796.8 571.6 L797.8 572.0 L795.8 569.4 L793.1 571.7 L794.3 574.3 M797.3 588.5 L795.2 586.1 L795.0 585.4 L792.4 587.8 M801.4 563.0 L800.5 564.1 L802.8 566.2 L802.3 567.8 M803.4 581.8 L804.3 581.1 L801.6 578.7 L799.3 576.6 L797.9 576.1 M794.8 597.1 L795.3 596.8 L797.2 594.5 L798.6 591.8 L799.2 591.7 M793.2 587.1 L794.8 588.0 L794.7 590.2 L794.0 588.2 M799.4 579.5 L800.2 579.2 L802.4 578.2 L803.4 576.5 M796.5 591.7 L798.6 591.0 L799.1 590.0 M803.0 593.5 L800.5 596.2 L802.3 594.0 L802.2 596.4 L804.0 595.7 M797.9 586.0 L799.8 588.7 L799.5 586.3 L796.9 588.4 L794.3 589.6 M798.7 570.6 L796.0 568.6 L795.7 565.9 L797.6 564.5 L795.6 561.9 M799.6 576.5 L799.8 577.2 L799.1 574.9 L797.4 576.7 L796.0 577.9 M801.6 580.2 L799.8 578.9 L799.0 580.0 M797.9 583.6 L797.3 585.2 L799.6 582.9 M804.5 588.1 L804.2 586.4 L806.4 583.7 M798.4 585.2 L800.0 587.7 L799.8 588.5 L798.2 589.8 L800.0 590.6 M801.0 566.6 L803.7 569.3 L803.9 570.9 L802.9 573.2 M803.3 572.3 L800.7 571.4 L800.2 570.2 M804.3 566.8 L803.9 564.2 L804.1 565.2 M804.2 577.5 L806.5 577.6 L807.5 577.3 L809.6 577.7 L810.6 579.1 M796.6 581.2 L796.9 579.3 L797.0 581.6 L795.7 582.6 L798.2 584.7 M799.3 570.4 L801.9 570.6 L802.3 568.9 M798.1 578.9 L797.4 579.1 L794.9 581.4 L795.1 584.2 L793.0 581.9 M792.2 597.0 L791.7 599.5 L794.1 598.2 L794.0 596.1 M796.5 592.1 L796.6 589.9 L796.2 587.3 L794.8 588.4 M805.2 559.1 L803.7 560.1 L802.7 559.3 M801.3 562.8 L801.9 564.0 L803.1 566.1 L800.4 566.8 L802.2 567.5 M798.2 594.1 L798.9 594.3 L800.9 594.9 L802.9 593.4 L804.3 595.2 M804.0 570.9 L806.2 569.2 L807.8 567.5 L805.5 569.7 M795.8 576.0 L796.0 577.1 L794.3 577.8 L796.0 575.6 M255.9 660.7 L265.8 661.7 M270.7 663.1 L280.5 664.6 M284.2 665.1 L286.9 665.6 M296.8 661.7 L307.6 662.4 M249.3 678.4 L252.5 684.0 M253.7 688.1 L254.1 694.5 L253.0 700.1 M245.3 692.9 L249.3 692.1 M242.1 699.3 L244.5 701.7 M250.1 705.7 L247.7 709.2 M243.7 713.7 L241.3 716.6 M236.5 722.0 L233.8 724.9 M227.7 729.4 L223.7 731.6" fill="none" stroke="#000" stroke-width="1.2" stroke-linejoin="round"/>
<path d="M785.3 655.3 L787.8 665.1 L784.1 672.5 L787.8 679.9 L792.7 687.3 L791.5 697.1 L795.2 704.5 L789.0 711.9 L787.8 719.3 L784.1 726.7" fill="none" stroke="#000" stroke-width="3.6" stroke-linejoin="round"/>
<path d="M785.3 655.3 L787.8 665.1 L784.1 672.5 L787.8 679.9 L792.7 687.3 L791.5 697.1 L795.2 704.5 L789.0 711.9 L787.8 719.3 L784.1 726.7" fill="none" stroke="#0a5078" stroke-width="2.2" stroke-linejoin="round"/>
<path d="M299.8 59.1 L305.9 56.2 L313.3 57.9 L315.8 66.5 L323.2 71.4 L319.5 76.4 L318.2 83.7 L323.2 91.1 L322.7 96.1 L315.8 83.7 L314.5 73.9 L310.8 66.5 L308.4 60.3 L303.4 62.8Z M368.7 260.3 L373.6 257.9 L382.3 262.8 L389.7 266.5 L395.8 273.9 L395.8 276.8 L387.2 270.2 L377.3 265.3 L371.2 262.8Z M525.6 502.2 L529.3 507.1 L533.0 503.4 L531.8 513.3 L529.3 520.7 L536.7 525.6 L533.0 533.0 L530.5 537.9 L525.6 531.8 L526.8 523.2 L525.6 515.8 L527.6 509.6Z M424.1 413.5 L426.6 416.0 L425.9 420.9 L429.1 427.1 L432.0 429.6 L430.8 434.5 L427.6 430.8 L424.6 423.4Z M604.9 308.3 L608.6 303.4 L613.5 298.5 L612.3 286.2 L616.0 289.9 L619.7 286.2 L622.2 292.3 L627.1 293.5 L620.9 300.9 L617.2 305.9 L612.3 310.8 L607.4 313.2Z M439.4 376.1 L441.9 370.0 L446.8 363.8 L451.7 365.0 L448.0 370.0 L444.3 373.6 L443.1 377.3Z M541.9 606.0 L544.3 612.2 L551.7 612.2 L553.0 606.0 L555.4 610.9 L563.5 610.4 L563.5 613.4 L556.7 614.6 L549.3 618.3 L545.6 619.5 L541.9 615.9Z M122.4 659.0 L125.6 654.0 L131.8 652.8 L136.0 656.5 L135.5 662.7 L131.8 667.6 L125.6 668.1 L121.9 665.1Z M144.8 697.6 L147.6 695.2 L151.8 695.5 L153.3 699.0 L151.1 701.1 L154.0 703.2 L154.7 706.7 L151.1 708.1 L147.6 710.2 L144.8 714.4 L141.3 713.0 L140.6 709.5 L143.4 707.4 L146.9 705.3 L146.2 701.8Z M42.2 680.0 L46.4 680.7 L49.2 684.2 L52.0 687.7 L50.6 689.8 L47.1 688.4 L44.3 684.9Z M59.1 684.9 L61.9 688.4 L64.0 694.1 L66.1 699.7 L70.3 702.5 L75.9 703.9 L81.5 705.3 L85.1 707.4 L84.4 710.2 L80.1 710.2 L74.5 707.4 L68.9 706.7 L64.0 704.6 L61.9 699.7 L59.1 695.5 L56.9 691.2Z M784.1 729.2 L787.8 734.1 L792.7 740.2 L796.4 746.4 L793.9 753.8 L789.0 751.3 L785.3 743.9 L783.6 736.5Z M769.3 790.7 L774.2 789.5 L779.2 790.2 L779.2 793.2 L769.3 793.2Z" fill="#27496c" stroke="#1e3858" stroke-width="1"/>
<path d="M182.3 6.2 L192.1 19.7 L197.0 36.9 L200.0 43.1 L200.0 91.1 L189.7 110.8 L184.7 133.0 L176.1 149.0 L172.4 162.6 L157.6 187.2 L150.2 200.0 M147.8 200.0 L145.3 207.4 L147.8 223.4 M240.6 6.2 L229.6 17.2 L227.6 36.9 L225.9 54.2 L214.8 64.0 L200.0 71.4 M240.6 6.2 L249.3 17.2 L259.1 32.0 L262.8 45.6 L264.0 53.0 L273.9 59.1 L293.6 59.1 L305.9 53.0 L318.2 57.9 L337.9 73.9 L360.1 89.9 L377.3 105.9 L400.0 120.7 M6.2 257.1 L36.9 255.4 L61.6 250.5 L86.2 243.1 L110.8 234.5 L128.1 227.1 L147.8 223.4 L161.3 224.6 M161.3 224.6 L162.6 220.9 L172.4 220.9 L175.4 225.9 L172.4 230.8 L165.0 230.8 L161.3 224.6 M174.9 224.6 L187.2 214.8 L200.0 209.9 M200.0 210.1 L214.8 197.0 L229.6 186.0 L249.3 177.3 L273.9 170.0 L303.4 162.6 L333.0 158.9 L352.7 150.2 L372.4 145.3 L387.2 140.4 L400.0 134.2 M165.0 230.8 L167.5 249.3 L170.0 273.9 L172.4 298.5 L174.9 323.2 L178.6 347.8 L183.5 372.4 L181.0 400.0 M181.0 397.5 L177.3 400.0 L170.0 414.8 L162.6 429.6 L160.1 449.3 L153.9 471.4 L147.8 478.8 L142.9 496.1 L135.5 510.8 L131.8 535.5 L129.3 560.1 L128.1 600.0 M127.6 599.8 L126.1 606.0 L126.8 625.7 L130.5 640.5 L134.2 652.8 L133.0 667.6 L133.0 675.0 M6.2 460.3 L24.6 462.8 L49.3 465.3 L73.9 469.0 L91.1 475.1 L99.8 473.9 L123.2 473.4 L140.4 473.9 L152.7 480.0 L172.4 478.8 L200.0 475.1 M200.0 475.1 L224.6 475.1 L257.9 473.9 L281.3 466.5 L298.5 451.7 L315.8 432.0 L333.0 414.8 L345.3 403.7 M257.9 473.9 L249.3 491.1 L236.9 515.8 L229.6 535.5 L217.2 550.2 L214.8 572.4 L204.9 600.0 L202.5 606.9 M6.2 662.2 L14.8 660.7 L16.0 652.8 L36.9 647.9 L66.5 643.4 L78.8 644.2 L91.1 642.9 L108.4 640.5 L128.1 640.5 L147.8 644.2 L167.5 651.6 L184.7 655.3 L200.0 655.3 M9.9 620.8 L13.5 630.6 L14.8 655.3 L16.0 660.7 M91.1 642.9 L91.1 652.8 L98.5 662.7 L108.4 670.0 L118.2 672.5 L133.0 675.0 L147.8 679.9 L160.1 686.0 L172.4 677.4 L182.3 665.1 L187.2 652.8 M193.1 656.0 L199.3 655.3 L214.0 650.3 L231.3 645.4 L248.5 642.9 L263.3 645.4 L278.1 642.9 L292.9 635.6 L305.2 630.6 L312.6 623.2 L322.4 624.5 L337.2 625.7 L350.0 628.2 M203.0 606.0 L199.3 620.8 L189.4 640.5 L186.9 650.3 L185.7 655.3 L179.6 670.0 L169.7 679.9 L159.9 686.0 L150.0 682.4 M320.0 599.8 L313.8 610.9 L312.6 623.2 M330.0 624.5 L344.8 628.2 L357.1 631.9 L366.9 636.8 L379.3 636.8 L389.1 629.4 L403.9 622.0 L421.1 617.1 L443.3 616.3 L458.1 620.8 L472.9 617.1 L487.6 615.4 L507.3 617.1 L530.0 615.9 M500.0 617.1 L514.8 615.4 L529.6 620.8 L544.3 625.7 L564.0 633.1 L581.3 639.3 L598.5 640.0 L615.8 640.5 L633.0 643.4 L640.4 644.7 M640.0 644.2 L654.8 645.4 L669.6 650.3 L689.3 656.5 L704.0 659.0 L721.3 661.4 L738.5 662.7 L755.8 659.0 L773.0 656.5 L785.3 655.3 M660.9 606.0 L667.1 618.3 L676.9 630.6 L689.3 640.5 L701.6 652.8 L710.2 667.6 L716.4 682.4 L721.3 697.1 L731.1 711.9 L739.8 726.7 L745.9 741.5 L748.4 758.7 L750.8 773.5 L754.5 792.0 M785.3 606.0 L787.8 620.8 L786.6 635.6 L780.4 645.4 L777.9 655.3 L780.4 665.1 L790.2 667.6 L797.6 675.0 L802.6 687.3 L805.5 697.1 M780.4 645.4 L787.8 647.9 L790.2 659.0 L787.8 666.3 L780.4 665.1 M805.6 536.6 L801.9 552.6 L796.9 572.3 L789.6 587.1 L784.6 599.9 L783.4 606.8 M401.4 346.0 L401.9 354.9 L401.0 363.7 L402.9 372.6 L405.1 380.7 L402.9 390.3 L405.1 397.7 L408.8 405.1 L411.0 414.0 L416.9 424.3 L420.6 433.2 L423.6 440.6 L426.5 449.4 L431.0 458.3 L434.7 466.0 L439.4 471.5 M405.1 380.7 L411.0 374.1 L415.5 363.7 L421.4 357.8 L428.8 349.0 L434.7 346.0 M415.5 365.2 L428.8 363.7 L440.6 362.3 L452.4 363.0 L466.0 364.5 M405.1 380.7 L396.2 385.9 L388.1 386.6 L381.5 391.8 L374.1 397.0 L360.8 400.7 L351.9 401.4 L346.0 402.9 M388.1 386.6 L391.8 375.6 L396.2 371.1 L402.2 368.2 M394.6 168.0 L394.6 200.0 L394.6 238.2 L395.8 261.6 L397.0 281.3 L395.8 298.5 L398.3 310.8 L399.5 335.5 L399.0 347.8 M382.3 108.4 L372.4 118.2 L367.5 133.0 L370.0 147.8 L377.3 157.6 L389.7 163.8 L400.0 167.5 M400.0 99.8 L414.8 101.0 L432.0 108.4 L436.9 123.2 L432.0 147.8 L424.6 157.6 L409.9 162.6 L400.0 165.0 M420.9 91.1 L427.1 76.4 L434.5 59.1 L456.7 53.0 L469.0 36.9 L472.7 19.7 L472.7 6.2 M436.9 130.5 L461.6 134.2 L483.7 137.9 L505.9 135.5 L520.7 139.2 L533.0 147.8 L550.2 157.6 L572.4 160.1 L592.1 160.1 L600.0 157.6 M407.4 137.9 L419.7 150.2 L432.0 162.6 L446.8 184.7 L459.1 197.0 L461.6 200.0 M587.3 6.5 L586.6 21.6 L594.6 36.0 L603.6 46.8 L604.6 64.9 L601.8 82.9 L605.4 95.5 L590.9 108.1 L594.6 118.9 L603.6 131.5 L612.6 147.7 L623.4 148.4 M504.5 237.8 L518.9 230.6 L544.1 212.6 L558.5 201.8 L572.9 183.7 L583.7 169.3 L594.6 158.5 M461.6 200.0 L471.4 214.8 L481.3 229.6 L493.6 234.5 L505.9 238.9 M434.7 346.1 L449.3 333.0 L464.0 315.8 L476.4 298.5 L486.2 278.8 L496.1 259.1 L501.0 245.6 L505.9 238.9 M466.0 364.5 L473.9 361.3 L498.5 357.6 L523.2 353.9 L547.8 350.2 L572.4 347.8 L582.3 352.7 M505.9 238.9 L518.2 236.9 L523.2 241.9 L533.0 249.3 L537.9 266.5 L542.9 281.3 L547.8 293.6 L555.2 303.4 L557.6 313.3 L570.0 323.2 L577.3 337.9 L582.3 352.7 M583.5 294.8 L576.1 305.9 L572.4 320.7 L570.0 325.6 M583.5 344.1 L590.9 347.8 L592.1 356.4 L587.2 362.6 L578.6 361.3 L574.9 353.9 L577.3 346.6 L583.5 344.1 M583.5 347.8 L592.1 337.9 L600.0 333.0 M582.3 352.7 L577.3 367.5 L570.0 382.3 L557.6 392.1 L552.7 400.0 M583.5 357.6 L587.2 372.4 L594.6 387.2 L600.0 397.0 L607.4 400.0 M600.0 331.7 L624.6 318.2 L649.2 303.4 L673.9 288.6 L684.9 283.7 L705.9 273.9 L728.0 256.6 L740.3 251.7 L760.0 241.9 L777.3 232.0 L805.6 222.2 M590.2 347.7 L600.0 352.6 L624.6 361.3 L649.2 366.2 L683.7 368.6 L710.8 372.3 L747.7 373.6 L760.0 368.6 L777.3 357.6 L796.9 345.2 L805.6 339.1 M740.3 251.7 L747.7 266.5 L769.9 281.2 L792.0 298.5 L805.6 308.3 M720.6 200.0 L732.9 212.3 L745.2 217.2 L757.6 234.5 L769.9 281.2 M600.0 377.3 L604.9 389.6 L609.8 399.9 M607.4 400.0 L627.1 422.2 L634.5 434.5 L630.8 449.2 L629.5 473.9 L630.8 503.4 L636.9 523.1 L646.8 542.8 L650.5 562.5 L656.6 584.6 L659.1 599.9 L660.3 609.3 M627.1 422.2 L639.4 429.5 L649.2 444.3 L668.9 454.2 L686.2 460.3 L708.3 465.2 L732.9 468.9 L760.0 472.6 L777.3 480.0 L794.5 484.9 L805.6 493.5 M627.1 422.2 L634.5 424.6 L638.2 430.8 L634.5 434.5 M439.4 471.4 L461.6 470.2 L481.3 462.8 L498.5 454.2 L510.8 446.8 L523.2 429.6 L537.9 414.8 L546.6 404.9 L547.8 400.0 L550.2 390.1 M439.4 471.4 L434.5 483.7 L424.6 503.4 L412.3 523.2 L400.0 542.9 M400.0 542.9 L382.3 562.6 L360.1 582.3 L337.9 594.6 L320.7 600.0 L314.5 609.4 M805.6 72.6 L792.0 76.3 L772.3 81.2 L757.6 88.6 L742.8 96.0 L728.0 103.4 L713.2 113.2 L698.5 120.6 L681.2 129.2 L668.9 135.4 L659.1 142.8 L644.3 148.9 L629.5 147.7 L614.8 148.9 L600.0 157.6 M659.1 142.8 L668.9 150.2 L673.9 162.5 L683.7 172.3 L686.2 183.4 L698.5 189.6 L713.2 189.6 L732.9 184.6 L760.0 180.9 L777.3 176.0 L796.9 172.3 L805.6 174.8 M713.2 189.6 L720.6 199.9" fill="none" stroke="#7c6b0e" stroke-width="1" stroke-linejoin="round"/>
<path d="M6.2 105.2 L155.2 105.2 L161.3 114.5 L160.1 123.2 L153.9 130.5 L147.8 134.2 L142.9 141.6 L137.4 149.0 L187.2 149.0 M201.0 8.2 L200.5 9.7 L200.1 9.9 L200.1 9.5 L201.0 9.6 L202.9 10.7 L205.3 12.2 L207.2 13.3 L208.1 13.5 L208.2 13.2 L207.7 13.4 L207.2 14.9 L206.6 17.5 L206.4 19.3 L206.1 20.5 L205.8 20.9 L206.0 21.1 L206.8 21.7 L207.8 23.1 L208.9 24.7 L209.6 26.1 L209.9 26.6 L209.9 26.9 L209.4 27.7 L208.4 28.9 L207.1 30.3 L206.1 31.3 L205.3 31.7 L204.8 32.0 L204.4 32.7 L204.3 33.4 L204.2 34.7 L204.5 36.2 L205.0 37.8 L205.6 39.0 L206.1 39.8 L206.4 40.1 L206.5 40.5 L206.5 41.3 L206.4 42.4 L206.5 43.9 L206.6 45.9 L206.8 47.6 L206.8 48.5 L206.8 48.9 L207.2 49.0 L208.1 49.1 L209.8 49.7 L211.9 50.2 L213.8 50.6 L215.0 50.5 L215.3 50.3 L215.4 50.4 L215.4 51.1 L216.1 52.4 L217.3 54.1 L218.6 56.6 L218.6 57.6 L218.1 57.3 L219.2 56.6 L222.2 56.0 L224.7 55.2 L225.1 54.5 L224.4 54.6 L225.3 56.1 L226.5 58.9 L227.2 61.0 L226.2 61.1 L226.3 60.5 L228.2 60.7 L230.6 62.5 L232.1 63.4 L232.3 63.8 L231.6 63.9 L229.9 65.6 L228.6 67.4 L228.0 68.3 L227.9 68.4 L228.4 69.1 L229.4 70.7 L230.5 72.4 L231.2 73.0 L231.2 73.1 L230.8 73.9 L230.3 75.8 L229.4 78.6 L228.5 80.1 L227.5 79.5 L227.6 78.8 L228.4 79.0 L230.1 80.4 L231.5 83.1 L232.8 85.5 L233.7 86.7 L234.0 86.8 L233.9 86.2 L232.7 86.4 L230.7 88.0 L228.6 89.5 L227.1 90.4 L226.5 90.4 L226.9 90.4 L227.0 91.6 L226.6 93.8 L226.2 95.9 L225.8 96.6 L225.8 96.6 L224.4 96.7 L222.4 95.8 L220.6 93.8 L219.7 91.9 L219.2 91.1 L219.0 90.9 L218.7 91.1 L217.6 92.0 L216.1 93.9 L215.0 96.7 L214.6 99.4 L215.4 101.1 L216.0 101.6 L216.0 101.8 L215.6 101.4 L214.2 101.7 L211.6 101.8 L209.0 101.5 L207.2 100.7 L206.4 100.0 L206.5 99.4 L206.4 99.4 L205.5 99.6 L204.2 100.4 L202.7 101.8 L201.9 103.7 L202.0 105.3 L202.8 105.7 L203.0 105.9 L202.7 106.1 L201.9 106.6 L200.6 107.8 L199.1 109.2 L198.2 110.2 L197.4 111.1 L196.8 111.8 L196.4 112.3 L196.1 112.8 L195.9 113.5 L195.7 114.5 L195.7 115.7 L195.6 117.2 L195.8 118.7 L195.9 120.0 L196.3 121.0 L196.5 121.7 L196.6 122.2 L196.6 122.7 L196.6 123.5 L196.4 124.7 L195.9 125.9 L195.2 127.2 L193.9 128.5 L192.8 129.3 L192.0 129.5 L191.5 129.8 L191.6 129.8 L191.5 130.3 L191.2 131.3 L190.5 132.7 L190.1 134.5 L189.8 136.3 L189.9 137.6 L190.1 138.5 L190.2 138.9 L190.2 138.8 L189.9 139.2 L189.3 139.9 L188.7 141.2 L188.3 143.0 L187.6 144.7 L187.0 145.5 L187.0 145.6 L187.5 146.0 L188.0 147.6 L188.6 149.6 L188.8 150.9 L188.9 151.2 L188.6 151.6 L187.4 152.5 L185.0 153.9 L182.7 155.2 L181.8 155.3 L182.0 154.5 L182.5 155.2 L183.8 157.1 L185.5 159.9 L187.5 161.7 L188.7 161.3 L188.6 160.1 L188.4 160.7 L187.4 162.6 L185.7 165.3 L183.5 166.7 L182.4 166.0 L182.8 165.3 L183.6 166.0 L183.3 168.3 L182.3 171.2 L182.1 173.1 L182.6 173.3 L182.7 172.7 L181.0 172.5 L178.2 172.8 L176.3 173.2 L174.9 173.3 L174.3 173.3 L174.2 173.3 L174.2 173.7 L173.8 174.8 L173.1 176.4 L172.4 178.4 L172.0 180.2 L172.4 181.3 L172.8 181.7 L172.9 181.0 L172.5 181.2 L171.6 181.8 L171.6 183.6 L171.3 185.5 L170.8 186.8 L170.1 187.2 L169.8 187.5 L169.8 187.7 L169.6 188.5 L169.2 189.6 L168.4 191.0 L167.6 192.4 L167.1 193.5 L166.8 194.1 L166.5 194.4 L166.0 194.6 L165.0 195.0 L163.7 195.8 L162.1 196.8 L160.6 197.6 L160.3 197.5 L160.5 197.9 L161.0 199.5 L160.3 201.7 L159.9 203.1 L160.1 203.3 L159.5 203.1 L157.7 203.3 L155.3 204.6 L154.5 206.2 L154.6 207.5 L154.7 208.0 L155.2 208.5 L156.1 208.6 L157.6 209.2 L159.2 210.5 L160.4 212.2 L161.1 213.7 L161.5 214.4 L161.4 215.1 L161.1 215.1 L160.3 215.3 L159.3 216.5 L158.3 218.4 L157.4 220.9 L156.8 222.3 L156.7 222.7 L156.9 222.2 L158.3 221.8 L159.8 223.6 L159.5 226.4 L158.6 228.0 L158.2 228.6 L158.5 228.3 L157.8 227.4 L155.5 226.9 L153.0 227.0 L151.4 227.3 L150.6 227.4 L150.4 227.7 L150.4 228.1 L150.1 229.5 L150.0 231.5 L149.9 233.6 L149.7 235.1 L149.7 235.8 L149.6 236.0 L149.0 236.2 L147.6 236.5 L145.6 236.9 L142.8 237.2 L141.4 239.0 L141.2 240.7 L141.4 241.5 L141.5 241.7 L142.3 242.0 L143.7 242.2 L145.5 243.3 L147.1 245.1 L148.0 247.2 L147.9 249.1 L148.1 249.7 L147.6 250.4 L147.4 250.2 L146.4 250.4 L144.7 250.5 L142.3 250.9 L140.0 250.9 L138.2 250.2 L137.9 249.5 L138.8 249.4 L138.5 250.4 L136.8 252.1 L134.2 253.3 L132.4 253.9 L131.6 253.8 L131.7 253.7 L131.8 252.3 L131.5 249.9 L128.2 250.1 L126.6 251.6 L125.9 251.4 L126.0 251.3 L126.7 251.4 L127.7 252.9 L128.6 255.5 L129.5 258.4 L130.2 260.4 L130.9 261.0 L131.2 260.7 L130.8 260.4 L129.5 260.8 L127.1 262.0 L125.0 263.3 L123.8 264.4 L122.9 265.3 L122.5 265.6 L122.4 266.0 L122.6 266.5 L122.8 267.7 L123.3 269.2 L123.8 271.1 L124.5 272.7 L125.0 273.9 L125.4 274.4 L125.5 274.6 L125.3 274.9 L124.9 275.6 L124.4 276.9 L123.9 278.8 L123.4 280.3 L123.0 281.5 L122.5 282.4 L122.3 282.9 L122.2 283.3 L122.2 283.9 L122.4 284.7 L122.5 285.9 L122.6 287.3 L122.5 288.9 L122.3 290.4 L121.8 291.6 L121.5 292.5 L120.9 293.0 L120.4 293.4 L119.6 293.8 L118.7 293.9 L117.4 294.0 L115.9 294.4 L113.8 295.0 L111.4 295.3 L110.5 295.3 L110.4 295.0 L110.9 295.3 L111.6 296.7 L111.3 299.4 L110.6 302.3 L110.3 304.2 L110.3 304.9 L110.7 304.7 L110.1 304.3 L108.2 303.7 L105.5 303.7 L102.9 304.4 L101.8 304.8 L101.7 305.1 L102.3 305.8 L103.6 307.9 L105.4 310.2 L106.2 311.6 L106.4 312.0 L105.9 312.0 L103.9 312.8 L100.9 313.2 L98.6 312.3 L98.5 311.6 L98.9 312.0 L98.5 314.7 L99.6 318.0 L101.6 318.4 L101.4 316.5 L100.7 317.0 L99.9 320.0 L98.0 322.4 L96.8 322.9 L96.3 322.0 L96.4 321.9 L97.0 321.9 L96.8 322.9 L96.3 324.5 L95.3 326.6 L94.3 328.5 L93.4 330.0 L93.0 330.9 L92.9 331.3 L92.8 331.2 L92.1 331.0 L90.9 330.4 L89.0 330.2 L87.0 331.0 L85.9 332.4 L85.5 333.8 L85.5 334.9 L85.5 335.3 L85.7 335.1 L86.2 335.7 L86.9 336.5 L87.3 338.1 L87.5 340.0 L87.5 341.7 L87.2 343.1 L87.1 343.9 L87.4 343.8 L87.2 343.8 L86.7 343.8 L85.9 344.4 L86.0 346.0 L87.0 347.7 L87.5 349.7 L85.9 350.2 L85.1 348.4 L85.5 347.6 L86.2 347.7 L85.8 348.6 L84.7 350.2 L83.4 352.1 L82.2 354.0 L81.6 355.5 L81.7 356.3 L82.0 356.4 L82.0 356.0 L81.1 355.8 L79.5 355.8 L77.6 357.1 L76.8 359.1 L76.9 361.0 L77.4 362.1 L77.2 362.1 L77.2 361.3 L78.3 361.1 L79.3 362.6 L79.7 364.7 L79.7 366.8 L79.3 368.2 L79.5 368.7 L79.7 368.2 L79.2 368.2 L77.9 368.5 L76.6 370.1 L75.2 372.7 L74.3 374.7 L74.5 376.4 L74.0 376.6 L74.2 376.9 L74.6 376.8 L76.0 377.3 L78.2 377.7 L80.9 377.3 L83.2 376.0 L85.7 375.8 L87.5 377.2 L88.0 378.5 L88.1 379.3 L87.7 379.6 L86.8 380.6 L85.1 382.0 L83.3 383.9 L81.7 386.0 L80.6 387.3 L80.2 387.7 L80.2 387.5 L80.8 387.9 L82.2 389.0 L84.3 390.7 L86.5 392.1 L88.0 393.1 L88.6 393.2 L88.5 393.1 L88.1 393.7 L87.2 395.3 L85.5 397.4 L83.0 399.5 L81.8 399.4 L83.3 397.2 L84.0 398.6 L83.1 401.9 L82.5 404.8 L83.2 405.6 L84.1 404.1 L82.2 403.8 L79.1 405.7 L78.0 408.4 L77.5 410.1 L77.5 410.8 L77.1 409.7 L77.6 408.8 L79.4 408.8 L80.9 410.8 L81.2 413.9 L80.6 416.5 L81.1 417.8 L81.9 417.9 L82.3 417.2 L81.8 416.5 L80.1 416.9 L77.7 418.0 L75.8 419.5 L75.2 421.2 L75.3 422.7 L75.8 423.7 L76.6 424.2 L77.2 424.4 L78.3 424.4 L79.7 424.1 L81.4 423.9 L83.2 424.3 L84.6 425.6 L85.3 426.6 L85.3 427.8 L85.2 428.2 L84.8 429.0 L84.0 429.6 L82.8 430.5 L81.5 431.8 L79.3 433.5 L78.1 434.6 L77.6 434.4 L77.8 434.2 L78.5 434.9 L79.8 436.8 L81.4 439.2 L83.0 440.9 L84.0 441.0 L84.0 440.1 L83.4 440.1 L82.5 441.3 L82.5 444.0 L83.1 446.4 L83.1 448.0 L82.8 448.0 L83.6 447.5 L86.4 447.2 L89.1 447.8 L90.1 447.6 L90.1 448.0 L89.3 449.4 L87.9 451.8 L86.9 453.1 L86.3 453.0 L86.3 453.2 L86.4 454.2 L86.7 456.2 L87.2 458.0 L88.1 458.4 L88.2 458.6 L87.7 458.7 L87.9 460.3 L88.5 463.1 L88.9 465.5 L87.9 465.5 L87.8 464.4 L90.5 464.1 L94.3 464.4 L96.3 464.1 L95.9 463.1 L95.2 463.7 L95.3 466.7 L95.8 469.3 L95.8 470.6 L95.6 470.6 L96.1 470.4 L97.7 471.2 L99.6 472.6 L100.9 473.6 L101.2 474.0 L100.9 474.4 L99.9 475.7 L97.5 477.4 L95.1 477.8 L94.1 477.0 L95.1 475.7 L96.0 476.1 L95.8 477.7 L94.0 480.1 L92.2 482.7 L91.5 484.6 L92.1 485.2 L92.8 484.7 L92.3 483.9 L90.1 483.3 L87.1 483.3 L84.7 483.2 L84.2 482.7 L84.6 482.7 L84.5 484.2 L83.6 487.0 L83.2 489.3 L83.7 489.8 L83.8 489.3 L82.3 488.8 L80.0 491.0 L80.4 493.9 L81.6 495.4 L81.9 495.9 L81.7 495.6 L82.0 494.7 L83.5 493.5 L86.5 493.6 L88.9 495.3 L90.1 497.2 L90.5 498.0 L90.5 498.2 L90.0 498.2 L88.5 498.6 L86.2 499.9 L83.5 501.2 L81.5 502.1 L80.2 502.2 L79.7 502.0 L80.0 501.6 L80.4 501.6 L80.6 502.7 L80.6 504.6 L80.0 507.1 L79.3 509.6 L79.1 511.7 L79.2 512.8 L79.7 513.0 L79.9 512.7 L79.5 512.4 L78.3 512.4 L76.3 513.1 L74.0 514.1 L71.9 515.1 L70.7 515.2 L70.6 514.9 L71.0 515.1 L71.0 516.6 L70.5 519.0 L69.9 521.2 L69.7 522.5 L69.9 522.6 L69.8 521.8 L68.4 521.9 L66.6 523.4 L66.3 526.7 L66.3 528.5 L66.1 528.8 L65.5 527.3 L66.9 526.0 L69.3 527.3 L68.4 530.4 L66.9 532.4 L67.0 533.2 L68.2 532.8 L68.1 531.8 L66.0 531.0 L63.1 531.3 L61.7 532.1 L60.7 532.9 L60.1 533.9 L59.8 534.4 L59.8 534.5 L59.7 535.1 L59.7 535.9 L59.2 537.1 L58.3 538.3 L57.2 539.5 L56.0 540.4 L55.7 541.2 L55.7 541.6 L56.1 541.5 L55.8 541.2 L55.6 541.8 L55.6 542.9 L56.0 544.3 L56.0 546.0 L55.2 547.6 L54.3 547.6 L54.6 547.0 L54.7 547.7 L54.3 549.5 L53.1 551.4 L52.7 552.7 L52.9 553.0 L52.7 552.7 L51.4 552.8 L49.1 553.8 L47.1 555.0 L46.2 555.5 L46.2 555.5 L46.6 556.0 L47.8 557.8 L49.4 560.0 L51.0 561.3 L51.7 561.2 L51.4 560.7 L50.8 561.5 L50.2 563.7 L50.1 566.1 L50.0 567.5 L49.5 567.9 L49.5 567.8 L49.9 567.4 L50.9 568.0 L50.1 569.4 L48.4 570.3 L47.0 571.2 L46.8 572.3 L47.6 572.3 L47.7 572.1 L47.1 571.8 L46.6 573.0 L45.9 574.6 L45.6 576.7 L44.7 578.4 L44.2 578.0 L44.9 577.8 L46.8 579.6 L48.5 581.8 L49.5 582.3 L49.4 582.3 L48.1 583.0 L45.5 584.7 L43.4 585.8 L42.6 586.6 L42.5 587.3 L42.9 587.8 L44.2 588.7 L46.5 590.0 L49.0 590.9 L50.5 591.6 L51.0 592.1 L51.0 593.8 L49.3 595.4 L47.2 594.7 M309.8 6.5 Q308.0 16.2 298.1 18.9 Q288.2 21.6 282.8 26.1 Q277.4 30.6 280.1 38.7 Q282.8 46.8 280.1 50.4 Q277.4 54.0 272.0 51.3 Q266.6 48.6 259.4 45.0 Q252.2 41.4 245.0 41.4 Q237.8 41.4 233.3 45.9 Q228.8 50.4 229.7 54.9 L230.6 59.4 M6.0 415.5 L78.3 415.5 M45.6 594.6 L186.0 594.6 L182.0 606.0 L178.3 615.9 L179.6 625.7 L183.3 635.6 L189.4 645.4 L191.9 655.3 L195.6 663.9 L196.8 667.6 M300.0 238.5 L302.0 244.0 L307.0 247.0 L306.4 252.0 L303.4 284.0 L299.8 323.0 L294.8 372.0 L291.6 400.0 L285.0 464.0 L280.0 511.0 L281.3 552.7 L283.3 600.0 L284.2 606.0 L285.0 630.6 L285.5 654.0 M143.0 238.5 L300.0 238.5 L492.4 239.2 L600.0 239.2 L679.0 238.4 M209.9 104.7 L265.3 105.4 L311.3 105.4 L312.8 97.3 L309.6 88.7 L323.0 89.9 L325.6 91.9 L400.0 91.1 L600.0 96.8 L636.9 96.5 L787.1 94.8 L805.6 98.5 M636.9 96.5 Q649.2 89.9 662.8 86.8 Q676.3 83.7 678.8 78.8 Q681.2 73.9 688.6 72.1 Q696.0 70.2 696.6 65.2 Q697.2 60.3 702.2 57.8 Q707.1 55.4 707.7 51.7 Q708.3 48.0 718.1 43.1 Q728.0 38.2 735.4 34.5 Q742.8 30.8 747.7 25.9 Q752.6 20.9 757.5 17.2 Q762.5 13.5 760.0 11.7 Q757.6 9.8 753.3 8.6 L749.0 7.4 M762.5 13.5 Q766.2 24.6 771.8 30.2 Q777.3 35.7 781.0 38.8 Q784.6 41.9 790.8 40.6 Q797.0 39.4 801.3 37.0 L805.6 34.5 M787.1 94.8 Q783.4 105.9 782.2 112.1 Q781.0 118.2 776.6 118.2 Q772.3 118.2 768.6 121.9 Q765.0 125.6 762.5 131.8 Q760.0 137.9 756.3 138.5 Q752.6 139.1 748.9 137.2 Q745.2 135.4 740.3 136.7 Q735.4 137.9 730.5 141.6 Q725.6 145.3 721.9 148.9 Q718.2 152.6 715.7 148.3 Q713.2 144.0 710.8 144.7 Q708.3 145.3 704.6 148.9 Q701.0 152.6 697.3 153.8 Q693.6 155.1 693.0 160.1 Q692.3 165.0 688.0 166.8 Q683.7 168.6 681.2 168.0 Q678.8 167.4 675.1 170.5 Q671.4 173.6 666.5 176.1 Q661.5 178.5 655.4 183.4 Q649.2 188.3 641.9 187.7 Q634.5 187.1 628.4 188.9 Q622.2 190.8 617.2 194.5 Q612.3 198.2 611.6 199.1 Q611.0 200.0 609.8 206.2 Q608.6 212.3 604.3 214.4 Q600.0 216.5 598.5 215.7 Q597.0 214.8 594.5 215.4 Q592.1 216.0 590.9 220.3 Q589.7 224.6 589.0 231.8 L588.4 238.9 M679.0 238.4 L703.0 231.0 L718.0 224.6 L733.0 221.0 L748.0 221.0 L805.6 223.4 M679.0 238.4 L667.7 249.0 L660.0 262.8 L671.4 273.9 L685.0 283.7 L694.8 285.0 L701.0 296.0 L707.0 310.8 L718.0 328.0 L733.0 340.0 L742.8 350.0 L747.7 360.0 L758.8 366.0 L767.4 376.0 L766.0 384.6 L772.0 392.0 L779.7 398.0 L778.5 400.0 L783.4 406.0 L794.5 411.0 L798.0 419.7 L803.0 429.5 L805.6 439.0 M492.4 239.2 L498.5 274.0 L508.4 328.0 L515.8 377.0 L519.5 400.0 L523.0 419.7 L528.0 439.4 L534.0 454.0 L540.4 466.5 L538.0 475.0 L545.3 481.0 L543.0 486.0 L534.0 493.6 L533.0 503.0 L529.0 515.8 L528.0 530.5 L533.0 538.0 L534.0 552.7 L529.0 572.0 L536.7 589.7 L539.0 600.0 L541.0 610.0 L548.0 620.0 M536.7 594.6 L344.0 594.6 L344.5 600.0 L341.1 606.0 L346.0 610.9 L352.2 617.1 L359.1 623.2 L357.1 629.4 L355.9 636.8 L358.3 642.9 M548.0 620.0 L700.0 629.4 L743.4 632.0 L746.0 643.0 L748.4 650.0 L757.0 651.6 L760.7 635.6 L758.0 616.0 L763.0 609.7 L770.5 609.7 L780.0 614.6 L787.8 618.0 L797.6 620.8" fill="none" stroke="#000" stroke-width="1" stroke-linejoin="round"/>
<circle cx="407.5" cy="407.5" r="519.3" fill="none" stroke="#c6c5c5" stroke-width="1"/>
<circle cx="407.5" cy="407.5" r="400" fill="none" stroke="#c6c5c5" stroke-width="1"/>
<circle cx="407.5" cy="407.5" r="279.9" fill="none" stroke="#c6c5c5" stroke-width="1"/>
<circle cx="407.5" cy="407.5" r="159.7" fill="none" stroke="#c6c5c5" stroke-width="1"/>
<circle cx="407.5" cy="407.5" r="39.6" fill="none" stroke="#f01010" stroke-width="1.3"/>
<rect x="396.0" y="4" width="20" height="8" fill="#5c4f4a"/>
<text x="406" y="11" font-size="10" fill="#f4f49a" text-anchor="middle" textLength="19" lengthAdjust="spacingAndGlyphs" font-family='"Liberation Mono","DejaVu Sans Mono",monospace'>313</text>
<rect x="396.0" y="123.80000000000001" width="20" height="8" fill="#5c4f4a"/>
<text x="406" y="130.8" font-size="10" fill="#f4f49a" text-anchor="middle" textLength="19" lengthAdjust="spacingAndGlyphs" font-family='"Liberation Mono","DejaVu Sans Mono",monospace'>219</text>
<rect x="396.0" y="243.6" width="20" height="8" fill="#5c4f4a"/>
<text x="406" y="250.6" font-size="10" fill="#f4f49a" text-anchor="middle" textLength="19" lengthAdjust="spacingAndGlyphs" font-family='"Liberation Mono","DejaVu Sans Mono",monospace'>125</text>
<rect x="399.0" y="363.6" width="14" height="8" fill="#5c4f4a"/>
<text x="406" y="370.6" font-size="10" fill="#f4f49a" text-anchor="middle" textLength="13" lengthAdjust="spacingAndGlyphs" font-family='"Liberation Mono","DejaVu Sans Mono",monospace'>31</text>
</g>
<rect x="9.5" y="759.5" width="242" height="43" fill="#000" stroke="#808080"/>
<text x="13" y="771.1" font-size="9.3" fill="#e8e8e8" textLength="36" lengthAdjust="spacingAndGlyphs" font-family='"Liberation Sans","DejaVu Sans",sans-serif'>Symbols</text>
<text x="53" y="771.1" font-size="9.3" fill="#e8e8e8" textLength="17" lengthAdjust="spacingAndGlyphs" font-family='"Liberation Sans","DejaVu Sans",sans-serif'>-CG</text>
<text x="78" y="771.1" font-size="9.3" fill="#e8e8e8" textLength="14.5" lengthAdjust="spacingAndGlyphs" font-family='"Liberation Sans","DejaVu Sans",sans-serif'>-IC</text>
<text x="98.8" y="771.1" font-size="9.3" fill="#e8e8e8" textLength="20" lengthAdjust="spacingAndGlyphs" font-family='"Liberation Sans","DejaVu Sans",sans-serif'>+CG</text>
<text x="123.8" y="771.1" font-size="9.3" fill="#e8e8e8" textLength="17.5" lengthAdjust="spacingAndGlyphs" font-family='"Liberation Sans","DejaVu Sans",sans-serif'>+IC</text>
<text x="153" y="771.1" font-size="9.3" fill="#d0d8e8" textLength="90.5" lengthAdjust="spacingAndGlyphs" font-family='"Liberation Sans","DejaVu Sans",sans-serif'>Strike age color codes</text>
<text x="13" y="784.1" font-size="9.3" fill="#e8e8e8" textLength="28.3" lengthAdjust="spacingAndGlyphs" font-family='"Liberation Sans","DejaVu Sans",sans-serif'>Recent</text>
<text x="13" y="797.0" font-size="9.3" fill="#e8e8e8" textLength="15" lengthAdjust="spacingAndGlyphs" font-family='"Liberation Sans","DejaVu Sans",sans-serif'>Old</text>
<g stroke="#00e8e8" fill="none" stroke-width="1.1"><circle cx="60.5" cy="780.3" r="4"/><path d="M58 780.3 H63"/><path d="M82 780.3 H89"/><circle cx="110.5" cy="780.3" r="4"/><path d="M108 780.3 H113 M110.5 777.8 V782.8"/><path d="M132 780.3 H139 M135.5 776.8 V783.8"/></g>
<g stroke="#e8e800" fill="none" stroke-width="1.1"><circle cx="60.5" cy="793.4" r="4"/><path d="M58 793.4 H63"/><path d="M82 793.4 H89"/><circle cx="110.5" cy="793.4" r="4"/><path d="M108 793.4 H113 M110.5 790.9 V795.9"/><path d="M132 793.4 H139 M135.5 789.9 V796.9"/></g>
<text x="153.6" y="784.1" font-size="9.3" fill="#e6c800" textLength="16" lengthAdjust="spacingAndGlyphs" font-family='"Liberation Sans","DejaVu Sans",sans-serif'>15+</text>
<text x="188.2" y="784.1" font-size="9.3" fill="#e6a000" textLength="16" lengthAdjust="spacingAndGlyphs" font-family='"Liberation Sans","DejaVu Sans",sans-serif'>30+</text>
<text x="223" y="784.1" font-size="9.3" fill="#e68200" textLength="16" lengthAdjust="spacingAndGlyphs" font-family='"Liberation Sans","DejaVu Sans",sans-serif'>45+</text>
<text x="153.6" y="797.0" font-size="9.3" fill="#e66e00" textLength="16" lengthAdjust="spacingAndGlyphs" font-family='"Liberation Sans","DejaVu Sans",sans-serif'>60+</text>
<text x="188.2" y="797.0" font-size="9.3" fill="#e65000" textLength="16" lengthAdjust="spacingAndGlyphs" font-family='"Liberation Sans","DejaVu Sans",sans-serif'>75+</text>
<text x="223" y="797.0" font-size="9.3" fill="#e63200" textLength="16" lengthAdjust="spacingAndGlyphs" font-family='"Liberation Sans","DejaVu Sans",sans-serif'>90+</text>
<rect x="685" y="792" width="121" height="14" fill="#000"/>
<text x="689" y="802.6" font-size="10" fill="#f0f0f0" textLength="113" lengthAdjust="spacingAndGlyphs" font-family='"Liberation Sans","DejaVu Sans",sans-serif'>©2005 Astrogenic Systems</text>
<rect x="812.5" y="8.5" width="319" height="319.0" rx="4.5" ry="4.5" fill="#000" stroke="#c4c4c4" stroke-width="1"/>
<rect x="812.5" y="333.5" width="319" height="114.0" rx="4.5" ry="4.5" fill="#000" stroke="#c4c4c4" stroke-width="1"/>
<rect x="812.5" y="453.5" width="319" height="349.0" rx="4.5" ry="4.5" fill="#000" stroke="#c4c4c4" stroke-width="1"/>
<rect x="819.5" y="16.5" width="57" height="17" fill="#5a0000" stroke="#c8c8c8"/>
<text x="848.2" y="29.6" font-size="13.5" fill="#d8d8d8" font-weight="bold" text-anchor="middle" textLength="49.5" lengthAdjust="spacingAndGlyphs" font-family='"Liberation Serif","DejaVu Serif",serif'>STRIKE</text>
<rect x="883.5" y="16.5" width="57" height="17" fill="#303030" stroke="#c8c8c8"/>
<text x="912.3" y="29.6" font-size="13.5" fill="#c0c0c0" font-weight="bold" text-anchor="middle" textLength="44.5" lengthAdjust="spacingAndGlyphs" font-family='"Liberation Serif","DejaVu Serif",serif'>NOISE</text>
<rect x="994.5" y="16.5" width="127" height="17" fill="#303030" stroke="#c8c8c8"/>
<text x="998.8" y="29.5" font-size="12" fill="#fff" font-weight="bold" textLength="62" lengthAdjust="spacingAndGlyphs">Bng 143°</text>
<text x="1075" y="29.5" font-size="12" fill="#00e600" font-weight="bold" textLength="44" lengthAdjust="spacingAndGlyphs">376mi</text>
<rect x="821.5" y="64.5" width="81" height="15" fill="#585858" stroke="#c8c8c8"/>
<text x="862" y="76.3" font-size="11" fill="#f0f0f0" text-anchor="middle" textLength="66" lengthAdjust="spacingAndGlyphs">Strikes/min</text>
<rect x="931.5" y="64.5" width="81" height="15" fill="#585858" stroke="#c8c8c8"/>
<text x="972" y="76.3" font-size="11" fill="#f0f0f0" text-anchor="middle" textLength="57" lengthAdjust="spacingAndGlyphs">Close/min</text>
<rect x="1041.5" y="64.5" width="81" height="15" fill="#585858" stroke="#c8c8c8"/>
<text x="1082" y="76.3" font-size="11" fill="#f0f0f0" text-anchor="middle" textLength="63" lengthAdjust="spacingAndGlyphs">Noises/min</text>
<text x="903.5" y="111.5" font-size="27" fill="#fff" font-weight="bold" text-anchor="end" textLength="19.5" lengthAdjust="spacingAndGlyphs">0</text>
<text x="1013.5" y="111.5" font-size="27" fill="#fff" font-weight="bold" text-anchor="end" textLength="19.5" lengthAdjust="spacingAndGlyphs">0</text>
<text x="1123.3" y="111.5" font-size="27" fill="#b8b8b8" font-weight="bold" text-anchor="end" textLength="19.5" lengthAdjust="spacingAndGlyphs">0</text>
<text x="903.2" y="142.6" font-size="12" fill="#fff" text-anchor="end" textLength="77.3" lengthAdjust="spacingAndGlyphs">Total Strikes</text>
<text x="903.2" y="160.4" font-size="12" fill="#e8e8e8" text-anchor="end" textLength="15.8" lengthAdjust="spacingAndGlyphs">68</text>
<text x="1013.2" y="142.6" font-size="12" fill="#fff" text-anchor="end" textLength="69" lengthAdjust="spacingAndGlyphs">Total Close</text>
<text x="1013.2" y="160.4" font-size="12" fill="#e8e8e8" text-anchor="end" textLength="7.9" lengthAdjust="spacingAndGlyphs">0</text>
<text x="1123.2" y="142.6" font-size="12" fill="#c4c4c4" text-anchor="end" textLength="76.2" lengthAdjust="spacingAndGlyphs">Total Noises</text>
<text x="1123.2" y="160.4" font-size="12" fill="#d8d8d8" text-anchor="end" textLength="15.8" lengthAdjust="spacingAndGlyphs">49</text>
<text x="820.7" y="215.1" font-size="12" fill="#c0c0c0" textLength="165.5" lengthAdjust="spacingAndGlyphs">Lightning type distribution</text>
<rect x="821" y="217" width="303" height="1" fill="#a8a8a8"/>
<text x="820.8" y="236.6" font-size="11" fill="#fff" font-weight="bold" textLength="85.5" lengthAdjust="spacingAndGlyphs">Cloud-ground</text>
<text x="912.0" y="237.5" font-size="12.5" fill="#e8e8e8" textLength="10.4" lengthAdjust="spacingAndGlyphs">+</text>
<rect x="925.5" y="227.5" width="50" height="10" rx="2" fill="#000" stroke="#8c8c8c"/><rect x="926" y="228" width="22" height="9" fill="#ff0000"/>
<text x="978.8" y="236.6" font-size="11" fill="#fff" font-weight="bold" textLength="30.3" lengthAdjust="spacingAndGlyphs">44%</text>
<rect x="1016" y="231.6" width="6.5" height="1.5" fill="#d0d0d0"/>
<rect x="1028.5" y="227.5" width="50" height="10" rx="2" fill="#000" stroke="#8c8c8c"/><rect x="1029" y="228" width="20.5" height="9" fill="#87cefa"/>
<text x="1081.6" y="236.6" font-size="11" fill="#fff" font-weight="bold" textLength="30.3" lengthAdjust="spacingAndGlyphs">41%</text>
<text x="820.8" y="260.4" font-size="11" fill="#c4c4c4" font-weight="bold" textLength="38.6" lengthAdjust="spacingAndGlyphs">Count</text>
<text x="924.8" y="260.4" font-size="11" fill="#fff" font-weight="bold" textLength="16.2" lengthAdjust="spacingAndGlyphs">30</text>
<text x="1028.4" y="260.4" font-size="11" fill="#fff" font-weight="bold" textLength="16.2" lengthAdjust="spacingAndGlyphs">28</text>
<text x="820.8" y="290.5" font-size="11" fill="#fff" font-weight="bold" textLength="64.8" lengthAdjust="spacingAndGlyphs">Intracloud</text>
<text x="912.0" y="291.4" font-size="12.5" fill="#e8e8e8" textLength="10.4" lengthAdjust="spacingAndGlyphs">+</text>
<rect x="925.5" y="281.5" width="50" height="10" rx="2" fill="#000" stroke="#8c8c8c"/><rect x="926" y="282" width="2.5" height="9" fill="#ff69b4"/>
<text x="978.8" y="290.5" font-size="11" fill="#fff" font-weight="bold" textLength="22" lengthAdjust="spacingAndGlyphs">4%</text>
<rect x="1016" y="285.6" width="6.5" height="1.5" fill="#d0d0d0"/>
<rect x="1028.5" y="281.5" width="50" height="10" rx="2" fill="#000" stroke="#8c8c8c"/><rect x="1029" y="282" width="5" height="9" fill="#00e000"/>
<text x="1081.6" y="290.5" font-size="11" fill="#fff" font-weight="bold" textLength="30.3" lengthAdjust="spacingAndGlyphs">10%</text>
<text x="820.8" y="314.5" font-size="11" fill="#c4c4c4" font-weight="bold" textLength="38.6" lengthAdjust="spacingAndGlyphs">Count</text>
<text x="924.8" y="314.5" font-size="11" fill="#fff" font-weight="bold" textLength="8.1" lengthAdjust="spacingAndGlyphs">3</text>
<text x="1028.4" y="314.5" font-size="11" fill="#fff" font-weight="bold" textLength="8.1" lengthAdjust="spacingAndGlyphs">7</text>
<text x="820.6" y="352.4" font-size="16" fill="#00f000" font-weight="bold" textLength="214.5" lengthAdjust="spacingAndGlyphs">3/18/2026 10:00:18 AM</text>
<rect x="821" y="358" width="302" height="1" fill="#a8a8a8"/>
<text x="820.8" y="387.6" font-size="12" fill="#fff" textLength="48.5" lengthAdjust="spacingAndGlyphs">Squelch</text>
<text x="909.2" y="387.6" font-size="12" fill="#fff" textLength="7.9" lengthAdjust="spacingAndGlyphs">0</text>
<text x="980.8" y="387.6" font-size="12" fill="#fff" textLength="44.5" lengthAdjust="spacingAndGlyphs">Upload</text>
<text x="1060.6" y="387.6" font-size="12" fill="#c0c0c0" textLength="54.6" lengthAdjust="spacingAndGlyphs">Disabled</text>
<text x="820.8" y="407.6" font-size="12" fill="#fff" textLength="73" lengthAdjust="spacingAndGlyphs">Persistence</text>
<text x="909.2" y="407.6" font-size="12" fill="#fff" textLength="41.6" lengthAdjust="spacingAndGlyphs">90 min</text>
<text x="980.8" y="407.6" font-size="12" fill="#fff" textLength="51" lengthAdjust="spacingAndGlyphs">Capture</text>
<text x="1060.6" y="407.6" font-size="12" fill="#00e000" textLength="37" lengthAdjust="spacingAndGlyphs">Active</text>
<text x="820.8" y="427.6" font-size="12" fill="#fff" textLength="40" lengthAdjust="spacingAndGlyphs">Range</text>
<text x="909.2" y="427.6" font-size="12" fill="#fff" textLength="41.6" lengthAdjust="spacingAndGlyphs">313 mi</text>
<text x="980.8" y="427.6" font-size="12" fill="#fff" textLength="53" lengthAdjust="spacingAndGlyphs">Receiver</text>
<text x="1060.6" y="427.6" font-size="12" fill="#00e000" textLength="51.2" lengthAdjust="spacingAndGlyphs">Enabled</text>
<text x="820.8" y="474.6" font-size="12" fill="#c0c0c0" textLength="44.2" lengthAdjust="spacingAndGlyphs">Uptime</text>
<text x="909.4" y="474.6" font-size="12" fill="#fff" textLength="52.4" lengthAdjust="spacingAndGlyphs">1557:45</text>
<text x="980.8" y="474.6" font-size="12" fill="#c0c0c0" textLength="62.4" lengthAdjust="spacingAndGlyphs">Peak time</text>
<text x="1060.6" y="474.6" font-size="12" fill="#c0c0c0" textLength="24.6" lengthAdjust="spacingAndGlyphs">Plot</text>
<text x="820.8" y="497.6" font-size="12" fill="#c0c0c0" textLength="61.6" lengthAdjust="spacingAndGlyphs">Peak rate</text>
<text x="909.2" y="497.6" font-size="12" fill="#fff" textLength="34.8" lengthAdjust="spacingAndGlyphs">3/min</text>
<text x="980.8" y="497.6" font-size="12" fill="#fff" textLength="51" lengthAdjust="spacingAndGlyphs">2:16 AM</text>
<text x="1060.6" y="497.6" font-size="12" fill="#fff" textLength="36.4" lengthAdjust="spacingAndGlyphs">Strike</text>
<text x="822" y="527.6" font-size="12" fill="#c0c0c0" textLength="77.2" lengthAdjust="spacingAndGlyphs">Trend graph</text>
<text x="908" y="527.6" font-size="12" fill="#fff" textLength="42" lengthAdjust="spacingAndGlyphs">60 min</text>
<path d="M1088.5 542 V777.5 M822 777.5 H1089" stroke="#c8c8c8" fill="none"/>
<path d="M1084 542.5 H1089 M1084 581.5 H1089 M1084 620.5 H1089 M1084 659.5 H1089 M1084 698.5 H1089 M1084 738.5 H1089" stroke="#c8c8c8" fill="none"/>
<path d="M822.5 775 V780 M866.5 775 V780 M911.5 775 V780 M955.5 775 V780 M999.5 775 V780 M1044.5 775 V780 M1088.5 775 V780" stroke="#c8c8c8" fill="none"/>
<text x="820" y="792.8" font-size="11" fill="#d4d4d4" font-family='"Liberation Sans","DejaVu Sans",sans-serif'>60</text>
<text x="864.4" y="792.8" font-size="11" fill="#d4d4d4" font-family='"Liberation Sans","DejaVu Sans",sans-serif'>50</text>
<text x="908.8" y="792.8" font-size="11" fill="#d4d4d4" font-family='"Liberation Sans","DejaVu Sans",sans-serif'>40</text>
<text x="953.2" y="792.8" font-size="11" fill="#d4d4d4" font-family='"Liberation Sans","DejaVu Sans",sans-serif'>30</text>
<text x="997" y="792.8" font-size="11" fill="#d4d4d4" font-family='"Liberation Sans","DejaVu Sans",sans-serif'>20</text>
<text x="1041.4" y="792.8" font-size="11" fill="#d4d4d4" font-family='"Liberation Sans","DejaVu Sans",sans-serif'>10</text>
<text x="1087.4" y="792.8" font-size="11" fill="#d4d4d4" font-family='"Liberation Sans","DejaVu Sans",sans-serif'>0</text>
<text x="1100" y="792.8" font-size="11" fill="#d4d4d4" font-family='"Liberation Sans","DejaVu Sans",sans-serif'>min</text>
<text x="1092" y="546.7" font-size="11" fill="#d4d4d4" font-family='"Liberation Sans","DejaVu Sans",sans-serif'>30</text>
<text x="1092" y="624.5" font-size="11" fill="#d4d4d4" font-family='"Liberation Sans","DejaVu Sans",sans-serif'>20</text>
<text x="1092" y="703.5" font-size="11" fill="#d4d4d4" font-family='"Liberation Sans","DejaVu Sans",sans-serif'>10</text>
<path d="M879.5 777 L880.5 769.5 H884 L885.5 777" stroke="#fff" fill="none"/>
</svg>
</body></html>
